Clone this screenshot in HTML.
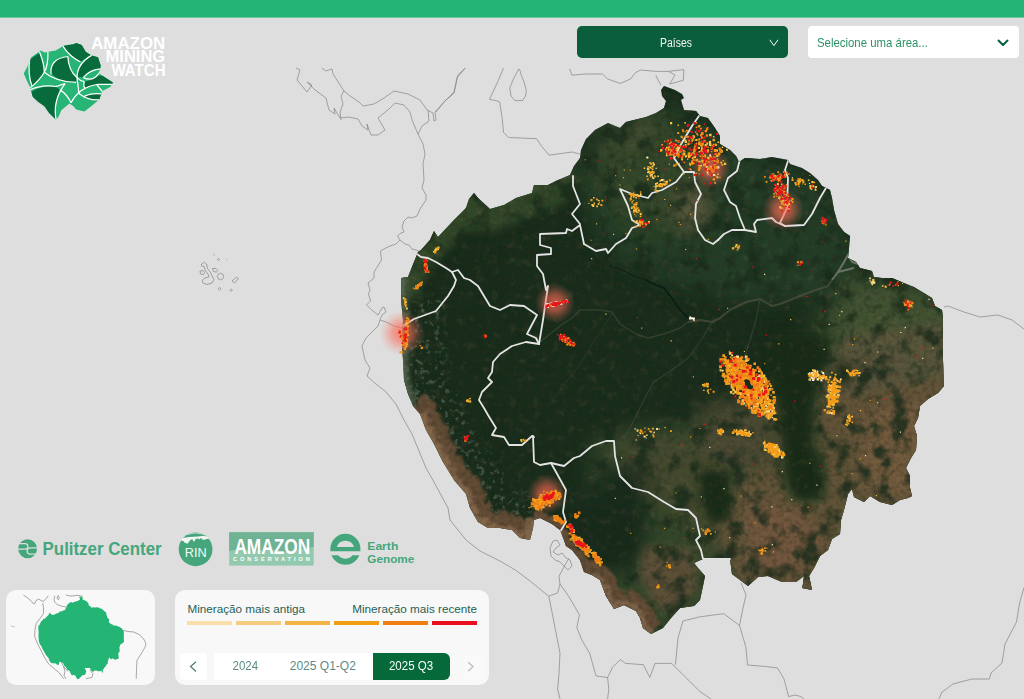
<!DOCTYPE html>
<html lang="pt"><head><meta charset="utf-8"><title>Amazon Mining Watch</title>
<style>
html,body{margin:0;padding:0;}
body{width:1024px;height:699px;overflow:hidden;background:#dedede;font-family:"Liberation Sans",sans-serif;position:relative;}
#topbar{position:absolute;left:0;top:0;width:1024px;height:17px;background:#24b574;border-bottom:1px solid #6ec59e;}
#map{position:absolute;left:0;top:0;width:1024px;height:699px;}
#dd1{position:absolute;left:577px;top:26px;width:211px;height:32px;border-radius:5px;background:#0b5e3c;color:#f4f4f0;font-size:12px;line-height:34px;}
#dd1 span{position:absolute;left:82.8px;top:0;display:inline-block;transform:scaleX(0.85);transform-origin:0 50%;font-size:12.3px;}
#dd1 svg{position:absolute;left:192px;top:13px;}
#dd2{position:absolute;left:808px;top:26px;width:211px;height:32px;border-radius:4px;background:#fff;color:#2c9263;font-size:12.2px;line-height:34px;}
#dd2 span{position:absolute;left:9px;top:0;white-space:nowrap;display:inline-block;transform:scaleX(0.935);transform-origin:0 50%;}
#dd2 svg{position:absolute;left:189px;top:13px;}
#mini{position:absolute;left:6px;top:590px;width:149px;height:95px;border-radius:10px;background:#f8f8f8;overflow:hidden;}
#legend{position:absolute;left:175px;top:590px;width:314px;height:95px;border-radius:10px;background:#f8f8f8;}
#legend .t{position:absolute;top:12.4px;font-size:11.7px;color:#265f55;white-space:nowrap;line-height:14px;}
#legend .bar{position:absolute;top:31.2px;height:3.7px;width:45.3px;}
#legend .btn{position:absolute;top:63px;height:27px;border-radius:4px;}
#legend .yr span{display:inline-block;transform:scaleX(0.96);}
#legend .yr{position:absolute;top:63px;height:27px;line-height:27.5px;font-size:12px;color:#5c8a86;text-align:center;white-space:nowrap;}
</style></head><body>
<svg id="map" width="1024" height="699" viewBox="0 0 1024 699">
<defs>
<path id="amz" d="M401,300 L401.5,278 L408,277 L410,272 L414,262 L418,252 L421,250 L430,240 L434,231 L438,237 L454,220 L466,208 L469,199 L474,193 L478,198 L490,209 L504,205 L516,198 L532,193 L534,185 L548,185 L556,181 L570,175 L574,166 L580,158 L581,150 L586,139 L595,130 L608,123 L620,128 L626,122 L646,117 L656,113 L664,108 L666,101 L662,96 L661,90 L664,86 L675,90 L682,94 L684,98 L681,100 L684,110 L696,111 L700,116 L708,118 L715,128 L720,136 L720,144 L730,150 L736,156 L739,162 L745,158 L760,159 L772,157 L788,160 L790,164 L802,168 L810,173 L818,180 L822,186 L826,188 L830,190 L832,198 L834,210 L838,224 L844,232 L850,236 L849,248 L848,258 L856,262 L860,268 L872,271 L874,277 L882,278 L892,278 L904,283 L914,287 L924,293 L932,298 L935,306 L942,310 L943,316 L943,360 L944,386 L938,393 L928,399 L920,406 L918,418 L914,426 L917,436 L916,450 L911,458 L906,468 L910,476 L910,488 L912,496 L908,498 L900,500 L892,505 L880,502 L870,496 L864,502 L854,497 L852,489 L848,494 L844,510 L841,520 L840,534 L832,539 L828,550 L820,556 L814,568 L809,576 L811,585 L812,590 L802,588 L803,584 L804,576 L796,582 L782,582 L768,576 L758,577 L748,586 L740,580 L732,574 L730,559 L703,559 L694,563 L698,568 L705,576 L703,586 L700,600 L694,606 L680,608 L671,618 L663,628 L651,634 L643,628 L640,618 L636,611 L624,605 L614,609 L606,596 L600,580 L592,575 L584,572 L580,560 L572,550 L566,546 L564,540 L560,530 L552,524 L540,518 L534,520 L533,528 L530,540 L520,538 L512,530 L500,528 L488,528 L478,522 L470,508 L466,494 L454,480 L443,462 L434,444 L426,430 L420,414 L413,406 L408,394 L404,380 L403,360 L402,346 L403,320Z"/>
<clipPath id="amzclip"><use href="#amz"/></clipPath>
<filter id="b2" x="-20%" y="-20%" width="140%" height="140%"><feGaussianBlur stdDeviation="2"/></filter>
<filter id="b3" x="-20%" y="-20%" width="140%" height="140%"><feGaussianBlur stdDeviation="3"/></filter>
<filter id="b6" x="-20%" y="-20%" width="140%" height="140%"><feGaussianBlur stdDeviation="5"/></filter>
<filter id="b10" x="-30%" y="-30%" width="160%" height="160%"><feGaussianBlur stdDeviation="10"/></filter>
<filter id="rough" x="-10%" y="-10%" width="120%" height="120%"><feTurbulence type="fractalNoise" baseFrequency="0.13" numOctaves="3" seed="3" result="t"/><feDisplacementMap in="SourceGraphic" in2="t" scale="12" xChannelSelector="R" yChannelSelector="G"/><feGaussianBlur stdDeviation="1.1"/></filter>
<filter id="nbrown" color-interpolation-filters="sRGB" x="0" y="0" width="100%" height="100%">
<feTurbulence type="fractalNoise" baseFrequency="0.22" numOctaves="3" seed="5"/>
<feColorMatrix type="matrix" values="0 0 0 0 0.22  0 0 0 0 0.17  0 0 0 0 0.11  3.2 0 0 0 -1.45"/>
</filter>
<filter id="ncloud" color-interpolation-filters="sRGB" x="0" y="0" width="100%" height="100%">
<feTurbulence type="fractalNoise" baseFrequency="0.2" numOctaves="3" seed="8"/>
<feColorMatrix type="matrix" values="0 0 0 0 0.62  0 0 0 0 0.70  0 0 0 0 0.66  5 0 0 0 -2.75"/>
</filter>
<mask id="cm" maskUnits="userSpaceOnUse" x="380" y="200" width="300" height="460"><path d="M402,300 L403,330 L404,380 L413,406 L420,414 L426,430 L434,444 L443,462 L454,480 L466,494 L470,508 L477,520 L486,529 L500,531 L512,533 L521,540 L530,541 L534,520" fill="none" stroke="#fff" stroke-width="84" stroke-linejoin="round" filter="url(#b6)"/></mask>
<filter id="ngreen" color-interpolation-filters="sRGB" x="0" y="0" width="100%" height="100%">
<feTurbulence type="fractalNoise" baseFrequency="0.055" numOctaves="4" seed="4"/>
<feColorMatrix type="matrix" values="0 0 0 0 0.088  0 0 0 0 0.17  0 0 0 0 0.104  4.0 0 0 0 -1.9"/>
</filter>
<filter id="nlight" color-interpolation-filters="sRGB" x="0" y="0" width="100%" height="100%">
<feTurbulence type="fractalNoise" baseFrequency="0.12" numOctaves="3" seed="21"/>
<feColorMatrix type="matrix" values="0 0 0 0 0.66  0 0 0 0 0.52  0 0 0 0 0.38  0 3.5 0 0 -1.95"/>
</filter>
<filter id="nsub" color-interpolation-filters="sRGB" x="0" y="0" width="100%" height="100%">
<feTurbulence type="fractalNoise" baseFrequency="0.03" numOctaves="3" seed="9"/>
<feColorMatrix type="matrix" values="0 0 0 0 0.17  0 0 0 0 0.28  0 0 0 0 0.16  0 0 2.5 0 -1.1"/>
</filter>
<radialGradient id="glow"><stop offset="0" stop-color="#ff624e" stop-opacity="0.78"/><stop offset="0.4" stop-color="#fb6a55" stop-opacity="0.56"/><stop offset="0.75" stop-color="#f67460" stop-opacity="0.2"/><stop offset="1" stop-color="#f08070" stop-opacity="0"/></radialGradient>
</defs>
<g fill="none" stroke="#8a8a8a" stroke-width="0.75" stroke-linejoin="round">
<path d="M296,68 L300,70 L297,80 L307,92 L312,85 L307,82 L315,90 L326,98 L329,110 L335,114 L334,108 L340,118 L349,117 L358,119 L362,126 L368,130 L367,124 L371,135 L378,135 L385,130 L378,118 L389,109 L395,103 L404,105 L410,112 L412,120 L418,134 L422,126 L429,121 L428,110"/>
<path d="M322,68 L326,71 L332,69 L333,74 L344,91 L350,96 L359,102 L363,106 L374,104 L384,98 L394,91 L408,94 L420,100 L427,110 L433,113 L434,121 L436,120 L435,112 L446,100 L454,92 L457,78 L465,68"/>
<path d="M344,91 L341,96 L343,104 L340,112 L341,120"/>
<path d="M418,134 L423,144 L425,154 L423,164 L424,180 L422,188 L426,195 L426,200 L420,209 L417,216 L412,218 L408,217 L404,221 L402,227 L404,232 L401,233 L397.5,236 L400,240 L396,244 L390,246 L384,249 L380.5,251 L381.5,260 L374,272 L374,278 L368,283 L370,290 L368.5,294 L370.5,301 L366.5,305 L373,311 L378,315 L382,308 L384,307 L386,312 L382,315 L380,320 L378,326 L366,338 L362,346 L365,360 L370,368 L367,376 L376,384 L386,392 L396,404 L404,420 L412,434 L426,468 L434,482 L448,508 L450,520 L466,540 L480,551 L500,561 L515.4,570 L530.7,581.5 L548.7,596.3 L550,602 L555,627.6 L560,653 L559,673.6 L557.6,689 L560,699"/>
<path d="M548.7,596.3 L557.6,593 L560,584 L559,576.3 L566.6,562 L569,558.4"/>
<path d="M400,240 L405,244 L409,245 L412,249 L418,250.5 L419,252"/>
<path d="M380,320 L386,322 L394,326 L402,328"/>
<path d="M560,584 L569,596.8 L579.4,614.8 L576.8,627.6 L582,640.4 L589.6,653 L596,676 L607.6,677.5 L608.8,689 L607.6,699"/>
<path d="M607.6,677.5 L612.7,667 L620.4,659.6 L625.5,663.4 L643.4,664.7 L649.8,677.5 L655,663.4 L671.6,663.4 L684.4,676 L700,691.6 L711,699"/>
<path d="M675.4,664.7 L678,637.8 L683,621 L700,616.8 L723.7,613.7 L739.5,625.4"/>
<path d="M741,582.7 L746,595 L743,608 L739.5,625.4 L746,647.6 L747.5,665 L766.5,666.6 L777.5,668 L784,679 L788.6,696.6 L795,695 L801,696.6 L804,699"/>
<path d="M944,307 L948,306 L964,312 L980,317 L998,315 L1012,320 L1024,329"/>
<path d="M1024,587.5 L1019.6,603 L1016.5,622 L1005,644 L1002,663 L991,673 L989.5,679 L972,679 L953,684 L942,692 L939,699"/>
<path d="M503.5,68 L498.4,80.3 L489.5,99.4 L495.9,100.6 L499.7,102 L502.2,118.4 L503.5,132.4 L508.6,137.5 L536.5,138.7 L541.6,146.3 L549.2,155.2 L572,152 L579.7,154"/>
<path d="M518.7,68.9 L513,80 L509.8,88 L511,96 L515,100.6 L522.5,100.6 L525.5,96 L526.3,90.5 L524,82 L521.3,75.2 L519.5,69"/>
<path d="M569.5,68.9 L572,75.2 L584.7,74 L602.5,74 L607.6,79 L620.3,83.4 L630.5,79 L635.5,72.7 L640.6,70 L655.8,71.4 L668.5,71.4 L683.8,69.6 L683.3,80.3 L669.8,84 L675,75 L668.5,71.4"/>
<path d="M655.8,75.2 L658,80 L661,85.4"/>
<path d="M465.4,68 L457.8,75 L456,84 L454,93 L450,97 L445,100.6 L440,107 L436,112"/>
<path d="M553,541 L557,540 L560,545 L556,548 L553,552 L558,555 L562,553 L566,558 L570,560 L572,566 L568,570 L564,566 L560,562 L555,560 L551,556 L550,548 L553,541"/>
<path d="M204.5,262.2 L206.5,264 L207.5,268.5 L211,273 L212,276 L214,279.5 L212,283 L207,284.5 L203,283 L202.2,280.5 L205,278 L209,277 L208,274 L205.5,271 L204,266.5 L201.5,266 L201.2,264.5 L204.5,262.2"/>
<path d="M200,271 L203,270.5 L204.5,272.5 L203.5,274.5 L200.5,274 L200,271"/>
<path d="M212.5,268.5 L216,268.5 L217.8,270.5 L216.5,272.2 L213.5,271.5 L212.5,268.5"/>
<path d="M217.3,276.5 L218.2,274.2 L220.5,273.3 L222.8,274.2 L223.7,276.5 L222.8,278.8 L220.5,279.7 L218.2,278.8 L217.3,276.5"/>
<path d="M232,281 L236.5,277.2 L238.5,278.5 L234.5,283 L232,281"/>
<path d="M217.3,259.5 L218.5,258.3 L219.7,259.5 L218.5,260.7 L217.3,259.5"/>
<path d="M218.1,288.8 L219.5,287.4 L220.9,288.8 L219.5,290.2 L218.1,288.8"/>
<path d="M230,290.2 L231.2,289 L232.4,290.2 L231.2,291.4 L230,290.2"/>
<path d="M226.4,259.2 L227.2,259.8"/>
<path d="M213.6,254.2 L214.4,255.4"/>
</g>
<use href="#amz" fill="#172c1b"/>
<g clip-path="url(#amzclip)">
 <!-- colour zones -->
 <g filter="url(#b10)">
  <path fill="#203d25" d="M575,170 L600,125 L660,100 L720,130 L760,155 L830,185 L860,260 L940,300 L900,330 L820,300 L740,300 L660,280 L600,250Z"/>
  <path fill="#33472b" d="M596,436 L660,424 L720,420 L770,392 L800,340 L836,292 L880,270 L950,296 L950,640 L600,640 L580,540Z"/>
  <path fill="#3f5233" d="M856,276 L950,300 L950,395 L900,400 L850,390 L832,340 L838,300Z"/>
  <path fill="#43492f" d="M612,440 L700,436 L744,470 L736,556 L706,556 L692,520 L652,500 L622,484Z"/>
  <path fill="#172c1b" d="M566,490 L640,492 L650,530 L640,570 L600,580 L580,560Z"/>
  <path fill="#4a4a30" d="M700,404 L800,398 L830,420 L800,470 L740,480 L700,450Z"/>
  <path fill="#33472b" d="M590,130 L660,112 L690,150 L700,230 L640,236 L596,190Z"/>
  <path fill="#172c1b" d="M596,470 L640,462 L650,500 L620,520 L600,510Z"/>
  <ellipse cx="692" cy="208" rx="16" ry="20" fill="#5c5c40"/>
  <ellipse cx="636" cy="134" rx="20" ry="9" fill="#4a5236"/>
 </g>
 <path d="M404,300 L402,278 L418,254 L434,234 L466,208 L490,212 L532,196 L556,184 L574,172" fill="none" stroke="#314a2b" stroke-width="40" filter="url(#b6)" opacity="0.95"/>
 <g filter="url(#b6)">
  <path fill="#56553a" d="M846,334 L950,322 L950,400 L832,402 L822,372Z"/>
  <path fill="#58523a" d="M822,360 L900,350 L900,470 L826,470 L818,410Z"/>
  <path fill="#615238" d="M832,398 L950,376 L950,505 L900,512 L850,502 L846,540 L818,595 L780,590 L745,592 L726,562 L716,520 L738,482 L772,462 L792,500 L826,502 L824,440 L816,410Z"/>
  <path fill="#6f5a3d" d="M866,410 L935,400 L925,490 L880,498 L860,480Z"/>
  <path fill="#70563c" d="M745,500 L800,510 L828,540 L800,578 L752,572Z"/>
  <path fill="#5b4f37" d="M644,548 L690,548 L698,590 L672,612 L652,604 L640,572Z"/>
 </g>
 <rect x="395" y="80" width="555" height="560" filter="url(#ngreen)" opacity="0.8"/>
 <g filter="url(#b6)">
  <path fill="#152c19" d="M772,332 L822,332 L828,358 L814,398 L810,440 L822,468 L822,498 L796,500 L785,470 L782,430 L776,390 L768,360Z"/>
  <path fill="#152a19" d="M700,470 L728,470 L732,520 L712,524 L700,500Z"/>
  <path fill="#152a19" d="M836,362 L852,364 L850,384 L836,384Z"/>
 </g>
 <g mask="url(#cm)"><rect x="380" y="200" width="300" height="460" filter="url(#ncloud)" opacity="0.32"/></g>
 <g filter="url(#rough)">
 <path d="M413,406 L420,414 L426,430 L434,444 L443,462 L454,480 L466,494 L470,508 L477,520 L486,529 L500,531 L512,533 L521,540 L530,541 L534,520" fill="none" stroke="#614b36" stroke-width="36" stroke-linejoin="round"/>
 <path d="M534,520 L540,518 L552,524 L560,530 L566,546 L572,550 L580,560 L584,572" fill="none" stroke="#614b36" stroke-width="14" stroke-linejoin="round"/>
 <path d="M584,572 L592,575 L600,580 L606,596 L614,609 L624,605 L636,611 L640,618 L643,628 L651,634" fill="none" stroke="#614b36" stroke-width="30" stroke-linejoin="round"/>
 <path d="M420,414 L426,430 L434,444 L443,462 L454,480 L466,494 L470,508 L477,520 L486,529 L500,531 L512,533 L521,540 L530,541 L534,520" fill="none" stroke="#80654a" stroke-width="13" stroke-linejoin="round"/>
 <path d="M592,575 L600,580 L606,596 L614,609 L624,605 L636,611 L640,618 L643,628 L651,634" fill="none" stroke="#7b6248" stroke-width="9" stroke-linejoin="round"/>
 </g>
 <path d="M404,255 L402,300 L403,330 L404,380 L413,406" fill="none" stroke="#5a6a55" stroke-width="8" filter="url(#b3)"/>
 <rect x="395" y="80" width="555" height="560" filter="url(#nlight)" opacity="0.13"/>
 <rect x="395" y="80" width="555" height="560" filter="url(#nbrown)" opacity="0.3"/>
 <!-- rivers -->
 <g fill="none" stroke="#46503c" stroke-width="1.4" opacity="0.55" stroke-linejoin="round">
  <path d="M540,342 L560,326 L572,318 L580,310 L600,310 L612,312 L620,324 L636,334 L648,338 L664,334 L680,328 L688,322 L700,320 L712,322 L720,318 L730,310 L746,302 L760,299"/>
  <path d="M688,322 L700,320 L712,322 L720,318 L730,310 L746,302 L760,299 L772,306 L780,304 L790,300 L810,292 L828,286 L832,280" stroke="#5e5848" stroke-width="2.2" opacity="1"/>
  <path d="M712,322 L700,342 L688,358 L672,370 L654,382 L648,392 L640,408 L634,420 L624,440" stroke-width="1.1"/>
  <path d="M612,314 L600,332 L590,348 L580,364 L568,380 L556,396" stroke-width="0.9" opacity="0.7"/>
  <path d="M760,299 L756,320 L750,340 L744,360" stroke-width="1.1"/>
 </g>
 <path d="M832,280 L838,272 L844,262 L848,255 L852,262 L858,264 M838,272 L846,270 L854,268" fill="none" stroke="#7d8078" stroke-width="2" opacity="0.8"/>
 <path d="M646,280 L656,285 L664,288 L672,298 L680,310 L688,318" fill="none" stroke="#0b1a10" stroke-width="1.8" opacity="0.85"/>
 <path d="M610,266 L622,270 L634,276 L646,280" fill="none" stroke="#0b1a10" stroke-width="1.1" opacity="0.7"/>
</g>
<g fill="none" stroke="#e4e4e4" stroke-width="1.8" stroke-linejoin="round" stroke-linecap="round" clip-path="url(#amzclip)">
<path d="M403,326 L414,319 L436,311 L448,296 L454,286 L456,280 L452,272 L446,268 L436,262 L428,258 L421,257 L417,254"/>
<path d="M452,272 L458,270 L464,278 L470,280 L478,286 L484,296 L490,306 L500,310 L510,305 L524,306 L537,315 L527,334 L536,338 L539,344"/>
<path d="M539,344 L543,320 L548,286 L546,290 L543,274 L537,266 L537,255 L551,254 L551,248 L540,245 L540,234 L566,233 L567,229 L572,231 L580,225 L584,244"/>
<path d="M573,176 L573,186 L580,204 L572,214 L580,224"/>
<path d="M584,244 L596,251 L606,249 L608,253 L616,244 L626,238 L632,228 L640,225 L632,220 L628,206 L620,189 L632,194 L648,198 L652,193 L662,190 L676,182 L684,172"/>
<path d="M699,116 L692,126 L686,136 L680,146 L674,158 L684,172"/>
<path d="M684,172 L694,172 L695,182 L701,194 L696,204 L695,218 L698,230 L705,240 L713,244 L718,240"/>
<path d="M740,159 L737,171 L728,178 L724,190 L730,202 L736,206 L740,218 L745,230"/>
<path d="M718,240 L724,234 L732,230 L745,230 L756,232 L754,224 L757,220 L772,218 L776,222 L785,226"/>
<path d="M788,161 L785,170 L788,178 L787,208 L780,223 L785,226"/>
<path d="M785,226 L804,225 L812,214 L820,198 L826,188"/>
<path d="M539,344 L526,342 L512,346 L500,354 L493,362 L492,372 L488,378 L492,382 L482,392 L479,400 L484,408 L488,415 L496,428 L492,435 L504,437 L509,445 L522,445 L532,436 L534,437"/>
<path d="M533,436 L534,462 L540,465 L551,463 L566,490 L563,512 L566,522 L560,532 L562,540"/>
<path d="M551,463 L564,466 L574,458 L580,456 L592,446 L606,441 L614,441 L615,456 L620,476 L632,488 L648,492 L664,502 L676,509 L688,510 L696,518 L700,536 L696,540 L701,550 L703,559 L730,559"/>
</g>
<circle cx="711" cy="168" r="20" fill="url(#glow)"/>
<circle cx="783" cy="210" r="21" fill="url(#glow)"/>
<circle cx="555" cy="303" r="20" fill="url(#glow)"/>
<circle cx="402" cy="333" r="23" fill="url(#glow)"/>
<circle cx="547" cy="494" r="20" fill="url(#glow)"/>
<g>
<path fill="#fde9a8" d="M706.0,165.7h1.7v1.7h-1.7zM717.1,166.3h2.3v2.3h-2.3zM706.8,171.9h1.7v1.7h-1.7zM712.6,166.9h1.9v1.9h-1.9zM712.8,173.9h2.1v2.1h-2.1zM705.7,167.8h2.1v2.1h-2.1zM709.3,154.3h1.7v1.7h-1.7zM703.4,163.3h2.2v2.2h-2.2zM710.0,174.6h1.7v1.7h-1.7zM649.8,175.5h1.1v1.1h-1.1zM647.0,171.8h1.3v1.3h-1.3zM650.7,171.6h1.3v1.3h-1.3zM652.4,177.2h1.9v1.9h-1.9zM646.3,156.4h2.1v2.1h-2.1zM649.4,162.3h1.5v1.5h-1.5zM650.6,174.2h1.1v1.1h-1.1zM651.9,176.2h1.2v1.2h-1.2zM647.3,168.6h2.0v2.0h-2.0zM651.4,174.0h1.4v1.4h-1.4zM655.6,167.8h1.1v1.1h-1.1zM649.3,172.3h2.0v2.0h-2.0zM651.4,175.6h1.0v1.0h-1.0zM657.1,185.5h1.2v1.2h-1.2zM659.6,182.9h1.2v1.2h-1.2zM666.1,180.7h1.6v1.6h-1.6zM655.2,188.6h1.2v1.2h-1.2zM665.4,181.2h1.7v1.7h-1.7zM660.7,183.5h1.8v1.8h-1.8zM661.0,185.3h1.5v1.5h-1.5zM661.0,179.1h2.0v2.0h-2.0zM665.7,181.3h1.3v1.3h-1.3zM658.5,184.1h1.7v1.7h-1.7zM791.8,177.3h1.3v1.3h-1.3zM797.7,180.6h2.1v2.1h-2.1zM799.7,180.0h1.3v1.3h-1.3zM756.2,381.7h1.8v1.8h-1.8zM754.3,395.6h2.5v2.5h-2.5zM740.9,386.1h1.7v1.7h-1.7zM748.3,402.4h2.8v2.8h-2.8zM743.7,371.2h1.7v1.7h-1.7zM733.9,378.4h2.9v2.9h-2.9zM743.1,402.5h1.9v1.9h-1.9zM762.9,388.4h2.9v2.9h-2.9zM736.2,361.5h2.9v2.9h-2.9zM741.5,372.3h1.9v1.9h-1.9zM753.1,405.5h2.6v2.6h-2.6zM754.5,390.7h2.4v2.4h-2.4zM755.9,402.8h2.8v2.8h-2.8zM739.4,374.3h1.6v1.6h-1.6zM730.6,370.6h3.0v3.0h-3.0zM740.1,366.3h2.4v2.4h-2.4zM736.0,355.4h3.0v3.0h-3.0zM765.0,394.2h2.3v2.3h-2.3zM732.9,379.2h1.9v1.9h-1.9zM760.4,386.5h2.8v2.8h-2.8zM738.5,374.5h1.8v1.8h-1.8zM743.6,367.7h1.7v1.7h-1.7zM751.7,410.4h3.1v3.1h-3.1zM731.7,359.2h2.1v2.1h-2.1zM721.8,369.8h1.8v1.8h-1.8zM772.4,391.0h1.8v1.8h-1.8zM765.2,396.1h3.2v3.2h-3.2zM740.9,374.6h1.7v1.7h-1.7zM765.0,404.7h2.1v2.1h-2.1zM736.1,389.0h1.9v1.9h-1.9zM738.4,385.8h3.1v3.1h-3.1zM768.8,388.0h2.1v2.1h-2.1zM752.3,396.1h2.5v2.5h-2.5zM727.2,368.2h1.9v1.9h-1.9zM758.1,379.8h2.0v2.0h-2.0zM739.3,377.0h2.9v2.9h-2.9zM737.9,392.1h2.4v2.4h-2.4zM746.3,390.4h2.9v2.9h-2.9zM749.9,401.9h1.9v1.9h-1.9zM756.1,404.6h2.5v2.5h-2.5zM743.1,389.5h3.1v3.1h-3.1zM731.6,366.2h2.3v2.3h-2.3zM735.5,376.2h1.7v1.7h-1.7zM757.5,374.4h2.5v2.5h-2.5zM741.8,370.1h2.0v2.0h-2.0zM751.6,375.0h2.3v2.3h-2.3zM749.8,400.4h1.8v1.8h-1.8zM748.3,375.8h2.7v2.7h-2.7zM755.0,406.7h2.5v2.5h-2.5zM731.2,354.5h1.8v1.8h-1.8zM761.1,383.6h2.1v2.1h-2.1zM767.3,414.9h2.8v2.8h-2.8zM740.8,378.9h2.8v2.8h-2.8zM764.5,401.5h2.4v2.4h-2.4zM758.1,369.5h2.8v2.8h-2.8zM755.9,408.8h2.8v2.8h-2.8zM762.2,380.0h2.9v2.9h-2.9zM766.7,398.2h2.1v2.1h-2.1zM740.9,380.4h1.7v1.7h-1.7zM756.8,380.1h2.5v2.5h-2.5zM747.5,388.9h2.0v2.0h-2.0zM724.2,358.6h2.1v2.1h-2.1zM753.1,407.1h2.1v2.1h-2.1zM752.6,394.5h2.4v2.4h-2.4zM755.0,404.0h3.0v3.0h-3.0zM755.4,386.6h2.4v2.4h-2.4zM737.4,380.5h2.6v2.6h-2.6zM758.5,388.6h2.3v2.3h-2.3zM764.0,411.2h2.4v2.4h-2.4zM768.8,405.9h2.7v2.7h-2.7zM770.1,405.5h2.3v2.3h-2.3zM769.9,407.3h1.7v1.7h-1.7zM771.6,416.7h1.6v1.6h-1.6zM768.3,405.6h2.6v2.6h-2.6zM768.2,407.7h2.7v2.7h-2.7zM769.8,413.6h1.5v1.5h-1.5zM764.5,407.9h2.1v2.1h-2.1zM770.5,413.1h2.0v2.0h-2.0zM768.0,410.4h2.0v2.0h-2.0zM765.6,408.0h2.3v2.3h-2.3zM766.8,414.4h2.5v2.5h-2.5zM768.1,403.4h1.5v1.5h-1.5zM770.1,412.7h2.3v2.3h-2.3zM771.8,409.8h2.4v2.4h-2.4zM767.6,413.8h1.7v1.7h-1.7zM766.7,409.8h1.7v1.7h-1.7zM765.7,407.9h2.1v2.1h-2.1zM764.2,411.0h1.8v1.8h-1.8zM767.9,408.2h1.5v1.5h-1.5zM766.5,407.7h2.0v2.0h-2.0zM770.9,407.7h1.7v1.7h-1.7zM771.4,410.6h2.7v2.7h-2.7zM765.5,410.0h2.4v2.4h-2.4zM761.6,406.5h2.8v2.8h-2.8zM770.8,411.7h2.2v2.2h-2.2zM764.3,398.3h1.5v1.5h-1.5zM743.9,432.4h2.1v2.1h-2.1zM742.2,431.4h1.8v1.8h-1.8zM731.9,431.9h1.8v1.8h-1.8zM738.2,432.2h2.0v2.0h-2.0zM749.6,433.2h2.0v2.0h-2.0zM746.1,431.9h2.0v2.0h-2.0zM741.0,430.3h1.9v1.9h-1.9zM741.6,431.6h2.0v2.0h-2.0zM739.7,429.6h1.6v1.6h-1.6zM741.2,431.0h2.0v2.0h-2.0zM747.6,432.0h2.1v2.1h-2.1zM741.8,431.6h2.0v2.0h-2.0zM743.1,432.5h1.7v1.7h-1.7zM742.4,432.8h2.1v2.1h-2.1zM772.8,446.3h2.4v2.4h-2.4zM775.8,451.9h1.5v1.5h-1.5zM767.5,445.5h2.2v2.2h-2.2zM772.9,451.9h1.8v1.8h-1.8zM768.1,448.7h2.5v2.5h-2.5zM766.7,444.0h1.7v1.7h-1.7zM769.1,447.3h1.5v1.5h-1.5zM775.2,448.4h2.3v2.3h-2.3zM777.8,450.4h2.7v2.7h-2.7zM774.0,449.1h1.4v1.4h-1.4zM769.1,447.6h1.6v1.6h-1.6zM776.6,452.6h2.7v2.7h-2.7zM772.7,447.4h2.6v2.6h-2.6zM773.1,450.7h1.9v1.9h-1.9zM771.0,445.3h1.6v1.6h-1.6zM774.2,446.0h1.8v1.8h-1.8zM769.1,446.1h2.4v2.4h-2.4zM774.0,452.0h2.5v2.5h-2.5zM777.8,451.5h2.6v2.6h-2.6zM768.3,448.5h1.8v1.8h-1.8zM765.0,445.4h1.8v1.8h-1.8zM769.0,444.6h2.3v2.3h-2.3zM773.2,449.4h2.1v2.1h-2.1zM777.6,449.2h2.3v2.3h-2.3zM774.5,452.5h2.3v2.3h-2.3zM777.7,451.6h1.9v1.9h-1.9zM781.0,456.1h2.5v2.5h-2.5zM776.3,451.8h1.9v1.9h-1.9zM834.1,395.9h1.8v1.8h-1.8zM833.2,384.9h2.3v2.3h-2.3zM828.3,390.9h1.7v1.7h-1.7zM832.6,384.2h2.1v2.1h-2.1zM836.6,390.0h2.6v2.6h-2.6zM827.2,394.2h2.1v2.1h-2.1zM829.0,385.0h2.3v2.3h-2.3zM828.9,411.8h1.9v1.9h-1.9zM830.9,412.0h2.2v2.2h-2.2zM833.8,384.7h1.6v1.6h-1.6zM829.2,394.9h2.5v2.5h-2.5zM831.3,391.0h1.8v1.8h-1.8zM832.8,404.2h1.5v1.5h-1.5zM831.9,394.5h2.3v2.3h-2.3zM833.5,388.9h2.0v2.0h-2.0zM833.8,381.8h1.4v1.4h-1.4zM836.7,380.0h1.7v1.7h-1.7zM830.8,395.5h2.2v2.2h-2.2zM839.9,378.6h1.8v1.8h-1.8zM827.6,388.6h1.6v1.6h-1.6zM833.2,393.0h2.3v2.3h-2.3zM834.2,389.5h1.4v1.4h-1.4zM830.5,401.5h2.1v2.1h-2.1zM832.2,395.1h2.1v2.1h-2.1zM831.9,399.5h2.5v2.5h-2.5zM833.5,395.5h1.6v1.6h-1.6zM826.5,405.4h2.2v2.2h-2.2zM816.5,370.4h1.8v1.8h-1.8zM816.1,374.4h2.2v2.2h-2.2zM820.5,376.8h2.3v2.3h-2.3zM821.0,375.7h1.9v1.9h-1.9zM812.0,372.5h2.6v2.6h-2.6zM815.0,373.6h1.5v1.5h-1.5zM815.3,374.9h2.1v2.1h-2.1zM817.1,378.4h1.7v1.7h-1.7zM808.8,378.5h2.3v2.3h-2.3zM821.4,376.2h2.2v2.2h-2.2zM811.4,373.1h2.3v2.3h-2.3zM810.8,372.2h1.8v1.8h-1.8zM816.6,378.0h2.4v2.4h-2.4zM820.4,377.8h1.7v1.7h-1.7zM810.5,375.4h2.0v2.0h-2.0zM812.3,374.8h2.0v2.0h-2.0zM822.3,377.4h1.7v1.7h-1.7zM821.9,376.3h2.5v2.5h-2.5zM871.6,281.1h2.0v2.0h-2.0zM869.3,277.6h1.6v1.6h-1.6zM869.6,280.3h1.1v1.1h-1.1zM871.3,281.5h1.9v1.9h-1.9zM873.1,281.5h2.2v2.2h-2.2zM871.6,283.8h1.4v1.4h-1.4zM870.8,281.6h2.1v2.1h-2.1zM872.0,281.1h2.2v2.2h-2.2zM689.5,316.3h1.5v1.5h-1.5zM692.7,318.3h2.0v2.0h-2.0zM693.4,317.9h1.2v1.2h-1.2zM693.4,320.0h1.2v1.2h-1.2zM656.1,427.9h2.1v2.1h-2.1zM645.8,437.5h1.0v1.0h-1.0zM639.7,432.7h1.6v1.6h-1.6zM643.6,435.6h2.0v2.0h-2.0zM634.5,428.2h1.3v1.3h-1.3zM636.7,429.6h1.5v1.5h-1.5zM653.4,431.8h1.4v1.4h-1.4zM781.7,471.1h1.2v1.2h-1.2zM791.2,499.1h1.2v1.2h-1.2zM709.2,446.8h1.2v1.2h-1.2zM828.6,323.7h1.2v1.2h-1.2zM922.1,357.7h1.2v1.2h-1.2zM816.3,484.5h1.2v1.2h-1.2zM723.3,488.1h1.2v1.2h-1.2zM771.2,506.3h1.2v1.2h-1.2zM928.4,298.8h1.2v1.2h-1.2zM877.1,351.4h1.2v1.2h-1.2zM864.9,455.1h1.2v1.2h-1.2zM900.2,331.9h1.2v1.2h-1.2zM841.3,311.0h1.2v1.2h-1.2zM764.0,273.8h1.2v1.2h-1.2zM899.8,431.6h1.2v1.2h-1.2zM770.4,394.6h1.2v1.2h-1.2zM771.7,544.1h1.2v1.2h-1.2zM621.0,457.2h1.2v1.2h-1.2zM864.4,362.1h1.2v1.2h-1.2zM904.7,327.1h1.2v1.2h-1.2zM703.3,389.8h1.2v1.2h-1.2zM635.6,439.4h1.2v1.2h-1.2zM823.5,348.7h1.2v1.2h-1.2z"/>
<path fill="#fff" d="M820.4,379.2h2.0v2.0h-2.0zM811.6,372.1h1.5v1.5h-1.5zM809.0,372.3h1.5v1.5h-1.5zM813.4,377.3h1.9v1.9h-1.9zM822.2,372.0h2.0v2.0h-2.0zM817.0,373.8h2.2v2.2h-2.2zM820.3,376.1h2.3v2.3h-2.3zM813.3,374.8h1.8v1.8h-1.8zM813.5,371.3h2.5v2.5h-2.5zM823.0,374.6h1.7v1.7h-1.7zM810.7,374.0h2.3v2.3h-2.3zM812.1,378.6h2.3v2.3h-2.3zM814.0,369.8h1.8v1.8h-1.8zM810.8,376.4h2.3v2.3h-2.3zM817.6,374.5h1.9v1.9h-1.9zM566.2,301.1h1.3v1.3h-1.3zM558.0,302.1h2.0v2.0h-2.0zM555.7,303.7h1.7v1.7h-1.7zM548.2,303.5h1.9v1.9h-1.9zM546.6,305.6h2.4v2.4h-2.4zM565.5,299.5h1.9v1.9h-1.9zM562.2,301.2h1.3v1.3h-1.3zM550.4,302.5h1.5v1.5h-1.5zM555.0,301.1h2.3v2.3h-2.3zM554.8,302.2h1.8v1.8h-1.8zM546.9,305.3h2.0v2.0h-2.0zM551.4,304.3h2.2v2.2h-2.2zM560.1,302.7h2.1v2.1h-2.1zM561.9,301.1h1.7v1.7h-1.7zM553.0,304.4h2.3v2.3h-2.3zM546.0,303.3h2.2v2.2h-2.2zM552.3,303.5h2.1v2.1h-2.1zM690.4,317.2h2.1v2.1h-2.1zM692.3,317.4h1.8v1.8h-1.8zM693.2,317.5h1.6v1.6h-1.6zM689.1,317.6h2.0v2.0h-2.0z"/>
<path fill="#fbc54a" d="M686.6,136.7h1.3v1.3h-1.3zM691.7,157.2h1.9v1.9h-1.9zM716.2,154.8h2.1v2.1h-2.1zM709.0,144.0h2.1v2.1h-2.1zM682.9,152.6h2.4v2.4h-2.4zM702.1,155.6h1.5v1.5h-1.5zM673.4,154.4h2.5v2.5h-2.5zM687.9,155.0h1.9v1.9h-1.9zM724.0,162.7h2.2v2.2h-2.2zM701.0,147.9h2.0v2.0h-2.0zM700.5,141.8h2.4v2.4h-2.4zM676.6,147.9h1.7v1.7h-1.7zM700.3,144.4h2.2v2.2h-2.2zM683.0,145.2h1.2v1.2h-1.2zM693.1,136.0h1.9v1.9h-1.9zM721.8,146.6h1.4v1.4h-1.4zM689.6,165.0h1.2v1.2h-1.2zM704.6,143.9h2.3v2.3h-2.3zM709.1,133.8h2.5v2.5h-2.5zM701.7,150.1h2.2v2.2h-2.2zM697.4,153.9h1.2v1.2h-1.2zM696.3,133.3h1.5v1.5h-1.5zM698.4,160.7h2.1v2.1h-2.1zM715.6,149.5h2.4v2.4h-2.4zM684.7,140.6h2.3v2.3h-2.3zM695.1,131.4h1.3v1.3h-1.3zM700.2,164.8h1.8v1.8h-1.8zM675.4,153.5h2.6v2.6h-2.6zM712.9,136.1h1.5v1.5h-1.5zM692.2,152.3h2.5v2.5h-2.5zM681.2,158.6h1.8v1.8h-1.8zM706.5,142.4h1.7v1.7h-1.7zM678.4,163.0h1.3v1.3h-1.3zM700.9,135.9h1.2v1.2h-1.2zM694.9,144.4h1.9v1.9h-1.9zM684.8,144.0h1.7v1.7h-1.7zM701.1,140.7h1.2v1.2h-1.2zM720.4,161.7h1.7v1.7h-1.7zM707.2,156.8h2.3v2.3h-2.3zM712.3,145.3h1.3v1.3h-1.3zM717.4,173.5h1.4v1.4h-1.4zM715.2,144.2h1.9v1.9h-1.9zM705.8,150.6h2.4v2.4h-2.4zM698.5,151.0h1.7v1.7h-1.7zM695.5,172.4h1.4v1.4h-1.4zM704.7,163.8h1.9v1.9h-1.9zM703.9,136.8h1.3v1.3h-1.3zM680.3,166.8h1.2v1.2h-1.2zM698.2,164.4h1.8v1.8h-1.8zM707.1,149.3h1.9v1.9h-1.9zM709.9,144.7h1.6v1.6h-1.6zM701.6,132.6h1.9v1.9h-1.9zM682.3,149.7h1.4v1.4h-1.4zM701.4,159.8h2.6v2.6h-2.6zM709.4,156.0h2.3v2.3h-2.3zM709.0,143.2h2.4v2.4h-2.4zM700.8,149.4h1.9v1.9h-1.9zM691.8,162.0h1.7v1.7h-1.7zM688.1,155.6h2.5v2.5h-2.5zM708.8,140.9h2.3v2.3h-2.3zM713.9,149.4h2.1v2.1h-2.1zM690.3,169.1h1.3v1.3h-1.3zM701.8,141.5h1.5v1.5h-1.5zM691.6,139.9h1.5v1.5h-1.5zM726,148.8h1.9v1.9h-1.9zM700.6,134.2h1.3v1.3h-1.3zM709.5,140.7h1.6v1.6h-1.6zM720.6,149.9h2.2v2.2h-2.2zM684.3,139.4h2.0v2.0h-2.0zM685.0,155.3h2.1v2.1h-2.1zM670,122h2.2v2.2h-2.2zM697.7,146.7h2.4v2.4h-2.4zM695.6,139.1h2.0v2.0h-2.0zM717.6,141.4h1.7v1.7h-1.7zM693.6,155.6h2.5v2.5h-2.5zM709.8,165.7h1.9v1.9h-1.9zM716.4,176.3h2.0v2.0h-2.0zM707.6,174.0h1.2v1.2h-1.2zM711.5,167.2h2.1v2.1h-2.1zM710.9,159.5h1.8v1.8h-1.8zM714.0,162.9h1.9v1.9h-1.9zM711.8,171.0h1.5v1.5h-1.5zM665.9,154.4h1.8v1.8h-1.8zM666.5,147.4h2.5v2.5h-2.5zM672.7,150.1h2.3v2.3h-2.3zM665.2,149.0h1.5v1.5h-1.5zM667.6,148.7h2.0v2.0h-2.0zM673.1,143.5h2.3v2.3h-2.3zM677.5,140.2h2.3v2.3h-2.3zM660.3,148.9h2.2v2.2h-2.2zM672.9,146.3h1.9v1.9h-1.9zM676.3,149.1h1.2v1.2h-1.2zM673.9,153.8h1.8v1.8h-1.8zM678.8,145.0h1.7v1.7h-1.7zM668.9,143.1h2.6v2.6h-2.6zM671.2,145.0h2.2v2.2h-2.2zM676.6,146.2h2.2v2.2h-2.2zM676.1,149.7h2.2v2.2h-2.2zM667.2,151.9h1.8v1.8h-1.8zM677.9,153.7h1.7v1.7h-1.7zM668.4,152.8h2.6v2.6h-2.6zM668.3,145.9h1.8v1.8h-1.8zM666.1,152.3h2.0v2.0h-2.0zM666.0,146.8h1.7v1.7h-1.7zM671.3,149.3h1.8v1.8h-1.8zM669.2,152.3h1.5v1.5h-1.5zM646.9,168.1h1.9v1.9h-1.9zM654.9,183.1h1.6v1.6h-1.6zM647.0,167.6h1.6v1.6h-1.6zM651.5,168.3h1.0v1.0h-1.0zM652.4,168.9h1.0v1.0h-1.0zM643.7,167.5h1.5v1.5h-1.5zM657.4,175.4h1.6v1.6h-1.6zM654.0,171.6h1.0v1.0h-1.0zM651.7,170.7h1.9v1.9h-1.9zM652.9,172.6h1.3v1.3h-1.3zM649.7,174.7h1.5v1.5h-1.5zM652.3,161.9h1.6v1.6h-1.6zM649.2,166.5h2.0v2.0h-2.0zM652.9,163.5h2.1v2.1h-2.1zM646.3,175.6h1.5v1.5h-1.5zM647.9,171.1h2.1v2.1h-2.1zM651.6,165.5h2.0v2.0h-2.0zM662.2,185.4h1.2v1.2h-1.2zM656.5,182.3h1.7v1.7h-1.7zM662.7,178.9h1.6v1.6h-1.6zM666.2,181.1h1.7v1.7h-1.7zM656.0,190.1h2.2v2.2h-2.2zM659.6,180.1h1.7v1.7h-1.7zM655.1,186.6h1.6v1.6h-1.6zM660.5,184.6h1.7v1.7h-1.7zM662.8,183.3h2.0v2.0h-2.0zM661.3,185.5h1.4v1.4h-1.4zM653.6,185.9h1.1v1.1h-1.1zM658.5,185.5h1.7v1.7h-1.7zM664.0,183.9h1.9v1.9h-1.9zM662.3,183.5h1.4v1.4h-1.4zM659.5,179.7h1.8v1.8h-1.8zM655.2,184.7h2.0v2.0h-2.0zM772.2,175.2h1.9v1.9h-1.9zM778.6,179.4h1.6v1.6h-1.6zM773.4,177.8h1.8v1.8h-1.8zM771.7,177.7h1.5v1.5h-1.5zM771.2,176.9h1.3v1.3h-1.3zM771.3,179.9h2.0v2.0h-2.0zM780.1,176.3h2.1v2.1h-2.1zM778.3,177.7h2.2v2.2h-2.2zM773.4,175.9h2.1v2.1h-2.1zM774.2,174.7h1.6v1.6h-1.6zM776.7,175.2h1.0v1.0h-1.0zM784.0,173.5h1.4v1.4h-1.4zM784.9,194.8h1.9v1.9h-1.9zM780.5,185.9h1.4v1.4h-1.4zM779.6,189.4h1.8v1.8h-1.8zM779.0,188.1h1.8v1.8h-1.8zM776.9,183.1h2.0v2.0h-2.0zM779.5,190.3h2.2v2.2h-2.2zM778.5,196.5h2.1v2.1h-2.1zM779.1,191.3h1.7v1.7h-1.7zM786.2,183.9h1.6v1.6h-1.6zM780.6,192.5h1.2v1.2h-1.2zM780.8,188.5h1.4v1.4h-1.4zM780.8,183.6h1.7v1.7h-1.7zM775.8,193.2h1.2v1.2h-1.2zM775.1,184.7h1.2v1.2h-1.2zM784.7,199.2h1.9v1.9h-1.9zM781.4,207.4h1.3v1.3h-1.3zM785.3,198.8h1.8v1.8h-1.8zM788.1,203.0h2.1v2.1h-2.1zM787.9,207.5h2.2v2.2h-2.2zM787.3,202.4h2.0v2.0h-2.0zM784.9,203.6h1.2v1.2h-1.2zM786.8,205.1h1.9v1.9h-1.9zM789.5,203.3h1.1v1.1h-1.1zM778,197.8h1.1v1.1h-1.1zM783.9,204.7h1.4v1.4h-1.4zM782.1,199.6h1.8v1.8h-1.8zM783.7,200.8h1.7v1.7h-1.7zM785.1,202.1h1.8v1.8h-1.8zM790.6,200.1h1.1v1.1h-1.1zM781.4,201.9h1.2v1.2h-1.2zM784.6,203.5h1.2v1.2h-1.2zM779.2,206.3h2.1v2.1h-2.1zM786.6,201.3h1.0v1.0h-1.0zM807.9,179.4h1.6v1.6h-1.6zM802.6,181.7h1.6v1.6h-1.6zM794.5,182.0h1.8v1.8h-1.8zM799.6,177.9h1.2v1.2h-1.2zM799.4,180.7h1.5v1.5h-1.5zM809.4,185.0h2.2v2.2h-2.2zM808.8,182.8h1.3v1.3h-1.3zM811.3,181h2.0v2.0h-2.0zM814.6,188.9h1.9v1.9h-1.9zM814.6,187.1h1.4v1.4h-1.4zM809.5,187.2h1.5v1.5h-1.5zM815.0,186.0h2.0v2.0h-2.0zM810.8,188.4h1.5v1.5h-1.5zM810.3,187.7h1.7v1.7h-1.7zM812.3,185.2h2.0v2.0h-2.0zM631.6,202.4h1.1v1.1h-1.1zM637.6,209.3h2.1v2.1h-2.1zM633.0,209.7h2.1v2.1h-2.1zM634.9,203.5h1.4v1.4h-1.4zM633.1,205.6h1.8v1.8h-1.8zM633.4,206.4h1.8v1.8h-1.8zM634.7,209.8h2.0v2.0h-2.0zM631.7,206.4h1.1v1.1h-1.1zM635.8,211.0h1.5v1.5h-1.5zM634.5,208.7h1.2v1.2h-1.2zM633.7,205.4h1.1v1.1h-1.1zM629.8,197.5h1.7v1.7h-1.7zM639.7,212.9h2.0v2.0h-2.0zM630.9,207.2h1.8v1.8h-1.8zM635.5,203.6h1.8v1.8h-1.8zM634.5,204.4h1.2v1.2h-1.2zM634.9,209.7h1.7v1.7h-1.7zM630.3,198.5h1.4v1.4h-1.4zM633.9,207.0h1.5v1.5h-1.5zM636.7,212.1h1.1v1.1h-1.1zM635.7,208.3h1.4v1.4h-1.4zM648,221.9h1.6v1.6h-1.6zM638.5,221.8h1.2v1.2h-1.2zM641.6,223.5h1.6v1.6h-1.6zM639.9,220.9h1.9v1.9h-1.9zM634.0,221.0h1.7v1.7h-1.7zM641.0,222.1h1.7v1.7h-1.7zM638.8,221.2h1.7v1.7h-1.7zM645.2,223.3h1.9v1.9h-1.9zM642.1,222.8h1.2v1.2h-1.2zM641.6,223.2h1.0v1.0h-1.0zM635.9,220.1h2.0v2.0h-2.0zM648,222.3h1.5v1.5h-1.5zM648,221.1h1.9v1.9h-1.9zM639.3,220.4h1.2v1.2h-1.2zM591.4,204.0h1.9v1.9h-1.9zM596.2,205.6h1.7v1.7h-1.7zM592.3,205.0h2.0v2.0h-2.0zM597.3,199.5h1.1v1.1h-1.1zM593.0,197.0h1.5v1.5h-1.5zM598.2,199.9h1.5v1.5h-1.5zM593.6,202.6h1.3v1.3h-1.3zM593.6,203.9h1.0v1.0h-1.0zM597.8,203.1h1.8v1.8h-1.8zM635.2,196.8h1.7v1.7h-1.7zM636.2,194.0h2.1v2.1h-2.1zM639.8,193.8h1.9v1.9h-1.9zM638.0,195.7h1.3v1.3h-1.3zM638.5,194.9h1.5v1.5h-1.5zM630.6,195.5h1.8v1.8h-1.8zM640.1,193.1h1.1v1.1h-1.1zM633.2,191.8h1.0v1.0h-1.0zM633.6,194.0h2.1v2.1h-2.1zM636.2,194.0h1.7v1.7h-1.7zM745.1,359.3h2.7v2.7h-2.7zM735.4,368.0h1.9v1.9h-1.9zM759.7,387.0h1.7v1.7h-1.7zM731.9,359.2h2.1v2.1h-2.1zM755.8,379.8h3.1v3.1h-3.1zM749.5,394.6h1.7v1.7h-1.7zM754.0,386.6h2.7v2.7h-2.7zM727.3,375.3h1.7v1.7h-1.7zM736.4,365.6h2.4v2.4h-2.4zM739.8,392.3h2.9v2.9h-2.9zM742.8,360.5h2.5v2.5h-2.5zM739.1,380.9h2.2v2.2h-2.2zM741.4,399.3h2.9v2.9h-2.9zM739.5,387.0h1.9v1.9h-1.9zM754.9,379.9h3.0v3.0h-3.0zM757.1,379.7h3.2v3.2h-3.2zM762.2,388.0h2.0v2.0h-2.0zM760.0,397.8h2.8v2.8h-2.8zM733.4,381.2h3.1v3.1h-3.1zM751.7,395.2h2.1v2.1h-2.1zM726.4,364.8h2.0v2.0h-2.0zM762.1,374.6h3.2v3.2h-3.2zM731.8,379.0h2.2v2.2h-2.2zM766.4,408.1h2.0v2.0h-2.0zM759.3,381.4h1.8v1.8h-1.8zM741.2,362.6h1.9v1.9h-1.9zM750.1,393.2h2.2v2.2h-2.2zM750.4,407.0h2.0v2.0h-2.0zM744.8,355.6h2.8v2.8h-2.8zM751.9,397.7h2.2v2.2h-2.2zM738.7,396.2h2.5v2.5h-2.5zM739.5,371.7h1.9v1.9h-1.9zM752.0,381.8h2.9v2.9h-2.9zM746.5,375.7h2.9v2.9h-2.9zM732.4,377.2h1.7v1.7h-1.7zM728.1,382.6h2.0v2.0h-2.0zM753.3,387.6h1.6v1.6h-1.6zM756.0,374.1h2.4v2.4h-2.4zM753.4,386.3h2.4v2.4h-2.4zM740.3,379.0h2.6v2.6h-2.6zM755.3,391.7h2.8v2.8h-2.8zM748.0,394.9h2.4v2.4h-2.4zM730.7,385.6h3.0v3.0h-3.0zM753.6,390.2h3.0v3.0h-3.0zM735.4,371.3h2.7v2.7h-2.7zM730.7,373.0h2.1v2.1h-2.1zM755.2,379.5h2.3v2.3h-2.3zM750.0,398.7h2.6v2.6h-2.6zM746.4,358.3h2.7v2.7h-2.7zM742.1,367.7h2.0v2.0h-2.0zM734.2,390.6h3.0v3.0h-3.0zM764.0,401.8h2.1v2.1h-2.1zM758.0,393.3h2.6v2.6h-2.6zM760.6,373.7h2.0v2.0h-2.0zM763.3,390.5h2.3v2.3h-2.3zM745.4,392.1h2.4v2.4h-2.4zM732.6,356.7h3.0v3.0h-3.0zM764.1,393.7h2.3v2.3h-2.3zM728.7,364.8h3.2v3.2h-3.2zM747.0,395.8h2.6v2.6h-2.6zM738.7,372.4h2.2v2.2h-2.2zM767.0,389.5h2.2v2.2h-2.2zM754.3,389.8h2.2v2.2h-2.2zM760.0,380.8h2.7v2.7h-2.7zM754.4,381.3h2.2v2.2h-2.2zM749.4,391.7h1.9v1.9h-1.9zM764.9,392.4h2.1v2.1h-2.1zM742.6,392.1h2.4v2.4h-2.4zM747.1,401.9h2.5v2.5h-2.5zM736.3,381.1h1.8v1.8h-1.8zM749.3,400.9h3.1v3.1h-3.1zM742.8,373.3h2.8v2.8h-2.8zM745.1,387.8h2.1v2.1h-2.1zM728.9,352.1h2.7v2.7h-2.7zM752.4,379.1h1.8v1.8h-1.8zM729.9,391.1h2.4v2.4h-2.4zM734.6,377.2h1.8v1.8h-1.8zM754.5,409.3h1.8v1.8h-1.8zM743.1,386.5h2.1v2.1h-2.1zM730.4,371.6h2.1v2.1h-2.1zM746.8,373.2h1.8v1.8h-1.8zM751.0,393.8h1.8v1.8h-1.8zM738.6,369.7h1.9v1.9h-1.9zM725.3,365.1h2.0v2.0h-2.0zM749.1,374.8h1.7v1.7h-1.7zM732.6,373.0h2.6v2.6h-2.6zM741.4,375.4h1.9v1.9h-1.9zM754.7,393.8h2.1v2.1h-2.1zM764.2,377.4h2.5v2.5h-2.5zM732.2,372.7h3.1v3.1h-3.1zM746.2,397.3h2.4v2.4h-2.4zM734.9,385.1h2.0v2.0h-2.0zM732.2,388.6h2.6v2.6h-2.6zM758.7,386.3h3.2v3.2h-3.2zM745.6,401.3h1.9v1.9h-1.9zM719.6,369.3h2.1v2.1h-2.1zM749.8,379.6h2.0v2.0h-2.0zM764.7,386.7h2.8v2.8h-2.8zM734.1,365.4h1.6v1.6h-1.6zM739.1,377.9h2.4v2.4h-2.4zM739.6,387.0h1.8v1.8h-1.8zM747.3,390.8h3.0v3.0h-3.0zM740.4,372.2h2.8v2.8h-2.8zM749.8,393.4h1.6v1.6h-1.6zM754.9,392.9h1.7v1.7h-1.7zM760.8,400.2h1.8v1.8h-1.8zM748.6,396.4h1.6v1.6h-1.6zM740.7,381.5h2.7v2.7h-2.7zM753.2,406.6h1.7v1.7h-1.7zM730.6,381.0h2.9v2.9h-2.9zM747.7,395.8h2.6v2.6h-2.6zM755.9,404.3h2.7v2.7h-2.7zM735.7,377.9h2.9v2.9h-2.9zM755.2,394.6h2.7v2.7h-2.7zM752.9,393.1h3.1v3.1h-3.1zM741.3,374.5h2.5v2.5h-2.5zM734.0,372.0h1.6v1.6h-1.6zM751.2,382.1h3.1v3.1h-3.1zM752.1,371.1h2.8v2.8h-2.8zM721.5,363.4h2.7v2.7h-2.7zM744.4,375.5h2.6v2.6h-2.6zM753.5,382.7h2.5v2.5h-2.5zM765.0,387.1h2.8v2.8h-2.8zM740.2,381.8h1.8v1.8h-1.8zM725.0,379.3h3.1v3.1h-3.1zM739.9,373.3h1.6v1.6h-1.6zM749.5,395.5h2.9v2.9h-2.9zM766.7,412.6h2.9v2.9h-2.9zM749.3,372.6h3.1v3.1h-3.1zM759.2,383.8h2.7v2.7h-2.7zM751.1,380.5h2.7v2.7h-2.7zM742.0,372.0h1.9v1.9h-1.9zM738.0,365.2h2.2v2.2h-2.2zM738.0,359.5h2.6v2.6h-2.6zM759.0,397.2h1.6v1.6h-1.6zM727.8,369.2h2.3v2.3h-2.3zM759.2,376.7h3.1v3.1h-3.1zM739.7,387.0h2.8v2.8h-2.8zM759.6,380.9h2.4v2.4h-2.4zM753.6,385.7h1.9v1.9h-1.9zM734.9,380.0h3.1v3.1h-3.1zM743.9,396.4h2.6v2.6h-2.6zM743.2,384.2h1.8v1.8h-1.8zM746.5,394.0h2.9v2.9h-2.9zM742.6,374.1h1.7v1.7h-1.7zM740.5,377.1h1.9v1.9h-1.9zM741.9,389.8h2.5v2.5h-2.5zM751.0,401.3h1.9v1.9h-1.9zM740.5,366.4h3.0v3.0h-3.0zM732.5,362.8h1.8v1.8h-1.8zM753.7,378.2h1.7v1.7h-1.7zM732.4,392.7h1.8v1.8h-1.8zM772.4,407.0h2.6v2.6h-2.6zM746.7,395.4h1.8v1.8h-1.8zM748.9,395.2h2.0v2.0h-2.0zM752.6,378.4h1.8v1.8h-1.8zM730.5,383.6h1.8v1.8h-1.8zM759.3,389.6h2.7v2.7h-2.7zM736.8,378.8h3.0v3.0h-3.0zM771.5,404.3h2.4v2.4h-2.4zM767.4,417.2h2.4v2.4h-2.4zM772.2,412.1h2.3v2.3h-2.3zM768.4,415.6h2.6v2.6h-2.6zM767.7,401.9h2.0v2.0h-2.0zM763.8,401.1h2.1v2.1h-2.1zM768.4,408.3h1.9v1.9h-1.9zM766.8,414.7h2.7v2.7h-2.7zM768.8,406.7h1.9v1.9h-1.9zM767.7,413.9h2.7v2.7h-2.7zM764.9,408.0h2.2v2.2h-2.2zM771.2,404.4h2.5v2.5h-2.5zM762.2,407.1h1.5v1.5h-1.5zM768.1,412.8h2.6v2.6h-2.6zM768.6,407.7h2.6v2.6h-2.6zM766.8,405.9h1.7v1.7h-1.7zM766.5,407.1h2.0v2.0h-2.0zM766.8,406.1h2.2v2.2h-2.2zM773.2,411.9h2.3v2.3h-2.3zM768.0,406.1h2.3v2.3h-2.3zM768.3,402.8h2.7v2.7h-2.7zM770.2,413.4h2.5v2.5h-2.5zM769.5,408.7h1.7v1.7h-1.7zM767.8,414.3h2.2v2.2h-2.2zM773.4,417.9h2.7v2.7h-2.7zM744,363.1h2.8v2.8h-2.8zM729.0,361.2h2.5v2.5h-2.5zM733.0,365.3h2.1v2.1h-2.1zM738.4,361.2h1.5v1.5h-1.5zM728,364.2h2.1v2.1h-2.1zM729.4,362.5h2.4v2.4h-2.4zM742.8,362.6h2.4v2.4h-2.4zM733.3,358.7h1.5v1.5h-1.5zM734.7,360.5h2.2v2.2h-2.2zM741.5,364.1h1.6v1.6h-1.6zM739.5,364.3h2.8v2.8h-2.8zM732.1,363.5h1.6v1.6h-1.6zM736.2,433.3h2.2v2.2h-2.2zM743.6,432.2h2.5v2.5h-2.5zM740.2,433.2h1.5v1.5h-1.5zM737.7,431.0h1.6v1.6h-1.6zM740.7,431.4h1.8v1.8h-1.8zM735.8,429.3h1.6v1.6h-1.6zM744.7,431.9h1.8v1.8h-1.8zM746.7,432.5h2.1v2.1h-2.1zM741.1,433.4h2.6v2.6h-2.6zM735.2,430.7h1.7v1.7h-1.7zM748.6,435.1h1.8v1.8h-1.8zM748.3,430.7h1.6v1.6h-1.6zM744.7,433.8h2.0v2.0h-2.0zM736.1,432.3h2.3v2.3h-2.3zM740.9,431.6h2.4v2.4h-2.4zM744.3,432.2h1.4v1.4h-1.4zM741.2,430.2h1.8v1.8h-1.8zM741.8,432.8h2.3v2.3h-2.3zM748.0,433.2h1.5v1.5h-1.5zM732.8,431.8h1.7v1.7h-1.7zM742.1,432.4h1.5v1.5h-1.5zM744.1,429.3h2.0v2.0h-2.0zM745.2,432.3h2.0v2.0h-2.0zM774.7,445.7h2.7v2.7h-2.7zM775.6,450.1h1.8v1.8h-1.8zM774.7,451.3h1.7v1.7h-1.7zM772.4,450.0h2.0v2.0h-2.0zM773.8,450.5h2.3v2.3h-2.3zM782.3,451.5h1.7v1.7h-1.7zM776.0,451.1h1.4v1.4h-1.4zM778.4,453.3h2.2v2.2h-2.2zM772.7,453.4h2.8v2.8h-2.8zM772.9,451.9h1.9v1.9h-1.9zM775.0,444.1h2.7v2.7h-2.7zM777.8,449.3h1.5v1.5h-1.5zM762.9,442.1h2.5v2.5h-2.5zM767.6,445.0h2.2v2.2h-2.2zM771.2,445.0h1.8v1.8h-1.8zM770.5,449.8h1.9v1.9h-1.9zM778.3,448.2h1.5v1.5h-1.5zM768.9,447.5h2.7v2.7h-2.7zM775.8,449.2h1.4v1.4h-1.4zM765.6,449.6h1.5v1.5h-1.5zM776.0,451.6h2.7v2.7h-2.7zM772.9,449.4h2.0v2.0h-2.0zM776.7,447.7h1.5v1.5h-1.5zM767.1,446.9h1.7v1.7h-1.7zM770.9,451.1h1.4v1.4h-1.4zM763.8,448.4h2.4v2.4h-2.4zM773.5,448.7h2.3v2.3h-2.3zM775.9,454.8h2.8v2.8h-2.8zM764.0,445.8h1.7v1.7h-1.7zM778.6,452.4h2.1v2.1h-2.1zM764.2,445.1h2.6v2.6h-2.6zM771.5,453.8h1.5v1.5h-1.5zM718.2,432.1h2.1v2.1h-2.1zM721.5,430.7h2.2v2.2h-2.2zM718.6,430.4h2.3v2.3h-2.3zM721.8,430.1h2.3v2.3h-2.3zM719.5,428.8h2.1v2.1h-2.1zM720.2,429.1h1.7v1.7h-1.7zM831.7,388.8h2.2v2.2h-2.2zM832.4,407.2h1.6v1.6h-1.6zM831.5,393.7h1.5v1.5h-1.5zM828.6,384.0h1.5v1.5h-1.5zM828.6,405.9h1.4v1.4h-1.4zM835.4,399.9h2.6v2.6h-2.6zM825.8,395.3h2.5v2.5h-2.5zM830.6,384.4h2.2v2.2h-2.2zM830.4,391.9h1.9v1.9h-1.9zM834.5,388.6h2.0v2.0h-2.0zM832.2,384.3h1.6v1.6h-1.6zM830.9,385.8h2.8v2.8h-2.8zM826.5,411.4h2.3v2.3h-2.3zM830.2,400.2h2.4v2.4h-2.4zM832.0,389.1h2.1v2.1h-2.1zM828.9,388.7h2.6v2.6h-2.6zM833.5,389.9h1.9v1.9h-1.9zM828.7,385.5h2.6v2.6h-2.6zM830.3,385.7h1.7v1.7h-1.7zM830.3,386.9h2.5v2.5h-2.5zM830.2,386.0h2.5v2.5h-2.5zM829.7,392.1h2.8v2.8h-2.8zM833.6,389.3h1.5v1.5h-1.5zM832.9,379.2h1.7v1.7h-1.7zM834.7,373.7h1.8v1.8h-1.8zM837.0,393.7h2.7v2.7h-2.7zM831.9,395.7h2.4v2.4h-2.4zM834.5,390.3h2.7v2.7h-2.7zM835.9,385.3h2.7v2.7h-2.7zM832.8,387.8h2.2v2.2h-2.2zM834.8,391.6h2.1v2.1h-2.1zM831.8,404.2h1.9v1.9h-1.9zM832.0,402.6h2.8v2.8h-2.8zM832.7,389.7h2.3v2.3h-2.3zM829.6,406.4h1.6v1.6h-1.6zM828.4,396.9h1.6v1.6h-1.6zM818.2,376.6h2.2v2.2h-2.2zM829.3,376.3h1.9v1.9h-1.9zM814.8,374.3h2.5v2.5h-2.5zM814.3,373.2h2.6v2.6h-2.6zM813.5,373.8h2.2v2.2h-2.2zM815.3,376.0h1.8v1.8h-1.8zM812.0,369.2h2.1v2.1h-2.1zM816.5,373.6h2.0v2.0h-2.0zM824.8,377.4h2.3v2.3h-2.3zM818.4,377.8h1.4v1.4h-1.4zM813.9,369.7h1.5v1.5h-1.5zM809.4,373.4h1.9v1.9h-1.9zM825.1,375.9h2.0v2.0h-2.0zM816.0,372.1h2.3v2.3h-2.3zM807.8,373.1h2.1v2.1h-2.1zM821.5,377.4h1.8v1.8h-1.8zM856.9,370.1h1.5v1.5h-1.5zM858.5,375h1.4v1.4h-1.4zM852.8,370.9h1.4v1.4h-1.4zM853.0,374.4h1.8v1.8h-1.8zM853.2,373.1h1.7v1.7h-1.7zM856.9,372.1h2.1v2.1h-2.1zM849.8,372.9h1.8v1.8h-1.8zM852.1,370.9h1.9v1.9h-1.9zM850.6,372.3h2.3v2.3h-2.3zM846.0,369.4h2.3v2.3h-2.3zM847.5,370.9h1.5v1.5h-1.5zM858.7,372.1h1.9v1.9h-1.9zM848.5,417.2h2.1v2.1h-2.1zM845.0,423.7h1.3v1.3h-1.3zM847.6,417.2h1.2v1.2h-1.2zM849.1,419.2h1.8v1.8h-1.8zM847.1,415.8h2.1v2.1h-2.1zM851.2,415.8h1.8v1.8h-1.8zM848.5,418.1h2.2v2.2h-2.2zM846.8,420.3h1.4v1.4h-1.4zM848.8,420.4h1.5v1.5h-1.5zM846.4,424.3h1.4v1.4h-1.4zM846.1,421.9h1.3v1.3h-1.3zM705.9,382.8h2.0v2.0h-2.0zM702.0,383.9h1.9v1.9h-1.9zM706.2,383.0h2.3v2.3h-2.3zM706.6,385.5h2.1v2.1h-2.1zM548.8,495.5h2.7v2.7h-2.7zM548.4,499.9h2.7v2.7h-2.7zM550.1,501.3h2.0v2.0h-2.0zM554.8,493.0h1.4v1.4h-1.4zM548.4,495.8h2.7v2.7h-2.7zM538.4,497.7h1.6v1.6h-1.6zM554.3,492.6h1.9v1.9h-1.9zM548.0,501.3h1.7v1.7h-1.7zM533.7,499.9h1.7v1.7h-1.7zM548.9,499.1h1.9v1.9h-1.9zM536.0,498.9h2.1v2.1h-2.1zM538.5,500.5h1.4v1.4h-1.4zM538.8,502.2h2.0v2.0h-2.0zM548.7,498.0h1.8v1.8h-1.8zM548.3,497.4h1.9v1.9h-1.9zM544.2,499.5h2.7v2.7h-2.7zM544.6,500.7h2.7v2.7h-2.7zM542.0,505.8h2.5v2.5h-2.5zM544.5,497.7h2.1v2.1h-2.1zM548.5,496.6h2.6v2.6h-2.6zM554.9,498.4h1.9v1.9h-1.9zM537.6,502.0h2.4v2.4h-2.4zM552.5,496.4h1.6v1.6h-1.6zM546.3,497.7h1.6v1.6h-1.6zM548.2,493.3h2.2v2.2h-2.2zM553.9,496.7h2.0v2.0h-2.0zM534.7,500.5h2.1v2.1h-2.1zM531.1,502.6h2.1v2.1h-2.1zM540.7,498.9h1.7v1.7h-1.7zM554.4,495.8h2.1v2.1h-2.1zM534.2,499.9h1.7v1.7h-1.7zM538.7,500.3h2.3v2.3h-2.3zM540.7,499.5h2.0v2.0h-2.0zM541.8,499.7h1.6v1.6h-1.6zM534.5,500.7h2.0v2.0h-2.0zM539.8,500.1h2.8v2.8h-2.8zM538.9,496.7h2.4v2.4h-2.4zM549.5,498.0h2.3v2.3h-2.3zM551.4,498.9h1.8v1.8h-1.8zM588.8,550.8h2.0v2.0h-2.0zM573.7,541.1h2.2v2.2h-2.2zM578.0,544.5h2.1v2.1h-2.1zM585.0,547.1h2.2v2.2h-2.2zM578.1,536.8h2.5v2.5h-2.5zM583.2,547.6h2.5v2.5h-2.5zM576.8,537.9h1.4v1.4h-1.4zM585.7,549.9h1.7v1.7h-1.7zM572.3,539.5h1.7v1.7h-1.7zM584.1,544.7h2.3v2.3h-2.3zM587.9,555.7h1.6v1.6h-1.6zM581.8,545.2h2.6v2.6h-2.6zM579.7,541.6h1.6v1.6h-1.6zM583.5,546.0h1.6v1.6h-1.6zM582.6,547.3h1.5v1.5h-1.5zM586.9,551.7h1.6v1.6h-1.6zM573.8,538.8h1.5v1.5h-1.5zM575.4,538.8h2.3v2.3h-2.3zM575.1,538.9h2.5v2.5h-2.5zM584.1,549.5h2.0v2.0h-2.0zM577.4,543.1h2.5v2.5h-2.5zM576.8,542.4h1.7v1.7h-1.7zM572.7,530.9h2.2v2.2h-2.2zM580.1,539.4h2.5v2.5h-2.5zM405.3,337.4h1.9v1.9h-1.9zM404.9,334.3h1.5v1.5h-1.5zM406.0,326.2h2.1v2.1h-2.1zM405.5,332.2h1.7v1.7h-1.7zM405.7,333.4h1.3v1.3h-1.3zM406.7,325.6h1.7v1.7h-1.7zM405.5,345.2h1.8v1.8h-1.8zM404.2,340.3h1.8v1.8h-1.8zM404.4,338.9h1.5v1.5h-1.5zM404.3,343.6h1.4v1.4h-1.4zM405.7,322.6h1.9v1.9h-1.9zM405.0,346.9h1.4v1.4h-1.4zM405.4,322.3h1.5v1.5h-1.5zM406.9,333.9h2.2v2.2h-2.2zM405.6,343.2h2.1v2.1h-2.1zM406.4,332.6h1.6v1.6h-1.6zM404.3,348.4h1.7v1.7h-1.7zM406.8,321.2h2.1v2.1h-2.1zM405.3,332.0h1.6v1.6h-1.6zM406.0,330.2h1.3v1.3h-1.3zM404.4,340.6h1.7v1.7h-1.7zM434.1,251.1h1.8v1.8h-1.8zM435.5,247.4h1.8v1.8h-1.8zM434.1,251.0h1.9v1.9h-1.9zM435.1,248.3h1.7v1.7h-1.7zM433.0,250.9h1.5v1.5h-1.5zM434.1,249.7h1.9v1.9h-1.9zM434.6,249.0h2.0v2.0h-2.0zM437.3,248.1h1.8v1.8h-1.8zM437.5,246.6h2.0v2.0h-2.0zM437.5,247.9h1.3v1.3h-1.3zM405.1,305.9h1.2v1.2h-1.2zM405.9,307.6h2.0v2.0h-2.0zM405.3,301.2h1.6v1.6h-1.6zM404.3,301.6h1.8v1.8h-1.8zM402.8,297.3h1.9v1.9h-1.9zM405.5,301.7h1.3v1.3h-1.3zM405.1,298.6h1.1v1.1h-1.1zM469.1,400.4h2.1v2.1h-2.1zM469.6,398h1.3v1.3h-1.3zM466.5,400.1h2.0v2.0h-2.0zM466.1,399.6h2.1v2.1h-2.1zM910.3,304.6h1.9v1.9h-1.9zM906.3,301.2h1.3v1.3h-1.3zM910.3,301.5h2.2v2.2h-2.2zM905.2,303.7h2.4v2.4h-2.4zM909.2,301.8h2.1v2.1h-2.1zM908.8,303.4h1.5v1.5h-1.5zM882,285.3h1.5v1.5h-1.5zM897.4,281.4h1.2v1.2h-1.2zM895.3,284.3h1.2v1.2h-1.2zM902,283.0h1.0v1.0h-1.0zM884.8,285.8h1.9v1.9h-1.9zM872.2,279.1h2.2v2.2h-2.2zM871.9,282.6h1.7v1.7h-1.7zM870.8,281.8h1.4v1.4h-1.4zM735.6,244.0h2.0v2.0h-2.0zM734.7,245.7h1.9v1.9h-1.9zM738.1,247.6h1.2v1.2h-1.2zM732.3,247.3h2.0v2.0h-2.0zM737.1,246.6h1.7v1.7h-1.7zM708.1,392.8h1.2v1.2h-1.2zM706.7,390.5h1.3v1.3h-1.3zM707.8,389.2h1.4v1.4h-1.4zM664.5,427.1h1.2v1.2h-1.2zM652.2,427.8h1.6v1.6h-1.6zM646.0,434.4h1.7v1.7h-1.7zM644.3,427.6h1.2v1.2h-1.2zM636.6,429.8h1.9v1.9h-1.9zM652.4,434.3h1.4v1.4h-1.4zM520.9,440.8h1.5v1.5h-1.5zM520.7,440.5h1.2v1.2h-1.2zM520.3,439.1h2.0v2.0h-2.0zM743.8,350.9h1.2v1.2h-1.2zM670.6,340.2h1.2v1.2h-1.2zM753.3,387.0h1.2v1.2h-1.2zM637.5,434.9h1.2v1.2h-1.2zM836.5,435.0h1.2v1.2h-1.2zM835.2,293.0h1.2v1.2h-1.2zM859.8,410.1h1.2v1.2h-1.2zM700.7,496.3h1.2v1.2h-1.2zM729.0,537.0h1.2v1.2h-1.2zM877.1,402.0h1.2v1.2h-1.2zM740.5,495.4h1.2v1.2h-1.2zM778.2,343.3h1.2v1.2h-1.2zM714.7,531.4h1.2v1.2h-1.2zM614.7,497.8h1.2v1.2h-1.2zM605.3,313.6h1.2v1.2h-1.2zM790.1,319.0h1.2v1.2h-1.2zM659.6,546.4h1.2v1.2h-1.2zM875.7,495.1h1.2v1.2h-1.2zM932.3,347.6h1.2v1.2h-1.2zM613.1,233.8h1.1v1.1h-1.1zM588.4,203.0h1.1v1.1h-1.1zM668.7,163.7h1.1v1.1h-1.1zM591.1,258.1h1.1v1.1h-1.1zM685.1,249.0h1.1v1.1h-1.1zM664.2,198.9h1.1v1.1h-1.1zM670.1,204.8h1.1v1.1h-1.1zM619.4,184.4h1.1v1.1h-1.1zM596.1,223.3h1.1v1.1h-1.1zM615.1,175.2h1.1v1.1h-1.1zM633.2,196.7h1.1v1.1h-1.1zM683.7,173.5h1.1v1.1h-1.1zM623.7,169.5h1.1v1.1h-1.1z"/>
<path fill="#f59b16" d="M694.8,154.0h2.1v2.1h-2.1zM711.1,150.9h1.3v1.3h-1.3zM706.5,150.5h2.0v2.0h-2.0zM687.0,158.6h1.3v1.3h-1.3zM694.2,145.1h1.9v1.9h-1.9zM698.3,141.3h1.9v1.9h-1.9zM703.1,150.2h1.6v1.6h-1.6zM695.3,159.3h2.1v2.1h-2.1zM675.5,163.6h1.9v1.9h-1.9zM692.9,137.6h1.5v1.5h-1.5zM701.9,141.5h1.6v1.6h-1.6zM687.4,153.5h2.0v2.0h-2.0zM692.5,134.9h2.1v2.1h-2.1zM702.3,149.7h1.5v1.5h-1.5zM711.2,158.1h1.3v1.3h-1.3zM670,141.5h2.1v2.1h-2.1zM714.4,143.6h1.9v1.9h-1.9zM712.7,143.7h1.4v1.4h-1.4zM698.5,138.2h2.1v2.1h-2.1zM694.7,139.4h1.7v1.7h-1.7zM702.5,161.0h2.2v2.2h-2.2zM703.0,163.7h2.5v2.5h-2.5zM679.8,150.2h2.3v2.3h-2.3zM673.2,164.5h2.2v2.2h-2.2zM691.6,138.9h2.0v2.0h-2.0zM720.4,150.8h2.2v2.2h-2.2zM685.9,129.7h1.9v1.9h-1.9zM700.9,132.2h2.3v2.3h-2.3zM704.7,159.7h2.2v2.2h-2.2zM691.0,160.6h2.0v2.0h-2.0zM701.2,145.3h1.5v1.5h-1.5zM700.1,134.2h2.0v2.0h-2.0zM702.2,152.5h1.8v1.8h-1.8zM697.9,142.8h2.4v2.4h-2.4zM703.8,147.0h1.6v1.6h-1.6zM705.9,142.3h1.2v1.2h-1.2zM699.7,143.4h2.4v2.4h-2.4zM684.3,122h1.7v1.7h-1.7zM688.4,154.1h1.3v1.3h-1.3zM682.3,137.5h1.3v1.3h-1.3zM699.6,155.3h1.7v1.7h-1.7zM683.3,150.2h1.5v1.5h-1.5zM717.5,159.7h1.4v1.4h-1.4zM689.6,154.1h2.1v2.1h-2.1zM695.7,126.7h1.4v1.4h-1.4zM701.2,149.7h2.1v2.1h-2.1zM688.1,157.0h1.3v1.3h-1.3zM684.6,135.4h1.9v1.9h-1.9zM693.4,149.2h2.5v2.5h-2.5zM722.5,159.9h1.6v1.6h-1.6zM684.6,136.7h1.3v1.3h-1.3zM689.0,162.8h2.2v2.2h-2.2zM702.4,148.3h1.6v1.6h-1.6zM701.4,143.0h2.5v2.5h-2.5zM698.9,125.1h1.6v1.6h-1.6zM717.5,153.8h1.8v1.8h-1.8zM691.6,140.4h1.3v1.3h-1.3zM692.9,162.2h1.8v1.8h-1.8zM683.7,154.5h1.5v1.5h-1.5zM688.1,152.2h2.3v2.3h-2.3zM707.4,146.5h1.4v1.4h-1.4zM716.8,158.3h1.2v1.2h-1.2zM691.2,153.4h2.0v2.0h-2.0zM677.3,132.1h1.9v1.9h-1.9zM714.8,150.3h1.8v1.8h-1.8zM711.6,146.8h1.4v1.4h-1.4zM695.8,158.7h2.5v2.5h-2.5zM719.1,148.5h2.5v2.5h-2.5zM700.7,142.3h1.9v1.9h-1.9zM704.7,129.9h2.4v2.4h-2.4zM698.2,139.2h1.3v1.3h-1.3zM697.7,125.3h2.1v2.1h-2.1zM694.6,143.6h1.8v1.8h-1.8zM701.1,146.3h1.6v1.6h-1.6zM680.6,135.8h2.1v2.1h-2.1zM717.9,152.5h2.5v2.5h-2.5zM703.4,150.1h1.8v1.8h-1.8zM689.3,153.1h1.6v1.6h-1.6zM687.4,142.8h2.3v2.3h-2.3zM712.9,156.7h1.7v1.7h-1.7zM704.3,155.6h1.9v1.9h-1.9zM691.2,162.7h2.1v2.1h-2.1zM712.5,138.8h2.4v2.4h-2.4zM704.8,145.4h1.7v1.7h-1.7zM698.4,166.8h2.5v2.5h-2.5zM690.6,137.3h1.8v1.8h-1.8zM699.9,127.7h1.8v1.8h-1.8zM693.0,150.2h1.8v1.8h-1.8zM685.3,131.2h1.2v1.2h-1.2zM715.8,165.9h1.6v1.6h-1.6zM711.5,145.3h1.9v1.9h-1.9zM695.5,152.2h1.5v1.5h-1.5zM688.0,139.7h1.9v1.9h-1.9zM704.1,154.2h2.1v2.1h-2.1zM685.3,145.4h1.6v1.6h-1.6zM703.0,163.7h1.9v1.9h-1.9zM698.3,173.3h1.3v1.3h-1.3zM690.3,152.8h1.3v1.3h-1.3zM713.9,149.1h2.5v2.5h-2.5zM714.1,156.3h1.4v1.4h-1.4zM677.5,124.4h1.5v1.5h-1.5zM682.7,150.5h1.2v1.2h-1.2zM701.1,136.7h2.0v2.0h-2.0zM699.8,150.2h1.3v1.3h-1.3zM708.3,170.9h1.2v1.2h-1.2zM715.0,174.9h1.3v1.3h-1.3zM714.2,182h1.8v1.8h-1.8zM712.9,170.7h1.3v1.3h-1.3zM721.3,163.7h2.1v2.1h-2.1zM713.5,160.1h1.5v1.5h-1.5zM707.6,167.7h1.8v1.8h-1.8zM706.3,167.0h2.2v2.2h-2.2zM712.7,178.2h2.4v2.4h-2.4zM713.6,166.3h1.4v1.4h-1.4zM698,169.2h1.9v1.9h-1.9zM716.9,161.5h1.7v1.7h-1.7zM714.1,168.7h2.1v2.1h-2.1zM675.4,147.8h1.9v1.9h-1.9zM674.6,150.8h1.7v1.7h-1.7zM667.1,147.3h2.0v2.0h-2.0zM677.6,155.4h2.1v2.1h-2.1zM672.3,150.2h1.9v1.9h-1.9zM665.3,148.1h2.4v2.4h-2.4zM682.1,155.8h1.3v1.3h-1.3zM674.7,143.9h2.3v2.3h-2.3zM676.9,152.8h2.2v2.2h-2.2zM674.7,149.5h1.3v1.3h-1.3zM661.2,143.9h1.8v1.8h-1.8zM672.7,150.3h1.2v1.2h-1.2zM680.0,148.4h2.6v2.6h-2.6zM660,150.3h1.6v1.6h-1.6zM671.6,150.4h2.5v2.5h-2.5zM667.2,139.8h1.7v1.7h-1.7zM669.8,148.4h2.3v2.3h-2.3zM652.2,171.7h2.0v2.0h-2.0zM646.9,178.4h1.9v1.9h-1.9zM650.0,162.7h2.1v2.1h-2.1zM651.5,168.2h1.7v1.7h-1.7zM649.0,171.6h2.2v2.2h-2.2zM647.4,165.9h1.7v1.7h-1.7zM652.3,172.9h1.1v1.1h-1.1zM653.9,175.2h1.8v1.8h-1.8zM654.7,175.9h1.5v1.5h-1.5zM650.2,173.0h1.0v1.0h-1.0zM661.6,183.5h1.7v1.7h-1.7zM663.5,180.7h1.4v1.4h-1.4zM660.3,185.1h2.0v2.0h-2.0zM665.5,183.1h2.0v2.0h-2.0zM659.9,185.0h1.9v1.9h-1.9zM668.9,179.4h1.9v1.9h-1.9zM659.5,183.7h1.1v1.1h-1.1zM654.3,189.2h1.6v1.6h-1.6zM661.2,183.2h1.4v1.4h-1.4zM664.8,182.1h2.1v2.1h-2.1zM661.0,185.6h1.8v1.8h-1.8zM659.2,184.5h1.2v1.2h-1.2zM657.4,184.4h1.6v1.6h-1.6zM660.3,184.4h1.1v1.1h-1.1zM773.4,179.7h1.2v1.2h-1.2zM773.8,176.5h1.5v1.5h-1.5zM778.6,174.5h1.7v1.7h-1.7zM777.6,178.3h2.1v2.1h-2.1zM783.7,174.9h1.6v1.6h-1.6zM777.3,171.2h1.7v1.7h-1.7zM772.5,176.0h1.2v1.2h-1.2zM765.6,181h1.8v1.8h-1.8zM775.7,175.7h1.0v1.0h-1.0zM780.7,174.9h1.1v1.1h-1.1zM769.6,175.7h1.0v1.0h-1.0zM778.5,177.3h1.3v1.3h-1.3zM775.7,177.0h2.1v2.1h-2.1zM772.6,178.0h1.5v1.5h-1.5zM777.0,178.2h1.9v1.9h-1.9zM769.0,177.2h1.3v1.3h-1.3zM779.9,178.5h1.2v1.2h-1.2zM778.8,176.7h1.5v1.5h-1.5zM780.4,175.7h1.7v1.7h-1.7zM770.4,179.9h1.4v1.4h-1.4zM784.6,191.3h1.2v1.2h-1.2zM779.1,198.7h1.4v1.4h-1.4zM773.5,193.2h1.2v1.2h-1.2zM783.8,187.0h1.7v1.7h-1.7zM783.7,194.9h1.8v1.8h-1.8zM776.7,188.3h1.8v1.8h-1.8zM786.4,192.6h1.4v1.4h-1.4zM780.7,195.2h1.0v1.0h-1.0zM778.2,188.5h1.9v1.9h-1.9zM777.6,180h1.7v1.7h-1.7zM782.2,198.6h1.7v1.7h-1.7zM782.9,186.9h2.0v2.0h-2.0zM781.3,189.4h1.6v1.6h-1.6zM777.2,190.6h1.2v1.2h-1.2zM781.9,196.5h1.4v1.4h-1.4zM773.1,192.9h1.6v1.6h-1.6zM774.9,190.4h1.0v1.0h-1.0zM773.3,195.7h1.7v1.7h-1.7zM783.0,190.6h2.2v2.2h-2.2zM774.7,187.3h1.2v1.2h-1.2zM787.7,195.8h1.3v1.3h-1.3zM791.2,198.0h2.2v2.2h-2.2zM783.0,204.0h1.9v1.9h-1.9zM791.4,201.0h1.9v1.9h-1.9zM780.2,200.3h1.8v1.8h-1.8zM785.3,199.6h1.5v1.5h-1.5zM788.3,200.2h1.6v1.6h-1.6zM785.6,201.5h1.4v1.4h-1.4zM781.1,202.4h2.0v2.0h-2.0zM784.3,195.4h1.2v1.2h-1.2zM787.1,203.7h1.9v1.9h-1.9zM789.0,206.1h1.5v1.5h-1.5zM782.9,202.8h2.1v2.1h-2.1zM797.6,178.2h2.2v2.2h-2.2zM802.3,179.6h1.4v1.4h-1.4zM797.5,182.7h2.1v2.1h-2.1zM797.4,183.4h2.1v2.1h-2.1zM795.0,183.6h2.0v2.0h-2.0zM802.2,180.2h2.2v2.2h-2.2zM802.2,180.9h1.8v1.8h-1.8zM809.3,174.9h1.0v1.0h-1.0zM801.9,183.6h1.0v1.0h-1.0zM796.7,179.9h1.5v1.5h-1.5zM799.8,179.2h2.1v2.1h-2.1zM801.6,179.1h1.6v1.6h-1.6zM804.4,183.5h1.6v1.6h-1.6zM791.5,179.0h2.1v2.1h-2.1zM798.2,181.5h2.2v2.2h-2.2zM798.6,186h1.2v1.2h-1.2zM795.2,181.9h1.4v1.4h-1.4zM813.3,181.5h1.8v1.8h-1.8zM812.9,181.6h1.4v1.4h-1.4zM823.3,223.1h1.3v1.3h-1.3zM823.5,220.0h1.9v1.9h-1.9zM822.4,221.9h2.0v2.0h-2.0zM821.7,222.5h1.6v1.6h-1.6zM822.4,220.3h1.5v1.5h-1.5zM823.0,218.7h1.8v1.8h-1.8zM821.0,220.2h1.7v1.7h-1.7zM822.6,219.7h1.2v1.2h-1.2zM823.9,219.1h1.3v1.3h-1.3zM825.4,224.1h1.3v1.3h-1.3zM822.7,218.2h1.5v1.5h-1.5zM633.7,210.9h1.6v1.6h-1.6zM633.7,208.0h1.9v1.9h-1.9zM629.7,199.3h1.5v1.5h-1.5zM633.2,203.4h1.3v1.3h-1.3zM633.5,205.7h1.6v1.6h-1.6zM633.8,203.4h1.5v1.5h-1.5zM634.1,203.7h1.4v1.4h-1.4zM637.1,211.4h1.6v1.6h-1.6zM635.7,201.9h1.9v1.9h-1.9zM634.0,213.7h1.2v1.2h-1.2zM635.7,206.3h1.5v1.5h-1.5zM632.8,211.6h1.2v1.2h-1.2zM636.8,207.2h1.8v1.8h-1.8zM639.8,215.6h1.7v1.7h-1.7zM632.7,199.8h1.2v1.2h-1.2zM631.4,206.3h1.2v1.2h-1.2zM631.5,200.9h1.5v1.5h-1.5zM635.3,215.4h1.2v1.2h-1.2zM639.3,211.2h1.1v1.1h-1.1zM639.3,222.0h1.9v1.9h-1.9zM640.8,221.8h1.7v1.7h-1.7zM635.2,225.6h1.8v1.8h-1.8zM642.9,220.5h1.2v1.2h-1.2zM638.2,221.8h1.6v1.6h-1.6zM639.0,221.8h1.3v1.3h-1.3zM639.0,224.2h2.2v2.2h-2.2zM639.3,219.8h1.3v1.3h-1.3zM635.0,220.8h1.3v1.3h-1.3zM638.8,221.4h1.7v1.7h-1.7zM640.7,219.9h2.0v2.0h-2.0zM642.9,222.7h1.1v1.1h-1.1zM645.2,223.5h1.7v1.7h-1.7zM639.1,221.1h1.4v1.4h-1.4zM644.3,222.5h1.4v1.4h-1.4zM601.4,199.7h1.9v1.9h-1.9zM596.0,198.4h1.8v1.8h-1.8zM600.3,204.0h2.0v2.0h-2.0zM590.4,199.1h2.1v2.1h-2.1zM599.1,202.1h1.0v1.0h-1.0zM630.3,194.9h1.3v1.3h-1.3zM633.6,193.6h2.0v2.0h-2.0zM631.5,194.8h1.2v1.2h-1.2zM632.9,195.1h2.1v2.1h-2.1zM639.9,191.2h1.5v1.5h-1.5zM629.2,193.2h1.9v1.9h-1.9zM628.5,194.1h1.0v1.0h-1.0zM630.3,193.5h1.9v1.9h-1.9zM636.9,195.4h1.7v1.7h-1.7zM632.1,193.3h1.9v1.9h-1.9zM725.3,380.0h2.4v2.4h-2.4zM734.0,383.0h2.7v2.7h-2.7zM755.4,380.2h2.7v2.7h-2.7zM744.4,391.8h2.3v2.3h-2.3zM738.8,370.3h2.6v2.6h-2.6zM754.2,403.6h2.9v2.9h-2.9zM755.0,389.5h1.9v1.9h-1.9zM731.2,373.0h2.1v2.1h-2.1zM741.9,371.6h2.3v2.3h-2.3zM741.4,370.6h3.0v3.0h-3.0zM741.0,385.3h2.0v2.0h-2.0zM730.5,376.5h3.0v3.0h-3.0zM730.3,367.9h2.9v2.9h-2.9zM769.0,388.6h2.5v2.5h-2.5zM743.9,387.9h2.9v2.9h-2.9zM727.1,369.3h3.0v3.0h-3.0zM772.8,410.3h2.6v2.6h-2.6zM762.8,377.8h2.8v2.8h-2.8zM768.5,399.2h2.8v2.8h-2.8zM757.0,395.2h1.7v1.7h-1.7zM758.3,381.5h2.9v2.9h-2.9zM744.0,389.9h1.6v1.6h-1.6zM754.5,393.0h2.2v2.2h-2.2zM746.1,400.4h3.0v3.0h-3.0zM752.2,373.5h3.0v3.0h-3.0zM751.2,400.0h2.2v2.2h-2.2zM764.9,379.4h2.6v2.6h-2.6zM734.2,369.7h3.1v3.1h-3.1zM736.2,362.5h2.3v2.3h-2.3zM750.6,380.7h3.2v3.2h-3.2zM739.6,370.1h2.2v2.2h-2.2zM759.0,383.4h1.8v1.8h-1.8zM745.3,376.8h2.4v2.4h-2.4zM751.4,394.3h3.0v3.0h-3.0zM748.6,401.0h3.2v3.2h-3.2zM764.5,396.6h1.9v1.9h-1.9zM772.6,401.2h2.7v2.7h-2.7zM747.4,376.6h3.1v3.1h-3.1zM740.4,385.5h2.3v2.3h-2.3zM734.9,373.5h1.7v1.7h-1.7zM763.1,396.2h2.8v2.8h-2.8zM746.2,373.8h2.8v2.8h-2.8zM751.7,373.8h1.8v1.8h-1.8zM752.5,379.0h2.0v2.0h-2.0zM754.4,398.5h1.7v1.7h-1.7zM748.8,374.5h2.8v2.8h-2.8zM757.3,389.5h2.2v2.2h-2.2zM724.0,376.7h1.6v1.6h-1.6zM747.4,401.5h2.5v2.5h-2.5zM746.1,389.2h1.8v1.8h-1.8zM727.8,372.7h2.5v2.5h-2.5zM753.6,396.1h2.0v2.0h-2.0zM759.4,393.5h2.5v2.5h-2.5zM746.4,400.9h3.0v3.0h-3.0zM737.8,385.2h2.8v2.8h-2.8zM751.2,395.3h2.9v2.9h-2.9zM766.2,395.6h2.7v2.7h-2.7zM740.1,371.7h2.4v2.4h-2.4zM759.6,370.3h2.2v2.2h-2.2zM726.4,362.7h2.3v2.3h-2.3zM757.3,385.6h2.1v2.1h-2.1zM760.4,394.6h2.7v2.7h-2.7zM744.7,373.0h2.9v2.9h-2.9zM753.1,392.6h2.3v2.3h-2.3zM734.3,356.3h2.0v2.0h-2.0zM734.6,358.4h1.8v1.8h-1.8zM740.7,370.5h2.3v2.3h-2.3zM753.2,390.8h2.1v2.1h-2.1zM754.4,381.7h2.5v2.5h-2.5zM759.1,409.0h1.9v1.9h-1.9zM764.4,393.8h1.9v1.9h-1.9zM745.4,369.2h3.1v3.1h-3.1zM728.4,362.6h2.7v2.7h-2.7zM737.8,367.3h1.8v1.8h-1.8zM751.3,380.9h2.0v2.0h-2.0zM726.9,381.8h2.7v2.7h-2.7zM772.3,391.3h2.5v2.5h-2.5zM753.9,392.1h2.7v2.7h-2.7zM746.4,390.2h3.0v3.0h-3.0zM752.1,390.5h3.1v3.1h-3.1zM750.5,389.5h1.9v1.9h-1.9zM726.0,371.4h2.0v2.0h-2.0zM751.6,382.7h2.5v2.5h-2.5zM757.9,381.5h2.3v2.3h-2.3zM748.3,391.9h2.5v2.5h-2.5zM730.5,370.2h2.8v2.8h-2.8zM743.9,391.1h2.7v2.7h-2.7zM740.9,374.4h3.1v3.1h-3.1zM729.9,356.5h1.8v1.8h-1.8zM745.3,376.2h2.3v2.3h-2.3zM741.4,378.2h2.2v2.2h-2.2zM754.4,369.1h1.7v1.7h-1.7zM755.6,378.6h2.1v2.1h-2.1zM761.7,391.6h2.5v2.5h-2.5zM743.1,370.7h2.3v2.3h-2.3zM755.2,410.2h2.1v2.1h-2.1zM759.0,401.4h2.9v2.9h-2.9zM749.6,366.8h1.7v1.7h-1.7zM763.7,389.9h1.6v1.6h-1.6zM758.6,393.9h3.0v3.0h-3.0zM759.9,374.5h2.5v2.5h-2.5zM763.0,384.3h1.7v1.7h-1.7zM753.4,370.0h1.7v1.7h-1.7zM733.1,368.2h2.8v2.8h-2.8zM752.3,376.0h1.7v1.7h-1.7zM754.2,382.2h1.7v1.7h-1.7zM755.0,399.9h1.6v1.6h-1.6zM743.3,391.7h2.2v2.2h-2.2zM725.9,365.5h2.3v2.3h-2.3zM755.8,409.7h2.6v2.6h-2.6zM744.1,391.2h2.1v2.1h-2.1zM727.4,359.2h1.6v1.6h-1.6zM742.5,368.5h2.9v2.9h-2.9zM766.7,389.6h2.7v2.7h-2.7zM742.6,374.3h2.6v2.6h-2.6zM728.8,368.9h2.0v2.0h-2.0zM742.9,387.9h2.6v2.6h-2.6zM727.8,378.0h2.8v2.8h-2.8zM740.2,371.7h2.9v2.9h-2.9zM761.2,395.7h1.7v1.7h-1.7zM725.5,368.3h3.2v3.2h-3.2zM731.7,382.7h2.3v2.3h-2.3zM744.7,392.0h2.4v2.4h-2.4zM738.7,374.1h2.5v2.5h-2.5zM728.4,378.8h2.9v2.9h-2.9zM723.0,358.3h2.5v2.5h-2.5zM765.1,400.1h1.9v1.9h-1.9zM753.0,382.6h2.5v2.5h-2.5zM741.9,384.2h3.0v3.0h-3.0zM740.2,356.6h2.3v2.3h-2.3zM760.6,411.4h2.6v2.6h-2.6zM739.1,385.8h2.9v2.9h-2.9zM759.9,394.2h1.7v1.7h-1.7zM761.5,411.2h1.8v1.8h-1.8zM741.9,391.8h1.8v1.8h-1.8zM763.6,398.1h3.1v3.1h-3.1zM751.9,381.1h2.9v2.9h-2.9zM760.8,371.7h2.2v2.2h-2.2zM742.8,360.9h1.9v1.9h-1.9zM751.3,391.0h1.6v1.6h-1.6zM733.8,371.9h2.0v2.0h-2.0zM734.6,365.3h2.7v2.7h-2.7zM765.2,382.0h2.4v2.4h-2.4zM758.6,386.4h2.7v2.7h-2.7zM743.7,370.3h2.2v2.2h-2.2zM755.0,392.9h2.7v2.7h-2.7zM737.5,371.6h3.1v3.1h-3.1zM751.2,381.6h2.0v2.0h-2.0zM742.1,367.1h3.0v3.0h-3.0zM754.1,399.8h2.2v2.2h-2.2zM728.4,360.0h1.9v1.9h-1.9zM759.1,398.3h2.5v2.5h-2.5zM722.6,374.7h3.0v3.0h-3.0zM741.8,377.2h3.0v3.0h-3.0zM740.9,394.6h3.0v3.0h-3.0zM752.1,376.2h3.1v3.1h-3.1zM765.5,401.1h2.8v2.8h-2.8zM756.3,385.3h1.9v1.9h-1.9zM725.2,359.3h2.0v2.0h-2.0zM732.1,366.0h1.9v1.9h-1.9zM748.9,372.7h3.1v3.1h-3.1zM745.5,389.9h2.1v2.1h-2.1zM752.3,371.0h2.3v2.3h-2.3zM741.3,372.4h2.4v2.4h-2.4zM749.2,365.1h1.6v1.6h-1.6zM740.9,373.3h2.5v2.5h-2.5zM756.6,389.4h1.9v1.9h-1.9zM748.1,371.6h3.2v3.2h-3.2zM761.1,412.3h3.2v3.2h-3.2zM735.7,367.1h3.0v3.0h-3.0zM763.3,403.0h2.6v2.6h-2.6zM742.9,385.8h1.9v1.9h-1.9zM725.8,361.5h2.8v2.8h-2.8zM737.2,375.4h2.8v2.8h-2.8zM740.8,366.8h2.4v2.4h-2.4zM755.8,393.4h1.7v1.7h-1.7zM744.6,390.7h2.8v2.8h-2.8zM742.1,381.8h2.8v2.8h-2.8zM753.3,388.2h2.4v2.4h-2.4zM739.9,365.0h3.2v3.2h-3.2zM766.8,384.9h2.1v2.1h-2.1zM741.5,381.8h2.8v2.8h-2.8zM755.0,393.4h2.2v2.2h-2.2zM737.6,380.9h2.7v2.7h-2.7zM756.8,399.1h3.0v3.0h-3.0zM727.6,366.3h1.6v1.6h-1.6zM761.2,407.6h2.9v2.9h-2.9zM754.7,382.6h2.0v2.0h-2.0zM727.9,377.0h2.2v2.2h-2.2zM747.0,396.3h1.9v1.9h-1.9zM756.2,407.5h3.0v3.0h-3.0zM749.7,396.3h2.5v2.5h-2.5zM741.9,361.8h1.8v1.8h-1.8zM735.6,363.5h2.1v2.1h-2.1zM759.9,384.2h2.8v2.8h-2.8zM725.7,374.7h2.8v2.8h-2.8zM754.6,382.8h2.1v2.1h-2.1zM754.9,369.6h1.9v1.9h-1.9zM736.7,378.3h2.4v2.4h-2.4zM741.4,384.1h1.8v1.8h-1.8zM751.0,374.8h1.7v1.7h-1.7zM733.7,371.4h2.6v2.6h-2.6zM758.9,397.0h1.9v1.9h-1.9zM750.0,379.6h2.1v2.1h-2.1zM749.1,367.3h1.9v1.9h-1.9zM738.4,362.8h2.0v2.0h-2.0zM740.6,402.2h3.1v3.1h-3.1zM725.5,360.0h3.0v3.0h-3.0zM755.4,396.7h2.6v2.6h-2.6zM747.2,369.3h2.6v2.6h-2.6zM767.6,406.1h2.8v2.8h-2.8zM725.1,382.4h2.7v2.7h-2.7zM750.0,403.5h1.8v1.8h-1.8zM734.1,377.8h1.9v1.9h-1.9zM747.3,369.7h2.2v2.2h-2.2zM748.4,369.5h2.4v2.4h-2.4zM741.8,373.7h1.7v1.7h-1.7zM751.3,377.1h3.0v3.0h-3.0zM761.2,404.1h2.0v2.0h-2.0zM764.9,386.3h2.5v2.5h-2.5zM757.0,404.7h1.8v1.8h-1.8zM752.0,368.6h2.1v2.1h-2.1zM723.5,362.5h2.0v2.0h-2.0zM764.6,383.5h2.0v2.0h-2.0zM766.2,400.8h2.4v2.4h-2.4zM736.3,391.9h2.2v2.2h-2.2zM747.7,404.6h2.3v2.3h-2.3zM732.2,367.1h2.9v2.9h-2.9zM746.5,373.3h2.5v2.5h-2.5zM768.6,382.9h2.1v2.1h-2.1zM735.5,361.9h2.6v2.6h-2.6zM749.0,377.1h2.7v2.7h-2.7zM765.8,387.1h2.3v2.3h-2.3zM737.1,399.2h2.2v2.2h-2.2zM755.1,407.1h2.9v2.9h-2.9zM741.5,376.6h3.2v3.2h-3.2zM719.4,358.2h2.6v2.6h-2.6zM743.5,364.2h3.1v3.1h-3.1zM745.9,370.3h2.4v2.4h-2.4zM754.1,391.1h2.1v2.1h-2.1zM744.1,385.4h2.0v2.0h-2.0zM754.8,376.9h2.4v2.4h-2.4zM771.9,399.7h1.9v1.9h-1.9zM738.1,365.7h2.5v2.5h-2.5zM761.2,392.0h1.6v1.6h-1.6zM769.8,385.0h2.3v2.3h-2.3zM758.1,399.4h2.1v2.1h-2.1zM754.6,396.0h2.9v2.9h-2.9zM763.3,407.5h2.2v2.2h-2.2zM741.7,362.3h2.8v2.8h-2.8zM732.9,375.4h2.0v2.0h-2.0zM757.0,399.9h3.0v3.0h-3.0zM747.9,398.6h2.3v2.3h-2.3zM761.4,393.1h2.8v2.8h-2.8zM753.4,388.0h2.1v2.1h-2.1zM757.3,383.3h2.9v2.9h-2.9zM753.1,391.6h2.0v2.0h-2.0zM761.0,383.9h2.6v2.6h-2.6zM750.8,408.4h2.3v2.3h-2.3zM751.3,398.5h2.5v2.5h-2.5zM758.1,410.6h2.4v2.4h-2.4zM757.1,392.0h2.9v2.9h-2.9zM745.5,399.9h2.1v2.1h-2.1zM733.6,374.4h2.2v2.2h-2.2zM750.9,389.4h2.7v2.7h-2.7zM736.3,371.3h2.2v2.2h-2.2zM765.2,388.3h1.9v1.9h-1.9zM763.4,392.7h2.4v2.4h-2.4zM757.3,394.0h1.7v1.7h-1.7zM753.3,399.7h1.9v1.9h-1.9zM753.8,386.8h3.0v3.0h-3.0zM735.3,371.1h1.9v1.9h-1.9zM741.0,380.2h2.1v2.1h-2.1zM741.6,382.5h2.6v2.6h-2.6zM736.4,391.7h3.0v3.0h-3.0zM744.3,389.2h2.7v2.7h-2.7zM723.7,361.9h2.6v2.6h-2.6zM760.4,395.8h3.0v3.0h-3.0zM763.6,410.2h2.3v2.3h-2.3zM762.9,386.8h2.5v2.5h-2.5zM765.0,400.8h2.3v2.3h-2.3zM733.0,365.2h1.8v1.8h-1.8zM765.3,414.9h2.7v2.7h-2.7zM733.0,378.3h1.8v1.8h-1.8zM719.1,365.3h2.9v2.9h-2.9zM754.4,395.9h2.7v2.7h-2.7zM723.9,380.5h1.7v1.7h-1.7zM761.2,405.2h2.9v2.9h-2.9zM767.9,406.6h2.6v2.6h-2.6zM769.5,404.6h3.1v3.1h-3.1zM719.5,359.1h3.1v3.1h-3.1zM737.1,387.2h3.1v3.1h-3.1zM772.7,396.1h2.3v2.3h-2.3zM724.3,356.2h1.8v1.8h-1.8zM754.8,383.2h1.6v1.6h-1.6zM723.3,361.2h2.6v2.6h-2.6zM751.3,410.3h3.0v3.0h-3.0zM755.7,387.2h2.1v2.1h-2.1zM760.2,382.8h2.3v2.3h-2.3zM721.5,374.8h1.9v1.9h-1.9zM722.1,372.8h3.0v3.0h-3.0zM739.0,384.2h2.8v2.8h-2.8zM732.4,383.6h1.7v1.7h-1.7zM730.1,367.3h3.0v3.0h-3.0zM735.3,368.6h2.0v2.0h-2.0zM729.5,378.1h2.5v2.5h-2.5zM762.2,395.1h3.1v3.1h-3.1zM746.2,391.9h2.4v2.4h-2.4zM773.6,396.2h2.3v2.3h-2.3zM734.1,369.4h1.9v1.9h-1.9zM747.0,366.9h2.6v2.6h-2.6zM758.1,401.2h2.4v2.4h-2.4zM758.0,408.1h1.9v1.9h-1.9zM756.5,394.0h2.3v2.3h-2.3zM737.1,383.4h2.0v2.0h-2.0zM746.1,376.7h2.1v2.1h-2.1zM761.8,379.1h2.1v2.1h-2.1zM759.7,413.8h2.5v2.5h-2.5zM734.7,367.5h2.6v2.6h-2.6zM753.0,380.5h2.4v2.4h-2.4zM749.4,374.6h2.7v2.7h-2.7zM744.7,368.1h2.8v2.8h-2.8zM736.1,385.6h1.9v1.9h-1.9zM727.0,376.6h2.5v2.5h-2.5zM735.9,386.0h3.1v3.1h-3.1zM744.9,387.4h2.2v2.2h-2.2zM736.1,369.1h2.4v2.4h-2.4zM757.0,390.1h2.0v2.0h-2.0zM742.5,388.2h2.0v2.0h-2.0zM732.4,378.1h2.7v2.7h-2.7zM743.5,399.8h1.7v1.7h-1.7zM732.7,378.4h2.4v2.4h-2.4zM765.3,400.5h2.4v2.4h-2.4zM759.1,400.6h2.4v2.4h-2.4zM754.1,411.2h2.8v2.8h-2.8zM744.7,376.1h3.1v3.1h-3.1zM749.0,371.8h2.8v2.8h-2.8zM754.6,384.4h1.9v1.9h-1.9zM766.1,390.4h2.3v2.3h-2.3zM752.3,388.2h2.7v2.7h-2.7zM761.4,394.2h2.6v2.6h-2.6zM757.6,391.2h1.7v1.7h-1.7zM738.3,374.3h3.0v3.0h-3.0zM726.5,365.7h2.4v2.4h-2.4zM731.8,363.8h3.0v3.0h-3.0zM739.7,378.2h2.8v2.8h-2.8zM748.6,398.9h2.9v2.9h-2.9zM734.0,365.1h3.2v3.2h-3.2zM747.9,389.0h2.0v2.0h-2.0zM722.3,354.3h2.7v2.7h-2.7zM753.5,379.0h2.8v2.8h-2.8zM753.2,389.9h1.9v1.9h-1.9zM757.9,379.7h2.5v2.5h-2.5zM733.0,374.8h2.2v2.2h-2.2zM729.5,366.8h2.2v2.2h-2.2zM766.4,391.9h3.1v3.1h-3.1zM747.4,369.2h3.0v3.0h-3.0zM753.8,403.1h2.3v2.3h-2.3zM758.6,393.9h2.6v2.6h-2.6zM741.6,374.2h3.2v3.2h-3.2zM737.1,389.8h2.0v2.0h-2.0zM731.6,385.2h1.9v1.9h-1.9zM754.1,391.0h2.2v2.2h-2.2zM731.7,359.9h2.2v2.2h-2.2zM738.3,381.6h2.1v2.1h-2.1zM761.3,380.0h2.7v2.7h-2.7zM753.4,362.4h2.6v2.6h-2.6zM758.7,379.8h2.7v2.7h-2.7zM739.6,385.0h1.7v1.7h-1.7zM740.1,373.6h3.0v3.0h-3.0zM762.0,392.0h1.7v1.7h-1.7zM756.2,396.2h1.8v1.8h-1.8zM751.8,381.7h2.1v2.1h-2.1zM740.5,374.3h3.0v3.0h-3.0zM763.7,390.4h2.6v2.6h-2.6zM767.7,380.6h2.1v2.1h-2.1zM775.0,412.4h1.5v1.5h-1.5zM760.1,403.9h2.5v2.5h-2.5zM762.7,406.3h2.7v2.7h-2.7zM764.9,402.1h2.2v2.2h-2.2zM767.3,407.7h2.1v2.1h-2.1zM767.1,408.8h2.0v2.0h-2.0zM767.2,395.8h1.7v1.7h-1.7zM768.2,412.8h1.8v1.8h-1.8zM768.8,415.1h2.1v2.1h-2.1zM768.1,399.5h2.1v2.1h-2.1zM768.6,415.8h2.5v2.5h-2.5zM775.1,418.2h2.2v2.2h-2.2zM763.6,413.5h1.8v1.8h-1.8zM761.4,407.3h1.8v1.8h-1.8zM768.4,404.8h2.5v2.5h-2.5zM768.0,409.0h1.8v1.8h-1.8zM772.8,410.1h1.9v1.9h-1.9zM762.1,406.1h1.7v1.7h-1.7zM768.5,398.8h1.6v1.6h-1.6zM770.8,402.9h2.1v2.1h-2.1zM768.9,416.8h1.7v1.7h-1.7zM765.0,408.9h2.2v2.2h-2.2zM770.3,412.2h2.8v2.8h-2.8zM760.9,400.9h2.3v2.3h-2.3zM766.6,412.8h2.1v2.1h-2.1zM771.4,407.9h2.3v2.3h-2.3zM766.4,403.3h1.9v1.9h-1.9zM769.4,415.0h2.5v2.5h-2.5zM735.9,359.5h2.6v2.6h-2.6zM741.1,359.8h2.4v2.4h-2.4zM733.1,362.4h2.6v2.6h-2.6zM744,365.1h2.7v2.7h-2.7zM738.3,357.6h2.5v2.5h-2.5zM738.1,359.1h1.7v1.7h-1.7zM737.5,361.7h2.5v2.5h-2.5zM741.8,368h1.9v1.9h-1.9zM737.0,364.2h1.4v1.4h-1.4zM735.7,361.4h1.5v1.5h-1.5zM739.4,359.1h2.7v2.7h-2.7zM731.6,358.0h1.6v1.6h-1.6zM738.8,362.1h1.9v1.9h-1.9zM737.9,363.6h1.9v1.9h-1.9zM733.6,362.5h2.5v2.5h-2.5zM739.1,364.2h2.2v2.2h-2.2zM738.3,362.1h2.2v2.2h-2.2zM732.5,359.3h1.9v1.9h-1.9zM735.6,363.8h2.0v2.0h-2.0zM734.8,360.3h1.9v1.9h-1.9zM736.0,360.1h2.1v2.1h-2.1zM742.6,433.0h1.9v1.9h-1.9zM745.7,429.7h1.5v1.5h-1.5zM742.4,431.1h2.1v2.1h-2.1zM741.4,433.0h2.6v2.6h-2.6zM743.2,431.2h2.2v2.2h-2.2zM746.9,433.1h2.0v2.0h-2.0zM731.9,431.6h2.0v2.0h-2.0zM739.5,432.5h2.3v2.3h-2.3zM738.5,430.0h2.4v2.4h-2.4zM733.5,429.3h1.8v1.8h-1.8zM739.9,430.8h2.5v2.5h-2.5zM743.3,433.8h1.7v1.7h-1.7zM746.8,432.3h2.4v2.4h-2.4zM732.7,430.9h2.0v2.0h-2.0zM736.0,430.8h2.4v2.4h-2.4zM752.2,431.9h1.5v1.5h-1.5zM745.2,433.8h2.6v2.6h-2.6zM743.7,433.3h1.8v1.8h-1.8zM742.8,431.3h1.7v1.7h-1.7zM737.0,431.0h2.3v2.3h-2.3zM745.2,433.2h1.5v1.5h-1.5zM740.7,431.6h1.8v1.8h-1.8zM747.3,434.6h2.3v2.3h-2.3zM768.4,444.7h2.7v2.7h-2.7zM774.5,449.8h2.6v2.6h-2.6zM774.0,448.7h1.6v1.6h-1.6zM771.1,449.8h1.6v1.6h-1.6zM767.7,443.0h1.4v1.4h-1.4zM768.3,448.0h2.4v2.4h-2.4zM770.5,446.3h1.7v1.7h-1.7zM777.3,450.5h1.4v1.4h-1.4zM776.4,451.8h2.6v2.6h-2.6zM774.0,449.8h2.7v2.7h-2.7zM767.8,451.2h2.0v2.0h-2.0zM773.9,448.4h2.2v2.2h-2.2zM780.4,450.6h1.7v1.7h-1.7zM777.3,450.5h1.5v1.5h-1.5zM776.4,446.0h2.4v2.4h-2.4zM768.0,445.3h2.3v2.3h-2.3zM768.3,446.0h2.0v2.0h-2.0zM774.8,450.8h2.8v2.8h-2.8zM781.8,454.9h2.0v2.0h-2.0zM769.3,445.9h2.4v2.4h-2.4zM771.1,446.1h2.6v2.6h-2.6zM769.7,446.9h1.6v1.6h-1.6zM767.5,449.7h2.6v2.6h-2.6zM764.0,440.8h1.5v1.5h-1.5zM773.9,450.0h1.5v1.5h-1.5zM781.9,452.6h2.8v2.8h-2.8zM770.2,445.6h1.5v1.5h-1.5zM776.0,452.2h2.7v2.7h-2.7zM772.6,444.8h1.7v1.7h-1.7zM767.6,446.7h2.3v2.3h-2.3zM772.7,448.5h2.2v2.2h-2.2zM776.6,452.6h2.4v2.4h-2.4zM776.2,454.9h1.9v1.9h-1.9zM779.3,451.7h2.2v2.2h-2.2zM773.5,448.3h2.1v2.1h-2.1zM764.6,443.8h2.2v2.2h-2.2zM768.2,447.5h2.6v2.6h-2.6zM769.8,444.3h2.0v2.0h-2.0zM769.8,443.0h2.8v2.8h-2.8zM774.9,452.0h2.4v2.4h-2.4zM766.7,446.2h1.8v1.8h-1.8zM771.9,443.4h2.7v2.7h-2.7zM772.1,447.3h2.3v2.3h-2.3zM773.6,455.0h2.7v2.7h-2.7zM768.2,446.4h2.1v2.1h-2.1zM772.4,449.9h2.3v2.3h-2.3zM770.4,452.1h2.5v2.5h-2.5zM764.9,444.0h2.4v2.4h-2.4zM774.0,444.0h2.1v2.1h-2.1zM775.8,448.6h1.9v1.9h-1.9zM780.4,454.6h1.5v1.5h-1.5zM782.7,453.6h2.6v2.6h-2.6zM772.8,448.0h1.6v1.6h-1.6zM771.0,448.7h2.6v2.6h-2.6zM771.8,451.7h2.2v2.2h-2.2zM774.2,450.1h2.7v2.7h-2.7zM766.7,445.8h1.5v1.5h-1.5zM770.3,447.4h2.2v2.2h-2.2zM768.2,442.4h2.7v2.7h-2.7zM770.6,447.2h1.9v1.9h-1.9zM719.7,432.9h2.4v2.4h-2.4zM721.4,429.5h1.8v1.8h-1.8zM720.3,430.0h1.9v1.9h-1.9zM719.1,429.9h1.4v1.4h-1.4zM720.1,429.7h1.8v1.8h-1.8zM718.1,429.6h1.8v1.8h-1.8zM720.4,428.6h2.0v2.0h-2.0zM718.4,429.7h1.5v1.5h-1.5zM717.0,429.6h2.1v2.1h-2.1zM718.7,431.2h1.6v1.6h-1.6zM720.7,429.3h1.7v1.7h-1.7zM721.2,429.8h1.5v1.5h-1.5zM717.5,432.4h1.5v1.5h-1.5zM721.4,430.3h1.9v1.9h-1.9zM831.8,386.9h2.8v2.8h-2.8zM833.2,388.4h2.3v2.3h-2.3zM827.5,385.4h1.7v1.7h-1.7zM830.8,393.8h2.4v2.4h-2.4zM833.8,381.4h2.7v2.7h-2.7zM831.4,395.5h2.4v2.4h-2.4zM833.4,377.8h2.3v2.3h-2.3zM833.1,387.7h1.5v1.5h-1.5zM832.6,405.0h1.4v1.4h-1.4zM831.5,399.6h2.1v2.1h-2.1zM827.8,403.7h2.1v2.1h-2.1zM832.4,409.9h2.7v2.7h-2.7zM832.2,399.0h1.7v1.7h-1.7zM828.1,379.0h1.8v1.8h-1.8zM828.5,385.9h2.8v2.8h-2.8zM830.1,403.8h1.8v1.8h-1.8zM832.4,400.7h2.3v2.3h-2.3zM832.8,384.9h2.2v2.2h-2.2zM831.3,396.3h2.0v2.0h-2.0zM835.6,399.9h1.7v1.7h-1.7zM832.2,382.0h2.2v2.2h-2.2zM830.8,392.6h1.8v1.8h-1.8zM836.2,395.9h2.5v2.5h-2.5zM830.9,371.7h1.9v1.9h-1.9zM832.1,392.6h1.8v1.8h-1.8zM835.2,400.2h2.2v2.2h-2.2zM834.1,378.0h2.6v2.6h-2.6zM832.2,389.4h1.5v1.5h-1.5zM834.2,383.1h1.6v1.6h-1.6zM830.8,402.1h1.4v1.4h-1.4zM833.7,401.3h1.8v1.8h-1.8zM827.8,403.9h2.6v2.6h-2.6zM838.0,389.5h2.5v2.5h-2.5zM832.6,412.3h2.4v2.4h-2.4zM827.4,381.3h1.9v1.9h-1.9zM828.2,410.5h2.3v2.3h-2.3zM834.3,392.0h1.5v1.5h-1.5zM833.6,389.9h2.4v2.4h-2.4zM833.3,398.1h2.1v2.1h-2.1zM834.1,390.5h2.7v2.7h-2.7zM831.9,386.2h2.1v2.1h-2.1zM823.6,409.0h2.3v2.3h-2.3zM836.2,399.7h2.5v2.5h-2.5zM830.0,402.5h1.7v1.7h-1.7zM827.8,399.9h2.5v2.5h-2.5zM831.4,402.4h2.2v2.2h-2.2zM828.5,394.2h2.4v2.4h-2.4zM827.6,389.8h2.4v2.4h-2.4zM833.2,382.8h1.8v1.8h-1.8zM827.7,401.6h2.7v2.7h-2.7zM833.3,384.7h2.6v2.6h-2.6zM838.4,380.4h2.5v2.5h-2.5zM830.4,396.6h2.1v2.1h-2.1zM832.1,384.6h1.4v1.4h-1.4zM830.7,401.1h1.4v1.4h-1.4zM830.6,380.8h2.3v2.3h-2.3zM833.1,385.7h2.5v2.5h-2.5zM832.0,398.1h1.5v1.5h-1.5zM830.8,409.1h1.5v1.5h-1.5zM827.6,411.6h1.6v1.6h-1.6zM834.3,398.9h1.8v1.8h-1.8zM828.0,387.0h1.9v1.9h-1.9zM834.9,395.1h1.6v1.6h-1.6zM827.7,401.1h2.5v2.5h-2.5zM832.5,386.8h2.2v2.2h-2.2zM829.3,395.9h2.0v2.0h-2.0zM831.0,402.6h1.5v1.5h-1.5zM834.0,376.5h1.9v1.9h-1.9zM836.6,385.6h2.1v2.1h-2.1zM834.2,385.9h1.6v1.6h-1.6zM833.2,387.5h2.2v2.2h-2.2zM833.3,390.1h2.5v2.5h-2.5zM827.6,398.0h2.6v2.6h-2.6zM832.6,398.7h2.8v2.8h-2.8zM835.1,389.7h2.3v2.3h-2.3zM832.6,393.6h1.6v1.6h-1.6zM833.0,397.2h2.1v2.1h-2.1zM835.0,395.5h2.4v2.4h-2.4zM831.4,389.7h2.2v2.2h-2.2zM834.1,395.4h2.6v2.6h-2.6zM835.6,378.8h1.9v1.9h-1.9zM831.2,398.5h2.2v2.2h-2.2zM827.1,410.8h1.6v1.6h-1.6zM833.3,397.1h2.7v2.7h-2.7zM835.2,388.9h2.6v2.6h-2.6zM838.9,385.7h2.3v2.3h-2.3zM831.7,392.0h2.7v2.7h-2.7zM812.6,371.6h2.1v2.1h-2.1zM808.4,378.4h1.8v1.8h-1.8zM814.0,375.0h1.8v1.8h-1.8zM813.5,378.3h1.5v1.5h-1.5zM818.7,374.4h2.0v2.0h-2.0zM820.0,377.6h1.9v1.9h-1.9zM822.5,375.5h2.0v2.0h-2.0zM823.7,376.8h1.6v1.6h-1.6zM808.5,375.1h2.2v2.2h-2.2zM820.8,370.8h1.8v1.8h-1.8zM818.8,376.5h1.7v1.7h-1.7zM809.2,376.2h1.4v1.4h-1.4zM821.9,375.1h1.7v1.7h-1.7zM814.9,372.2h2.0v2.0h-2.0zM811.6,375.9h1.6v1.6h-1.6zM825.1,377.7h2.5v2.5h-2.5zM822.7,375.0h2.4v2.4h-2.4zM810.6,373.9h2.0v2.0h-2.0zM816.0,374.8h1.5v1.5h-1.5zM820.8,375.4h1.7v1.7h-1.7zM811.0,375.3h1.6v1.6h-1.6zM851.8,370.9h1.5v1.5h-1.5zM856.4,372.0h1.8v1.8h-1.8zM853.6,374.0h2.0v2.0h-2.0zM850.1,374.0h2.4v2.4h-2.4zM852.3,372.6h1.7v1.7h-1.7zM852.2,369.9h2.2v2.2h-2.2zM852.5,372.3h1.9v1.9h-1.9zM855.0,372.1h2.2v2.2h-2.2zM850.6,372.0h2.2v2.2h-2.2zM852.1,371.2h1.8v1.8h-1.8zM848.4,372.2h2.1v2.1h-2.1zM849.2,374.0h1.8v1.8h-1.8zM857.0,372.0h2.1v2.1h-2.1zM851.6,371.1h1.9v1.9h-1.9zM853.3,369.6h1.8v1.8h-1.8zM852.1,372.4h2.0v2.0h-2.0zM850.5,373.9h1.8v1.8h-1.8zM855.2,369.5h1.8v1.8h-1.8zM845.8,423.7h2.0v2.0h-2.0zM848.6,415.5h1.8v1.8h-1.8zM848.9,419.3h2.0v2.0h-2.0zM848.7,414.1h1.3v1.3h-1.3zM847.7,414.8h2.2v2.2h-2.2zM847.4,422.5h1.9v1.9h-1.9zM851.4,421.4h1.8v1.8h-1.8zM846.1,419.4h1.8v1.8h-1.8zM847.4,420.4h1.3v1.3h-1.3zM703.5,385.1h1.7v1.7h-1.7zM703.7,383.3h1.8v1.8h-1.8zM706.5,382.9h2.3v2.3h-2.3zM703.2,385.2h1.8v1.8h-1.8zM704.1,384.6h2.0v2.0h-2.0zM705.2,385.0h1.6v1.6h-1.6zM538.8,496.4h2.7v2.7h-2.7zM540.9,500.2h2.0v2.0h-2.0zM534.6,504.1h2.6v2.6h-2.6zM544.0,497.4h2.3v2.3h-2.3zM550.8,490.8h1.8v1.8h-1.8zM539.6,493.7h2.7v2.7h-2.7zM544.2,499.4h2.2v2.2h-2.2zM540.0,505.1h2.1v2.1h-2.1zM557.6,497.4h2.7v2.7h-2.7zM553.0,496.4h2.5v2.5h-2.5zM548.1,497.6h1.6v1.6h-1.6zM547.3,499.5h1.4v1.4h-1.4zM552.8,495.3h2.8v2.8h-2.8zM539.2,499.0h2.7v2.7h-2.7zM545.9,497.0h1.9v1.9h-1.9zM533.3,503.7h1.5v1.5h-1.5zM535.1,505.1h2.7v2.7h-2.7zM534.8,504.5h2.7v2.7h-2.7zM550.6,493.8h2.3v2.3h-2.3zM536.5,499.6h1.8v1.8h-1.8zM535.6,504.7h1.5v1.5h-1.5zM545.0,504.0h2.0v2.0h-2.0zM544.4,501.7h2.7v2.7h-2.7zM536.9,501.2h2.7v2.7h-2.7zM553.6,492.9h2.7v2.7h-2.7zM553.4,490.9h1.5v1.5h-1.5zM533.3,504.3h2.8v2.8h-2.8zM544.8,495.0h2.4v2.4h-2.4zM548.2,501.2h2.8v2.8h-2.8zM546.7,493.4h2.4v2.4h-2.4zM541.8,501.2h2.3v2.3h-2.3zM550.9,493.4h1.9v1.9h-1.9zM541.2,496.6h2.8v2.8h-2.8zM548.4,493.0h2.0v2.0h-2.0zM539.6,505.9h2.5v2.5h-2.5zM550.7,490.5h2.2v2.2h-2.2zM546.0,494.5h1.9v1.9h-1.9zM540.8,501.3h2.7v2.7h-2.7zM535.6,505.1h2.8v2.8h-2.8zM540.9,499.2h2.7v2.7h-2.7zM550.6,495.7h2.2v2.2h-2.2zM536.8,501.7h2.4v2.4h-2.4zM535.6,499.2h2.3v2.3h-2.3zM539.9,496.4h2.0v2.0h-2.0zM537.3,501.4h1.6v1.6h-1.6zM547.6,494.1h1.5v1.5h-1.5zM555.2,490.2h1.9v1.9h-1.9zM544.2,500.3h2.6v2.6h-2.6zM557.9,492.8h2.8v2.8h-2.8zM538.5,503.9h2.6v2.6h-2.6zM546.3,491.8h1.9v1.9h-1.9zM539.3,499.3h1.7v1.7h-1.7zM543.7,497.8h1.8v1.8h-1.8zM536.3,501.2h2.3v2.3h-2.3zM540.7,507.4h1.5v1.5h-1.5zM545.7,499.1h2.4v2.4h-2.4zM539.0,500.2h2.4v2.4h-2.4zM548.7,504.5h2.3v2.3h-2.3zM540.7,503.4h2.2v2.2h-2.2zM535.2,505.7h2.7v2.7h-2.7zM540.3,499.9h2.4v2.4h-2.4zM539.9,500.0h2.4v2.4h-2.4zM551.6,499.4h2.1v2.1h-2.1zM553.4,494.3h2.0v2.0h-2.0zM554.6,491.1h2.8v2.8h-2.8zM538.1,499.4h1.5v1.5h-1.5zM535.4,501.3h1.9v1.9h-1.9zM549.9,495.8h2.6v2.6h-2.6zM528.5,506.9h1.4v1.4h-1.4zM537.4,499.9h1.5v1.5h-1.5zM554.0,491.2h1.5v1.5h-1.5zM537.9,506.1h2.4v2.4h-2.4zM532.4,500.2h1.6v1.6h-1.6zM548.5,498.9h2.1v2.1h-2.1zM539.4,504.2h1.6v1.6h-1.6zM549.8,491.8h1.8v1.8h-1.8zM536.8,501.8h1.9v1.9h-1.9zM552.5,491.5h2.1v2.1h-2.1zM542.8,502.4h2.3v2.3h-2.3zM546.4,501.1h2.0v2.0h-2.0zM541.7,503.2h2.1v2.1h-2.1zM544.3,498.9h2.1v2.1h-2.1zM543.1,490.8h1.5v1.5h-1.5zM551.0,499.6h2.5v2.5h-2.5zM544.8,496.3h1.9v1.9h-1.9zM546.2,492.1h1.5v1.5h-1.5zM551.2,497.0h2.5v2.5h-2.5zM547.5,496.0h2.0v2.0h-2.0zM538.2,498.5h1.4v1.4h-1.4zM536.8,508.0h2.5v2.5h-2.5zM543.9,497.3h2.7v2.7h-2.7zM550.2,498.2h2.5v2.5h-2.5zM535.1,499.7h2.7v2.7h-2.7zM549.9,493.9h1.8v1.8h-1.8zM544.2,494.5h2.4v2.4h-2.4zM556.6,493.9h1.6v1.6h-1.6zM539.6,495.9h1.8v1.8h-1.8zM555.9,495.5h2.6v2.6h-2.6zM543.7,499.2h1.9v1.9h-1.9zM540.1,498.0h1.8v1.8h-1.8zM554.9,491.2h2.0v2.0h-2.0zM552.0,496.8h2.2v2.2h-2.2zM540.1,498.9h2.0v2.0h-2.0zM534.7,502.2h1.9v1.9h-1.9zM546.0,494.1h2.6v2.6h-2.6zM544.1,496.2h2.3v2.3h-2.3zM551.2,499.6h2.6v2.6h-2.6zM539.7,502.9h2.3v2.3h-2.3zM534.7,507.4h2.4v2.4h-2.4zM549.7,501.0h2.3v2.3h-2.3zM542.3,502.1h2.1v2.1h-2.1zM544.5,501.6h2.0v2.0h-2.0zM542.4,497.5h2.1v2.1h-2.1zM539.1,503.9h2.5v2.5h-2.5zM554.6,489.4h1.7v1.7h-1.7zM535.3,504.2h2.1v2.1h-2.1zM550.4,499.8h2.0v2.0h-2.0zM544.9,499.1h2.6v2.6h-2.6zM537.8,499.3h1.6v1.6h-1.6zM541.7,505.5h2.1v2.1h-2.1zM538.5,501.7h2.6v2.6h-2.6zM549.5,497.3h2.3v2.3h-2.3zM544.5,497.9h2.7v2.7h-2.7zM531.1,503.1h1.7v1.7h-1.7zM551.6,496.1h2.1v2.1h-2.1zM545.7,502.0h1.8v1.8h-1.8zM552.1,494.8h2.2v2.2h-2.2zM555.8,493.2h2.4v2.4h-2.4zM547.2,498.4h2.0v2.0h-2.0zM543.8,496.3h1.8v1.8h-1.8zM548.6,494.5h2.0v2.0h-2.0zM547.9,497.4h1.4v1.4h-1.4zM543.3,499.8h2.1v2.1h-2.1zM551.8,501.0h2.2v2.2h-2.2zM532.0,498.2h2.6v2.6h-2.6zM539.0,497.8h1.9v1.9h-1.9zM547.2,495.5h2.7v2.7h-2.7zM547.2,499.4h2.7v2.7h-2.7zM535.1,502.1h1.9v1.9h-1.9zM554.7,495.5h2.0v2.0h-2.0zM541.9,500.3h2.7v2.7h-2.7zM552.7,491.3h2.1v2.1h-2.1zM544.0,500.1h1.8v1.8h-1.8zM541.5,499.5h2.7v2.7h-2.7zM546.5,497.9h1.6v1.6h-1.6zM557.2,492.9h2.7v2.7h-2.7zM544.4,496.2h2.5v2.5h-2.5zM541.6,501.9h1.8v1.8h-1.8zM549.8,497.2h2.7v2.7h-2.7zM547.2,494.5h2.6v2.6h-2.6zM541.4,499.0h1.6v1.6h-1.6zM557.1,493.3h2.2v2.2h-2.2zM532.4,502.5h2.6v2.6h-2.6zM544.6,499.2h2.7v2.7h-2.7zM534.6,502.4h1.8v1.8h-1.8zM544.2,499.8h1.7v1.7h-1.7zM538.9,503.9h1.5v1.5h-1.5zM537.1,501.3h1.4v1.4h-1.4zM544.7,498.2h2.3v2.3h-2.3zM536.6,509.0h1.5v1.5h-1.5zM539.0,504.5h1.7v1.7h-1.7zM542.6,501.5h1.4v1.4h-1.4zM548.7,498.4h1.7v1.7h-1.7zM551.2,492.8h1.5v1.5h-1.5zM541.9,497.1h1.7v1.7h-1.7zM541.1,499.7h2.3v2.3h-2.3zM545.6,499.5h2.0v2.0h-2.0zM541.2,505.6h2.2v2.2h-2.2zM533.9,499.3h1.7v1.7h-1.7zM535.6,504.0h2.1v2.1h-2.1zM544.3,500.6h2.4v2.4h-2.4zM534.1,498.9h1.9v1.9h-1.9zM560.7,520.6h2.3v2.3h-2.3zM558.9,518.3h2.5v2.5h-2.5zM564.0,519.6h2.0v2.0h-2.0zM558.4,518.7h2.4v2.4h-2.4zM555.6,515.1h2.4v2.4h-2.4zM558.7,520.4h2.0v2.0h-2.0zM555.4,520.0h2.0v2.0h-2.0zM555.1,517.1h2.5v2.5h-2.5zM554.2,514.9h1.7v1.7h-1.7zM560.5,523.0h1.6v1.6h-1.6zM557.1,517.2h2.9v2.9h-2.9zM554.1,518.2h2.7v2.7h-2.7zM559.3,519.4h2.8v2.8h-2.8zM558.1,518.1h2.3v2.3h-2.3zM553.5,518.2h2.9v2.9h-2.9zM555.1,518.0h2.2v2.2h-2.2zM558.8,519.6h2.2v2.2h-2.2zM552.9,515.2h2.1v2.1h-2.1zM556.1,516.1h2.6v2.6h-2.6zM556.9,518.0h2.7v2.7h-2.7zM562.2,521.2h2.5v2.5h-2.5zM558.8,517.6h2.4v2.4h-2.4zM553.9,516.9h2.4v2.4h-2.4zM558.8,520.1h2.6v2.6h-2.6zM557.9,519.2h2.1v2.1h-2.1zM570.0,530.3h2.4v2.4h-2.4zM566.1,525.0h3.0v3.0h-3.0zM570.3,527.4h2.7v2.7h-2.7zM568.3,525.2h2.3v2.3h-2.3zM569.8,526.2h2.5v2.5h-2.5zM569.7,528.7h2.1v2.1h-2.1zM568.1,524.1h3.0v3.0h-3.0zM568.8,524.7h2.5v2.5h-2.5zM570.7,528.1h1.7v1.7h-1.7zM575.9,539.5h1.8v1.8h-1.8zM578.1,541.5h1.5v1.5h-1.5zM580.4,541.6h2.1v2.1h-2.1zM585.7,544.6h2.3v2.3h-2.3zM572.4,534.8h2.0v2.0h-2.0zM573.5,537.5h1.4v1.4h-1.4zM579.3,542.7h2.3v2.3h-2.3zM572.9,535.4h1.8v1.8h-1.8zM573.6,538.3h2.3v2.3h-2.3zM580.3,541.3h2.3v2.3h-2.3zM580.7,539.6h2.4v2.4h-2.4zM576.3,536.4h1.9v1.9h-1.9zM577.7,543.2h2.5v2.5h-2.5zM583.4,546.3h1.8v1.8h-1.8zM584.5,547.0h1.7v1.7h-1.7zM571.3,536.9h2.4v2.4h-2.4zM577.1,544.6h2.3v2.3h-2.3zM572.0,536.5h2.3v2.3h-2.3zM586.2,547.1h2.2v2.2h-2.2zM577.4,544.6h1.4v1.4h-1.4zM579.1,542.0h1.5v1.5h-1.5zM576.7,539.6h2.1v2.1h-2.1zM581.1,546.3h2.3v2.3h-2.3zM576.0,542.4h1.4v1.4h-1.4zM575.8,536.7h2.2v2.2h-2.2zM581.5,548.2h2.5v2.5h-2.5zM574.4,535.6h2.3v2.3h-2.3zM588.0,546.0h1.6v1.6h-1.6zM581.1,546.0h1.5v1.5h-1.5zM575.1,538.0h1.9v1.9h-1.9zM583.3,545.5h2.5v2.5h-2.5zM578.5,542.0h2.2v2.2h-2.2zM580.2,544.9h1.7v1.7h-1.7zM584.7,552.5h2.4v2.4h-2.4zM588.1,550.4h1.7v1.7h-1.7zM579.9,546.1h1.8v1.8h-1.8zM573.1,536.3h2.3v2.3h-2.3zM581.5,546.6h1.6v1.6h-1.6zM579.7,545.8h2.0v2.0h-2.0zM580.9,542.2h1.8v1.8h-1.8zM579.1,546.0h2.4v2.4h-2.4zM585.6,550.8h1.6v1.6h-1.6zM582.5,547.4h2.3v2.3h-2.3zM576.5,544.6h1.9v1.9h-1.9zM576.0,540.0h1.5v1.5h-1.5zM569.6,538.3h2.3v2.3h-2.3zM580.6,545.4h1.7v1.7h-1.7zM577.0,539.4h2.4v2.4h-2.4zM575.6,540.5h1.8v1.8h-1.8zM571.7,534.5h1.6v1.6h-1.6zM586.6,553.3h1.6v1.6h-1.6zM575.1,540.8h2.1v2.1h-2.1zM589.7,549.0h2.1v2.1h-2.1zM580.9,543.6h2.0v2.0h-2.0zM576.8,537.0h1.9v1.9h-1.9zM579.1,541.2h2.4v2.4h-2.4zM583.3,547.1h2.0v2.0h-2.0zM576.7,540.4h2.4v2.4h-2.4zM568.6,532.4h2.0v2.0h-2.0zM573.0,535.2h2.5v2.5h-2.5zM585.7,546.4h2.6v2.6h-2.6zM584.2,549.9h2.6v2.6h-2.6zM575.0,544.5h1.6v1.6h-1.6zM580.0,543.5h2.1v2.1h-2.1zM573.4,540.5h1.7v1.7h-1.7zM573.0,535.0h1.9v1.9h-1.9zM585.8,551.9h2.3v2.3h-2.3zM587.3,546.4h2.6v2.6h-2.6zM587.1,550.8h2.0v2.0h-2.0zM573.2,539.4h2.3v2.3h-2.3zM587.1,551.9h1.6v1.6h-1.6zM575.4,538.8h1.9v1.9h-1.9zM574.9,540.8h1.6v1.6h-1.6zM575.4,540.7h1.7v1.7h-1.7zM578.6,543.1h1.8v1.8h-1.8zM583.2,548.6h1.5v1.5h-1.5zM577.1,541.9h1.6v1.6h-1.6zM580.8,540.4h1.7v1.7h-1.7zM577.1,540.5h2.5v2.5h-2.5zM576.2,540.8h2.6v2.6h-2.6zM578.5,540.2h1.7v1.7h-1.7zM586.1,553.6h2.1v2.1h-2.1zM571.8,535.7h2.1v2.1h-2.1zM574.2,540.4h1.8v1.8h-1.8zM586.5,549.2h1.7v1.7h-1.7zM582.0,546.3h1.6v1.6h-1.6zM578.1,541.2h1.8v1.8h-1.8zM584.4,545.5h1.5v1.5h-1.5zM587.2,548.1h2.1v2.1h-2.1zM578.7,544.1h2.3v2.3h-2.3zM585.5,548.0h2.2v2.2h-2.2zM586.2,551.0h1.8v1.8h-1.8zM580.4,538.2h2.3v2.3h-2.3zM576.1,537.4h1.8v1.8h-1.8zM575.3,538.0h2.4v2.4h-2.4zM580.5,546.5h2.4v2.4h-2.4zM583.2,546.0h1.5v1.5h-1.5zM585.4,548.9h2.2v2.2h-2.2zM596.5,559.4h1.7v1.7h-1.7zM592.5,554.2h1.9v1.9h-1.9zM598.1,556.5h2.0v2.0h-2.0zM593.9,554.5h2.5v2.5h-2.5zM592.8,551.5h1.6v1.6h-1.6zM596.7,555.9h2.2v2.2h-2.2zM590.9,552.0h2.0v2.0h-2.0zM592.3,554.0h2.7v2.7h-2.7zM594.0,551.9h2.7v2.7h-2.7zM594.2,554.8h2.1v2.1h-2.1zM592.7,556.0h1.9v1.9h-1.9zM595.7,560.8h2.8v2.8h-2.8zM598.2,561.6h2.7v2.7h-2.7zM596.8,557.8h2.0v2.0h-2.0zM592.7,551.8h2.8v2.8h-2.8zM592.2,553.6h2.9v2.9h-2.9zM594.7,554.3h2.4v2.4h-2.4zM597.5,559.5h3.0v3.0h-3.0zM594.6,557.5h2.3v2.3h-2.3zM600.6,561.2h2.3v2.3h-2.3zM595.8,556.2h1.8v1.8h-1.8zM594.6,559.2h2.2v2.2h-2.2zM596.3,559.8h2.7v2.7h-2.7zM599.2,564.1h2.1v2.1h-2.1zM596.1,559.4h2.4v2.4h-2.4zM593.5,553.4h1.8v1.8h-1.8zM576.8,514.7h2.3v2.3h-2.3zM574.9,515.6h2.8v2.8h-2.8zM575.4,515.8h2.3v2.3h-2.3zM576.4,515.2h2.0v2.0h-2.0zM574.2,515.3h2.8v2.8h-2.8zM575.3,515.5h1.7v1.7h-1.7zM404.1,339.2h1.5v1.5h-1.5zM406.2,339.0h1.3v1.3h-1.3zM404.8,343.9h1.6v1.6h-1.6zM406.6,339.3h1.7v1.7h-1.7zM407.1,317.5h1.6v1.6h-1.6zM404.9,345.9h1.7v1.7h-1.7zM406.6,324.8h2.1v2.1h-2.1zM404.4,337.0h1.3v1.3h-1.3zM403.7,344.8h1.6v1.6h-1.6zM404.0,346.6h1.3v1.3h-1.3zM405.6,330.1h1.8v1.8h-1.8zM405.7,333.0h2.2v2.2h-2.2zM405.5,325.3h1.2v1.2h-1.2zM406.1,326.1h1.7v1.7h-1.7zM405.6,325.8h1.3v1.3h-1.3zM406.4,326.2h1.4v1.4h-1.4zM402.3,338.0h1.9v1.9h-1.9zM408.0,319.1h1.5v1.5h-1.5zM406.5,339.9h1.8v1.8h-1.8zM404.6,342.4h1.8v1.8h-1.8zM405.5,332.2h1.9v1.9h-1.9zM405.0,330.2h1.8v1.8h-1.8zM405.8,338.9h1.5v1.5h-1.5zM406.8,329.8h1.8v1.8h-1.8zM406.7,319.9h1.5v1.5h-1.5zM404.6,338.6h1.2v1.2h-1.2zM404.9,348.2h1.2v1.2h-1.2zM404.1,345.4h1.4v1.4h-1.4zM403.4,346.9h1.7v1.7h-1.7zM405.6,341.4h2.1v2.1h-2.1zM406.6,319.8h2.1v2.1h-2.1zM405.9,332.1h1.2v1.2h-1.2zM403.8,344.3h2.1v2.1h-2.1zM404.4,339.5h1.7v1.7h-1.7zM406.4,317.0h1.8v1.8h-1.8zM405.7,331.4h1.7v1.7h-1.7zM406.7,333.8h1.9v1.9h-1.9zM407.0,320.7h1.7v1.7h-1.7zM404.4,339.4h2.0v2.0h-2.0zM407.2,319.9h2.0v2.0h-2.0zM405.0,341.8h2.2v2.2h-2.2zM402.1,343.6h1.6v1.6h-1.6zM399.1,330.1h1.8v1.8h-1.8zM400.8,334.4h1.3v1.3h-1.3zM400.4,336.8h1.8v1.8h-1.8zM399.7,332.3h1.2v1.2h-1.2zM403.1,346.0h1.8v1.8h-1.8zM403.0,343.4h1.6v1.6h-1.6zM401.0,337.5h1.2v1.2h-1.2zM400.4,332.1h1.6v1.6h-1.6zM402.7,345.4h1.5v1.5h-1.5zM400.7,338.9h1.6v1.6h-1.6zM400.7,335.6h1.9v1.9h-1.9zM400.0,333.7h1.3v1.3h-1.3zM399.8,351.3h1.3v1.3h-1.3zM399.4,351.6h1.6v1.6h-1.6zM399.3,351.4h1.9v1.9h-1.9zM400.9,350.9h1.9v1.9h-1.9zM399.8,351.2h1.8v1.8h-1.8zM400.5,351.3h1.9v1.9h-1.9zM423.6,260.3h1.4v1.4h-1.4zM425.8,259.8h1.7v1.7h-1.7zM423.8,265.3h1.4v1.4h-1.4zM425.0,270.7h2.1v2.1h-2.1zM425.1,265.4h1.4v1.4h-1.4zM424.2,263.4h2.2v2.2h-2.2zM425.3,268.4h2.3v2.3h-2.3zM426.2,268.9h1.6v1.6h-1.6zM424.8,268.9h2.0v2.0h-2.0zM424.2,269.5h1.5v1.5h-1.5zM424.2,263.1h1.6v1.6h-1.6zM425.8,264.7h1.9v1.9h-1.9zM424.3,258.8h2.3v2.3h-2.3zM423.9,269.3h1.5v1.5h-1.5zM425.1,268.7h1.7v1.7h-1.7zM418.5,284.3h2.1v2.1h-2.1zM421.2,281.4h1.7v1.7h-1.7zM417.0,285.5h1.7v1.7h-1.7zM416.8,286.3h2.1v2.1h-2.1zM418.5,284.4h1.9v1.9h-1.9zM418.5,283.5h1.3v1.3h-1.3zM419.7,282.6h1.9v1.9h-1.9zM415.5,287.3h1.8v1.8h-1.8zM417.1,283.9h1.9v1.9h-1.9zM420.7,283.2h1.7v1.7h-1.7zM416.3,287.7h1.8v1.8h-1.8zM418.9,283.4h1.7v1.7h-1.7zM417.7,284.3h1.6v1.6h-1.6zM417.1,285.6h1.4v1.4h-1.4zM418.5,284.5h1.3v1.3h-1.3zM415.2,285.3h1.7v1.7h-1.7zM437.6,247.4h1.2v1.2h-1.2zM435.8,249.7h1.5v1.5h-1.5zM434.3,251.1h1.9v1.9h-1.9zM434.2,251.6h1.9v1.9h-1.9zM436.5,248.6h1.8v1.8h-1.8zM437.8,247.5h1.3v1.3h-1.3zM404.5,299.8h1.4v1.4h-1.4zM404.4,304.3h1.2v1.2h-1.2zM405.2,299.4h1.3v1.3h-1.3zM404.1,298.4h1.8v1.8h-1.8zM404.1,300.0h1.8v1.8h-1.8zM405.2,304.3h1.6v1.6h-1.6zM404.1,303.1h1.9v1.9h-1.9zM419.7,345.1h1.0v1.0h-1.0zM420.8,346.8h2.1v2.1h-2.1zM421.7,346.8h1.4v1.4h-1.4zM465.5,437.9h1.7v1.7h-1.7zM464.5,436.9h1.5v1.5h-1.5zM465.5,437.2h2.0v2.0h-2.0zM465.6,437.3h1.6v1.6h-1.6zM464.4,439.8h2.1v2.1h-2.1zM464.9,437.7h1.5v1.5h-1.5zM464.9,440h1.6v1.6h-1.6zM467.4,400.5h1.7v1.7h-1.7zM467.6,399.2h1.8v1.8h-1.8zM468.9,398.0h1.1v1.1h-1.1zM467.7,400.9h1.5v1.5h-1.5zM567.5,337.2h2.0v2.0h-2.0zM563.8,338.2h1.7v1.7h-1.7zM569.4,343.5h1.8v1.8h-1.8zM560.8,338.1h1.5v1.5h-1.5zM572.0,343.8h1.9v1.9h-1.9zM567.4,341.7h2.2v2.2h-2.2zM564.4,341.5h1.5v1.5h-1.5zM562.8,338.0h1.4v1.4h-1.4zM559.4,335.5h1.3v1.3h-1.3zM562.7,335.5h2.0v2.0h-2.0zM564.1,337.7h1.4v1.4h-1.4zM571.6,344.5h1.7v1.7h-1.7zM574.1,343.5h1.3v1.3h-1.3zM564.8,338.2h2.3v2.3h-2.3zM566.2,343.4h2.2v2.2h-2.2zM564.8,339.7h1.5v1.5h-1.5zM561.0,338.4h2.1v2.1h-2.1zM559.0,336.3h2.4v2.4h-2.4zM565.4,337.6h2.1v2.1h-2.1zM906.5,302.5h1.8v1.8h-1.8zM907.2,300.3h2.1v2.1h-2.1zM908.1,306.1h1.4v1.4h-1.4zM903.8,303.3h2.1v2.1h-2.1zM904.4,302.8h1.4v1.4h-1.4zM906.4,301.0h1.8v1.8h-1.8zM909.2,305.5h1.8v1.8h-1.8zM908.0,304.3h2.0v2.0h-2.0zM889.0,283.8h1.4v1.4h-1.4zM897.7,285.0h1.3v1.3h-1.3zM888.7,284.3h1.3v1.3h-1.3zM800.0,261.4h1.8v1.8h-1.8zM801.6,262.0h1.6v1.6h-1.6zM801.0,260.7h1.4v1.4h-1.4zM797.3,264.8h1.1v1.1h-1.1zM798.1,260.9h1.0v1.0h-1.0zM796.9,261.2h2.0v2.0h-2.0zM736.7,248.8h1.6v1.6h-1.6zM732.2,246.9h1.4v1.4h-1.4zM738.4,247.3h1.3v1.3h-1.3zM731.8,248.4h1.2v1.2h-1.2zM738.2,245.2h1.9v1.9h-1.9zM712.6,390.7h2.0v2.0h-2.0zM710.0,388.8h1.3v1.3h-1.3zM707.6,389.1h1.1v1.1h-1.1zM707.2,390.2h1.3v1.3h-1.3zM707.5,391.5h1.4v1.4h-1.4zM649.2,430.4h1.7v1.7h-1.7zM642.0,432.6h1.6v1.6h-1.6zM658.8,428.4h1.2v1.2h-1.2zM639.7,429.3h1.8v1.8h-1.8zM647.8,427.9h1.8v1.8h-1.8zM670,430.2h1.9v1.9h-1.9zM652.7,435.6h1.8v1.8h-1.8zM639.1,431.8h1.2v1.2h-1.2zM650.2,430.7h2.0v2.0h-2.0zM644.4,431.3h1.1v1.1h-1.1zM640.3,430.2h2.2v2.2h-2.2zM709.4,530.2h1.3v1.3h-1.3zM708.2,530.6h1.6v1.6h-1.6zM705.5,530.3h2.0v2.0h-2.0zM706.6,528.4h2.2v2.2h-2.2zM702.4,529.6h1.7v1.7h-1.7zM704.4,531.6h1.8v1.8h-1.8zM707.2,528.2h1.1v1.1h-1.1zM700.9,528.3h1.3v1.3h-1.3zM710.0,533.0h1.7v1.7h-1.7zM704.7,532.7h2.2v2.2h-2.2zM704.9,529.6h1.0v1.0h-1.0zM766.2,547.6h1.2v1.2h-1.2zM761.5,550.5h2.0v2.0h-2.0zM761.5,548.3h1.5v1.5h-1.5zM764.1,547.3h1.7v1.7h-1.7zM761.4,549.5h1.3v1.3h-1.3zM760.2,553.0h1.6v1.6h-1.6zM761.7,553.5h1.5v1.5h-1.5zM760.7,552.0h1.8v1.8h-1.8zM759.3,550.0h1.5v1.5h-1.5zM758.2,549.6h1.2v1.2h-1.2zM762.7,549.1h1.3v1.3h-1.3zM759.8,550.0h1.4v1.4h-1.4zM760.6,549.1h1.8v1.8h-1.8zM764.4,550.0h1.8v1.8h-1.8zM657.2,585.9h1.6v1.6h-1.6zM657.4,586.1h2.1v2.1h-2.1zM657.8,584.7h1.6v1.6h-1.6zM656.1,586.4h1.0v1.0h-1.0zM656.8,585.4h1.7v1.7h-1.7zM656.4,586.9h1.6v1.6h-1.6zM657.7,584.1h1.0v1.0h-1.0zM657.4,586.0h2.1v2.1h-2.1zM666.5,561.8h1.3v1.3h-1.3zM668.6,567h1.2v1.2h-1.2zM668.4,564.4h2.2v2.2h-2.2zM666,565.2h1.3v1.3h-1.3zM668.3,566.0h2.1v2.1h-2.1zM668.9,566.3h2.1v2.1h-2.1zM667.9,564.1h1.4v1.4h-1.4zM668.4,565.8h1.2v1.2h-1.2zM524.4,439.5h1.9v1.9h-1.9zM523.6,439.9h2.1v2.1h-2.1zM522.5,438.7h1.7v1.7h-1.7zM465.1,438.8h1.1v1.1h-1.1zM464.1,436.2h1.4v1.4h-1.4zM851.3,473.1h1.2v1.2h-1.2zM839.0,314.8h1.2v1.2h-1.2zM773.0,551.2h1.2v1.2h-1.2zM764.2,363.0h1.2v1.2h-1.2zM635.9,248.4h1.2v1.2h-1.2zM852.1,344.0h1.2v1.2h-1.2zM692.8,376.2h1.2v1.2h-1.2zM692.6,527.7h1.2v1.2h-1.2zM699.4,427.9h1.2v1.2h-1.2zM755.3,388.4h1.2v1.2h-1.2zM754.3,522.2h1.2v1.2h-1.2zM853.8,338.2h1.2v1.2h-1.2zM690.1,436.6h1.2v1.2h-1.2zM740.9,356.3h1.2v1.2h-1.2zM630.2,532.8h1.2v1.2h-1.2zM809.2,462.7h1.2v1.2h-1.2zM675.6,492.4h1.2v1.2h-1.2zM727.0,307.8h1.2v1.2h-1.2zM807.5,506.6h1.2v1.2h-1.2zM641.1,327.5h1.2v1.2h-1.2zM869.7,399.7h1.2v1.2h-1.2zM845.3,240.6h1.2v1.2h-1.2zM859.6,458.2h1.2v1.2h-1.2zM663.9,527.7h1.2v1.2h-1.2zM688.7,177.0h1.1v1.1h-1.1zM656.1,219.0h1.1v1.1h-1.1zM676.0,188.4h1.1v1.1h-1.1zM678.6,221.8h1.1v1.1h-1.1zM715.4,169.9h1.1v1.1h-1.1zM630.0,169.7h1.1v1.1h-1.1zM707.7,238.8h1.1v1.1h-1.1zM622.8,177.1h1.1v1.1h-1.1zM638.3,197.4h1.1v1.1h-1.1zM584.7,159.2h1.1v1.1h-1.1zM625.3,233.0h1.1v1.1h-1.1zM690.0,213.8h1.1v1.1h-1.1zM713.9,170.1h1.1v1.1h-1.1zM590.6,239.7h1.1v1.1h-1.1zM679.8,223.9h1.1v1.1h-1.1zM650.0,176.4h1.1v1.1h-1.1z"/>
<path fill="#ee7d1a" d="M700.4,143.3h2.0v2.0h-2.0zM693.8,146.7h2.0v2.0h-2.0zM680.3,141.5h1.3v1.3h-1.3zM670.1,153.7h1.7v1.7h-1.7zM718.1,155.2h1.4v1.4h-1.4zM678.8,150.4h1.9v1.9h-1.9zM686.6,135.8h2.3v2.3h-2.3zM706.0,127.7h2.2v2.2h-2.2zM701.2,142.9h1.7v1.7h-1.7zM670,143.5h1.8v1.8h-1.8zM681.7,153.6h1.9v1.9h-1.9zM714.3,167.0h2.6v2.6h-2.6zM693.4,147.7h2.6v2.6h-2.6zM706.9,143.9h1.4v1.4h-1.4zM701.3,157.7h1.6v1.6h-1.6zM705.7,134.3h2.4v2.4h-2.4zM706.9,126.9h1.5v1.5h-1.5zM684.2,150.9h1.4v1.4h-1.4zM710.5,147.6h2.5v2.5h-2.5zM703.2,139.7h2.5v2.5h-2.5zM695.6,122h1.6v1.6h-1.6zM708.5,157.8h2.1v2.1h-2.1zM696.0,142.6h1.3v1.3h-1.3zM681.9,128.9h1.9v1.9h-1.9zM697.0,134.2h1.5v1.5h-1.5zM689.2,168.1h1.5v1.5h-1.5zM704.7,145.9h1.8v1.8h-1.8zM701.1,153.5h1.8v1.8h-1.8zM683.6,161.7h1.5v1.5h-1.5zM701.6,155.9h1.6v1.6h-1.6zM692.2,158.4h2.6v2.6h-2.6zM714.2,152.9h2.4v2.4h-2.4zM711.4,157.7h2.1v2.1h-2.1zM719.4,150.3h2.3v2.3h-2.3zM709.3,156.6h2.3v2.3h-2.3zM682.2,130.2h2.1v2.1h-2.1zM718.4,147.5h2.3v2.3h-2.3zM711.2,170.2h2.4v2.4h-2.4zM716.6,160.7h2.1v2.1h-2.1zM709.0,166.9h1.7v1.7h-1.7zM706.5,163.7h1.7v1.7h-1.7zM719.2,176.8h1.5v1.5h-1.5zM709.2,168.2h2.2v2.2h-2.2zM707.8,161.0h2.0v2.0h-2.0zM714.9,160.4h2.0v2.0h-2.0zM706.2,170.0h2.0v2.0h-2.0zM713.8,164.5h1.2v1.2h-1.2zM677.0,154.0h2.5v2.5h-2.5zM678.6,145.1h2.1v2.1h-2.1zM671.6,150.9h2.2v2.2h-2.2zM672.5,149.5h1.6v1.6h-1.6zM670.2,149.9h2.5v2.5h-2.5zM678.6,151.3h1.7v1.7h-1.7zM666.5,151.1h1.8v1.8h-1.8zM674.9,139.4h2.1v2.1h-2.1zM672.6,149.0h1.2v1.2h-1.2zM664.1,140.7h1.3v1.3h-1.3zM671.8,147.4h1.2v1.2h-1.2zM670.6,153.5h2.1v2.1h-2.1zM671.3,150.2h2.4v2.4h-2.4zM680.9,156.8h2.3v2.3h-2.3zM672.8,153.3h2.5v2.5h-2.5zM770.0,177.0h2.1v2.1h-2.1zM780.0,173.4h1.7v1.7h-1.7zM774.2,177.3h1.7v1.7h-1.7zM772.1,174.7h1.8v1.8h-1.8zM784.1,175.8h2.1v2.1h-2.1zM778.8,173.5h1.9v1.9h-1.9zM764,176.1h1.7v1.7h-1.7zM774.6,178.2h1.7v1.7h-1.7zM775.6,175.8h1.9v1.9h-1.9zM784.2,174.1h1.6v1.6h-1.6zM769.5,175.7h1.8v1.8h-1.8zM774.5,176.1h1.8v1.8h-1.8zM786.2,172.0h1.6v1.6h-1.6zM783.0,171h2.1v2.1h-2.1zM779.1,178.4h2.0v2.0h-2.0zM772.4,173.0h1.7v1.7h-1.7zM771.4,177.6h1.4v1.4h-1.4zM778.7,177.8h1.9v1.9h-1.9zM771.1,173.8h1.4v1.4h-1.4zM788,173.2h1.7v1.7h-1.7zM776.1,187.7h1.3v1.3h-1.3zM777.1,189.9h1.9v1.9h-1.9zM776.7,196.0h1.1v1.1h-1.1zM774.2,188.0h2.1v2.1h-2.1zM784.0,189.9h1.3v1.3h-1.3zM773.6,189.6h1.2v1.2h-1.2zM774.6,192.0h1.3v1.3h-1.3zM783.9,193.6h2.2v2.2h-2.2zM783.6,194.3h1.4v1.4h-1.4zM779.7,194.3h1.0v1.0h-1.0zM781.7,192.0h1.6v1.6h-1.6zM785.1,185.1h2.2v2.2h-2.2zM777.3,185.6h1.1v1.1h-1.1zM775.7,194.3h1.5v1.5h-1.5zM776.3,189.3h1.6v1.6h-1.6zM774.7,191.5h1.8v1.8h-1.8zM779.6,187.7h1.6v1.6h-1.6zM777.7,182.6h1.1v1.1h-1.1zM779.8,188.0h1.4v1.4h-1.4zM784.5,187.7h1.1v1.1h-1.1zM777.0,193.4h1.4v1.4h-1.4zM775.6,195.5h1.0v1.0h-1.0zM782.8,185.2h2.0v2.0h-2.0zM783.5,192.8h1.8v1.8h-1.8zM778.4,195.2h1.3v1.3h-1.3zM748.6,372.5h2.1v2.1h-2.1zM741.4,385.7h3.1v3.1h-3.1zM749.3,378.1h2.8v2.8h-2.8zM749.1,395.6h1.7v1.7h-1.7zM741.8,392.2h2.8v2.8h-2.8zM755.2,400.7h1.8v1.8h-1.8zM749.6,372.1h1.6v1.6h-1.6zM731.0,380.9h3.0v3.0h-3.0zM757.7,413.9h3.1v3.1h-3.1zM729.9,366.4h2.6v2.6h-2.6zM757.3,377.2h2.8v2.8h-2.8zM739.2,378.8h1.9v1.9h-1.9zM725.8,363.9h1.8v1.8h-1.8zM757.6,399.5h1.8v1.8h-1.8zM737.3,364.8h2.2v2.2h-2.2zM739.5,374.5h2.0v2.0h-2.0zM752.2,393.1h2.0v2.0h-2.0zM745.2,386.7h2.0v2.0h-2.0zM748.0,406.4h2.6v2.6h-2.6zM746.4,395.6h1.7v1.7h-1.7zM735.8,371.4h3.2v3.2h-3.2zM726.6,373.6h2.2v2.2h-2.2zM741.6,362.0h2.4v2.4h-2.4zM764.3,398.3h2.2v2.2h-2.2zM746.4,375.2h1.7v1.7h-1.7zM764.6,382.6h2.9v2.9h-2.9zM740.9,356.3h2.4v2.4h-2.4zM739.6,372.7h2.7v2.7h-2.7zM756.5,366.2h2.7v2.7h-2.7zM742.6,390.0h2.4v2.4h-2.4zM750.1,379.3h1.9v1.9h-1.9zM740.7,379.8h2.0v2.0h-2.0zM765.2,390.2h2.1v2.1h-2.1zM737.1,400.1h3.2v3.2h-3.2zM747.4,401.0h1.7v1.7h-1.7zM742.5,395.8h2.8v2.8h-2.8zM753.6,369.1h2.0v2.0h-2.0zM759.8,396.3h2.2v2.2h-2.2zM731.7,378.0h3.1v3.1h-3.1zM760.9,381.1h2.6v2.6h-2.6zM732.1,359.8h1.7v1.7h-1.7zM728.7,350.7h1.6v1.6h-1.6zM735.2,357.9h2.3v2.3h-2.3zM725.0,356.2h1.7v1.7h-1.7zM721.3,358.0h2.2v2.2h-2.2zM759.1,378.0h2.5v2.5h-2.5zM749.9,364.7h2.0v2.0h-2.0zM732.3,363.8h2.5v2.5h-2.5zM759.6,390.7h2.8v2.8h-2.8zM739.5,394.9h2.9v2.9h-2.9zM740.4,374.0h2.7v2.7h-2.7zM738.5,388.2h2.0v2.0h-2.0zM753.1,387.6h2.4v2.4h-2.4zM755.9,383.1h3.1v3.1h-3.1zM742.0,383.7h2.6v2.6h-2.6zM758.1,368.3h2.7v2.7h-2.7zM773.0,398.9h3.0v3.0h-3.0zM724.0,378.5h3.0v3.0h-3.0zM755.6,383.2h2.8v2.8h-2.8zM749.4,389.6h2.2v2.2h-2.2zM757.7,387.9h2.5v2.5h-2.5zM734.4,357.0h2.2v2.2h-2.2zM730.5,374.2h2.2v2.2h-2.2zM752.9,399.3h2.9v2.9h-2.9zM729.8,374.4h1.9v1.9h-1.9zM761.3,379.8h2.9v2.9h-2.9zM741.9,385.8h1.6v1.6h-1.6zM743.2,388.9h3.0v3.0h-3.0zM760.3,385.6h1.9v1.9h-1.9zM742.9,363.0h2.9v2.9h-2.9zM751.1,399.2h2.4v2.4h-2.4zM756.9,389.1h2.5v2.5h-2.5zM750.0,380.2h3.1v3.1h-3.1zM737.4,358.5h2.0v2.0h-2.0zM734.4,385.4h1.6v1.6h-1.6zM736.3,389.5h1.9v1.9h-1.9zM744.2,398.6h2.4v2.4h-2.4zM769.0,405.6h3.2v3.2h-3.2zM771.3,388.1h2.0v2.0h-2.0zM743.4,364.3h3.0v3.0h-3.0zM742.5,371.7h2.1v2.1h-2.1zM742.2,383.1h2.1v2.1h-2.1zM760.6,392.4h1.8v1.8h-1.8zM747.4,358.0h2.3v2.3h-2.3zM732.6,370.8h1.9v1.9h-1.9zM747.1,364.2h2.3v2.3h-2.3zM753.4,407.3h2.8v2.8h-2.8zM764.7,398.3h2.5v2.5h-2.5zM735.5,380.9h3.2v3.2h-3.2zM742.9,383.4h1.9v1.9h-1.9zM739.9,380.1h2.1v2.1h-2.1zM755.6,373.6h2.0v2.0h-2.0zM743.9,370.3h1.6v1.6h-1.6zM736.7,381.1h1.9v1.9h-1.9zM735.4,367.3h1.7v1.7h-1.7zM749.4,375.8h2.5v2.5h-2.5zM747.2,374.2h2.4v2.4h-2.4zM732.8,384.5h2.9v2.9h-2.9zM747.4,366.9h1.8v1.8h-1.8zM750.3,397.8h1.7v1.7h-1.7zM749.3,403.3h2.3v2.3h-2.3zM746.4,366.0h2.4v2.4h-2.4zM743.3,374.8h2.3v2.3h-2.3zM735.3,372.8h1.8v1.8h-1.8zM755.9,385.1h2.0v2.0h-2.0zM752.2,402.6h3.2v3.2h-3.2zM737.7,375.7h2.8v2.8h-2.8zM745.6,396.6h2.9v2.9h-2.9zM745.1,404.5h2.1v2.1h-2.1zM753.0,383.9h3.1v3.1h-3.1zM767.6,407.0h2.0v2.0h-2.0zM749.7,390.3h2.1v2.1h-2.1zM753.1,398.1h2.5v2.5h-2.5zM731.5,376.1h1.8v1.8h-1.8zM739.4,370.0h1.9v1.9h-1.9zM751.4,382.7h2.1v2.1h-2.1zM750.3,392.5h3.1v3.1h-3.1zM739.9,381.0h2.9v2.9h-2.9zM742.8,361.3h2.7v2.7h-2.7zM734.2,361.2h2.6v2.6h-2.6zM733.9,360.3h1.8v1.8h-1.8zM735.6,364.7h2.6v2.6h-2.6zM738.3,363.6h1.4v1.4h-1.4zM730.7,364.4h2.5v2.5h-2.5zM738.2,364.9h2.3v2.3h-2.3zM734.1,364.4h2.4v2.4h-2.4zM735.6,358.5h2.0v2.0h-2.0zM734.8,362.8h1.5v1.5h-1.5zM736.8,362.6h2.4v2.4h-2.4zM738.3,358.7h1.7v1.7h-1.7zM733.7,363.0h1.9v1.9h-1.9zM736.5,363.9h1.8v1.8h-1.8zM733.6,358.9h2.5v2.5h-2.5zM735.9,362.1h2.8v2.8h-2.8zM737.2,362.9h1.7v1.7h-1.7zM739.1,365.2h1.6v1.6h-1.6zM548.6,498.9h1.8v1.8h-1.8zM551.9,498.2h2.2v2.2h-2.2zM548.6,493.0h2.4v2.4h-2.4zM554.5,495.5h2.1v2.1h-2.1zM559.9,493.5h1.6v1.6h-1.6zM537.5,500.0h1.5v1.5h-1.5zM559.0,495.3h2.7v2.7h-2.7zM549.6,500.1h1.5v1.5h-1.5zM553.3,496.2h2.1v2.1h-2.1zM540.4,504.4h2.7v2.7h-2.7zM552.7,497.0h1.9v1.9h-1.9zM547.5,495.1h1.7v1.7h-1.7zM545.8,503.2h2.4v2.4h-2.4zM551.2,501.0h1.8v1.8h-1.8zM540.7,509.1h1.6v1.6h-1.6zM545.3,501.3h2.4v2.4h-2.4zM536.5,502.6h2.2v2.2h-2.2zM536.1,500.3h1.5v1.5h-1.5zM551.6,495.0h2.1v2.1h-2.1zM550.3,497.5h1.6v1.6h-1.6zM554.4,495.5h1.8v1.8h-1.8zM551.5,497.7h2.7v2.7h-2.7zM533.9,502.2h2.2v2.2h-2.2zM530.4,505.4h2.2v2.2h-2.2zM552.2,495.1h2.7v2.7h-2.7zM533.3,503.2h1.8v1.8h-1.8zM547.7,497.4h2.0v2.0h-2.0zM547.2,496.8h2.6v2.6h-2.6zM545.3,502.1h1.7v1.7h-1.7zM542.7,501.7h1.6v1.6h-1.6zM557.7,491.8h2.7v2.7h-2.7zM550.0,500.5h1.6v1.6h-1.6zM555.0,498.6h1.8v1.8h-1.8zM547.6,496.0h2.6v2.6h-2.6zM552.1,501.3h2.0v2.0h-2.0zM537.4,506.3h2.3v2.3h-2.3zM542.7,493.4h1.9v1.9h-1.9zM544.7,502.5h1.9v1.9h-1.9zM547.4,498.5h1.8v1.8h-1.8zM554.8,496.6h2.5v2.5h-2.5zM549.3,498.4h2.3v2.3h-2.3zM554.2,497.8h1.8v1.8h-1.8zM540.8,503.1h1.9v1.9h-1.9zM530.8,502.3h2.1v2.1h-2.1zM551.3,492.7h2.5v2.5h-2.5zM554.2,495.0h2.0v2.0h-2.0zM541.7,498.7h2.1v2.1h-2.1zM538.5,505.7h2.6v2.6h-2.6zM546.3,497.0h1.5v1.5h-1.5zM551.6,494.5h1.9v1.9h-1.9zM540.0,495.8h2.6v2.6h-2.6zM551.4,494.0h2.0v2.0h-2.0zM550.2,495.1h2.3v2.3h-2.3zM553.5,492.8h2.6v2.6h-2.6zM551.1,494.0h2.2v2.2h-2.2zM545.6,496.6h2.0v2.0h-2.0zM545.2,493.9h2.4v2.4h-2.4zM545.2,495.4h2.7v2.7h-2.7zM543.0,497.5h2.2v2.2h-2.2zM549.7,494.7h2.0v2.0h-2.0zM545.0,494.3h2.5v2.5h-2.5zM545.4,498.2h2.4v2.4h-2.4zM545.5,496.9h2.4v2.4h-2.4zM543.1,495.9h2.5v2.5h-2.5zM546.1,496.1h1.9v1.9h-1.9zM542.3,496.8h1.8v1.8h-1.8zM545.8,494.7h2.3v2.3h-2.3zM558.2,518.0h1.6v1.6h-1.6zM556.5,515.0h2.0v2.0h-2.0zM560.1,519.7h2.8v2.8h-2.8zM560.1,520.6h2.2v2.2h-2.2zM560.5,519.9h2.1v2.1h-2.1zM553.5,516.4h1.7v1.7h-1.7zM557.2,518.3h2.4v2.4h-2.4zM554.8,517.2h2.8v2.8h-2.8zM556.7,518.2h2.8v2.8h-2.8zM557.0,519.3h1.6v1.6h-1.6zM556.9,518.2h1.8v1.8h-1.8zM557.7,519.0h2.2v2.2h-2.2zM561.5,520.7h2.8v2.8h-2.8zM558.2,519.3h2.9v2.9h-2.9zM558.4,518.1h1.8v1.8h-1.8zM570.2,529.0h2.6v2.6h-2.6zM572.1,529.1h2.9v2.9h-2.9zM567.4,525.7h2.0v2.0h-2.0zM568.9,527.5h1.8v1.8h-1.8zM569.7,527.1h2.1v2.1h-2.1zM568.8,523.5h2.5v2.5h-2.5zM570.7,533.6h1.8v1.8h-1.8zM574.2,536.1h2.4v2.4h-2.4zM586.7,550.6h2.1v2.1h-2.1zM573.6,537.1h1.9v1.9h-1.9zM587.2,554.6h2.3v2.3h-2.3zM579.7,540.9h2.4v2.4h-2.4zM581.8,543.5h1.7v1.7h-1.7zM578.5,543.7h2.6v2.6h-2.6zM585.7,548.3h2.0v2.0h-2.0zM582.7,545.7h1.8v1.8h-1.8zM577.6,542.6h2.5v2.5h-2.5zM583.3,548.0h2.0v2.0h-2.0zM575.2,540.9h2.1v2.1h-2.1zM587.7,549.8h1.5v1.5h-1.5zM581.2,541.8h2.5v2.5h-2.5zM574.0,537.6h1.9v1.9h-1.9zM583.7,550.6h2.2v2.2h-2.2zM580.9,541.7h1.8v1.8h-1.8zM574.0,537.5h2.4v2.4h-2.4zM583.3,547.7h2.2v2.2h-2.2zM581.5,541.8h1.9v1.9h-1.9zM580.9,547.5h2.4v2.4h-2.4zM573.5,539.9h1.5v1.5h-1.5zM574.9,540.6h2.4v2.4h-2.4zM577.4,537.8h2.5v2.5h-2.5zM574.4,536.6h2.0v2.0h-2.0zM578.3,544.4h1.5v1.5h-1.5zM573.0,533.9h2.1v2.1h-2.1zM580.1,543.3h2.2v2.2h-2.2zM575.0,541.5h2.7v2.7h-2.7zM577.3,540.4h2.6v2.6h-2.6zM575.1,541.0h1.7v1.7h-1.7zM582.9,542.5h1.9v1.9h-1.9zM581.7,543.8h2.2v2.2h-2.2zM599.7,557.9h2.3v2.3h-2.3zM597.7,559.3h2.4v2.4h-2.4zM595.7,558.5h2.8v2.8h-2.8zM596.6,559.2h2.8v2.8h-2.8zM594.0,555.6h2.0v2.0h-2.0zM593.9,555.4h2.9v2.9h-2.9zM594.4,556.6h2.5v2.5h-2.5zM595.9,560.0h1.9v1.9h-1.9zM595.4,559.5h1.7v1.7h-1.7zM593.9,553.7h2.1v2.1h-2.1zM595.6,557.1h2.6v2.6h-2.6zM594.4,558.0h2.4v2.4h-2.4zM597.6,557.1h2.2v2.2h-2.2zM593.6,554.1h2.7v2.7h-2.7zM574.3,515.3h2.5v2.5h-2.5zM577.9,511.6h2.6v2.6h-2.6zM576.0,515.5h1.9v1.9h-1.9zM574.3,513.0h2.3v2.3h-2.3zM406.1,326.3h1.7v1.7h-1.7zM406.7,332.9h2.0v2.0h-2.0zM405.2,320.3h1.8v1.8h-1.8zM405.4,331.3h1.5v1.5h-1.5zM406.1,317.5h1.4v1.4h-1.4zM403.7,344.0h1.9v1.9h-1.9zM406.5,319.5h2.0v2.0h-2.0zM404.5,344.2h1.8v1.8h-1.8zM404.1,336.6h1.9v1.9h-1.9zM405.9,331.1h1.9v1.9h-1.9zM406.0,331.9h1.8v1.8h-1.8zM403.9,347.4h1.4v1.4h-1.4zM403.7,341.9h1.7v1.7h-1.7zM406.4,320.2h1.4v1.4h-1.4zM405.3,344.5h1.3v1.3h-1.3zM403.9,347.2h1.4v1.4h-1.4zM406.9,320.4h2.0v2.0h-2.0zM406.3,327.6h1.4v1.4h-1.4zM404.6,327.8h1.5v1.5h-1.5zM406.1,327.7h2.1v2.1h-2.1zM405.0,335.0h2.0v2.0h-2.0zM405.0,331.9h1.8v1.8h-1.8zM404.0,335.0h1.7v1.7h-1.7zM403.8,332.7h1.4v1.4h-1.4zM405.1,334.3h1.3v1.3h-1.3zM402.1,341.9h2.0v2.0h-2.0zM398.5,330.0h1.3v1.3h-1.3zM403.5,344.5h1.9v1.9h-1.9zM401.8,338.2h1.7v1.7h-1.7zM402.9,342.6h1.7v1.7h-1.7zM402.5,342.9h1.7v1.7h-1.7zM427.1,270.6h2.3v2.3h-2.3zM425.3,264.6h1.7v1.7h-1.7zM423.7,264.1h2.2v2.2h-2.2zM425.4,265.0h1.4v1.4h-1.4zM425.6,262.9h1.3v1.3h-1.3zM424.6,259.4h1.5v1.5h-1.5zM425.7,266.6h1.3v1.3h-1.3zM425.8,266.8h2.2v2.2h-2.2zM425.9,266.8h1.8v1.8h-1.8zM424.6,259.4h1.9v1.9h-1.9zM425.0,268.0h1.4v1.4h-1.4zM425.2,269.3h2.1v2.1h-2.1zM425.8,264.8h1.7v1.7h-1.7zM425.6,263.6h1.2v1.2h-1.2zM419.6,282.7h1.4v1.4h-1.4zM419.5,284.3h1.8v1.8h-1.8zM415.2,287.0h1.3v1.3h-1.3zM419.6,282.4h1.3v1.3h-1.3zM414.4,288.6h1.2v1.2h-1.2zM415.9,285.9h2.0v2.0h-2.0zM418.5,283.4h1.5v1.5h-1.5zM420.0,284.1h2.1v2.1h-2.1zM419.0,283.9h1.3v1.3h-1.3zM416.1,286.2h2.0v2.0h-2.0zM415.7,285.3h1.8v1.8h-1.8zM416.7,286.3h1.7v1.7h-1.7zM412.9,287.6h1.4v1.4h-1.4zM414.7,287.5h1.8v1.8h-1.8zM420.2,345.6h1.0v1.0h-1.0zM421.6,347.2h1.1v1.1h-1.1zM419.8,344.9h1.4v1.4h-1.4zM485.2,335.3h1.8v1.8h-1.8zM485.2,335.8h1.1v1.1h-1.1zM485.0,334.4h1.2v1.2h-1.2zM548.6,304.7h2.4v2.4h-2.4zM553.3,303.5h2.4v2.4h-2.4zM552.1,303.7h1.5v1.5h-1.5zM548.9,304.8h2.3v2.3h-2.3zM548.8,304.8h2.3v2.3h-2.3zM559.8,300.8h1.5v1.5h-1.5zM545.8,305.6h2.2v2.2h-2.2zM554.4,301.8h2.1v2.1h-2.1zM561.8,301.0h1.5v1.5h-1.5zM557.5,301.9h1.6v1.6h-1.6zM572.1,342.4h2.4v2.4h-2.4zM569.7,340.7h2.0v2.0h-2.0zM565.9,339.7h2.1v2.1h-2.1zM562.1,337.0h1.8v1.8h-1.8zM562.0,340.7h1.4v1.4h-1.4zM563.9,338.9h2.3v2.3h-2.3zM572.6,341.7h2.0v2.0h-2.0zM564.2,339.2h1.6v1.6h-1.6zM565.0,341.1h1.5v1.5h-1.5zM564.6,341.2h1.5v1.5h-1.5zM569.5,344.2h1.8v1.8h-1.8zM567.7,342.1h2.3v2.3h-2.3zM572.8,344.4h2.0v2.0h-2.0zM559.9,333.7h1.8v1.8h-1.8zM563.9,336.3h1.8v1.8h-1.8zM911.4,302.0h2.2v2.2h-2.2zM907.4,309.0h1.6v1.6h-1.6zM908.1,302.9h1.6v1.6h-1.6zM911.3,305.9h1.5v1.5h-1.5zM906.9,303.9h1.5v1.5h-1.5zM904.2,305.0h1.3v1.3h-1.3zM903.2,301.9h1.2v1.2h-1.2zM903.3,301.9h1.4v1.4h-1.4zM707.9,529.5h2.1v2.1h-2.1zM705.4,531.0h1.7v1.7h-1.7zM706.4,531.2h1.6v1.6h-1.6z"/>
<path fill="#e9131c" d="M696.3,154.3h1.4v1.4h-1.4zM687.2,138.7h1.9v1.9h-1.9zM703.4,130.6h1.5v1.5h-1.5zM672.6,144.2h2.2v2.2h-2.2zM702.9,146.9h2.0v2.0h-2.0zM704.7,140.9h1.8v1.8h-1.8zM710.2,136.5h1.4v1.4h-1.4zM695.3,154.0h2.2v2.2h-2.2zM692.5,154.5h2.0v2.0h-2.0zM701.6,135.2h1.5v1.5h-1.5zM670,157.0h2.6v2.6h-2.6zM703.1,150.6h1.9v1.9h-1.9zM690.2,149.0h2.3v2.3h-2.3zM702.0,140.8h1.6v1.6h-1.6zM688.5,147.6h1.9v1.9h-1.9zM691.7,137.1h1.5v1.5h-1.5zM703.7,123.6h1.4v1.4h-1.4zM710.8,147.6h1.8v1.8h-1.8zM695.8,148.8h1.7v1.7h-1.7zM714.7,169.2h2.0v2.0h-2.0zM694.3,161.3h1.4v1.4h-1.4zM689.2,135.8h2.4v2.4h-2.4zM700.7,152.2h2.4v2.4h-2.4zM705.5,158.6h1.6v1.6h-1.6zM713.6,145.5h1.5v1.5h-1.5zM699.8,129.4h1.9v1.9h-1.9zM695.5,144.4h2.2v2.2h-2.2zM691.3,131.6h1.6v1.6h-1.6zM696.0,152.6h1.9v1.9h-1.9zM702.9,150.3h2.2v2.2h-2.2zM704.4,146.2h2.3v2.3h-2.3zM688.3,168.5h1.2v1.2h-1.2zM711.3,145.7h1.6v1.6h-1.6zM704.2,158.6h1.6v1.6h-1.6zM695.0,152.3h1.5v1.5h-1.5zM682.5,161.0h1.5v1.5h-1.5zM695.6,151.6h1.6v1.6h-1.6zM701.1,174h2.1v2.1h-2.1zM670,138.8h1.6v1.6h-1.6zM695.1,147.2h1.8v1.8h-1.8zM705.9,152.1h1.8v1.8h-1.8zM689.8,156.9h1.2v1.2h-1.2zM703.5,159.7h2.2v2.2h-2.2zM693.3,122h2.5v2.5h-2.5zM716.2,151.4h1.7v1.7h-1.7zM678.3,140.6h1.7v1.7h-1.7zM703.3,161.8h1.8v1.8h-1.8zM702.4,148.9h2.5v2.5h-2.5zM699.5,152.0h2.0v2.0h-2.0zM693.6,174h2.1v2.1h-2.1zM697.6,130.1h2.5v2.5h-2.5zM689.2,141.5h1.6v1.6h-1.6zM700.0,138.4h1.6v1.6h-1.6zM709.2,150.5h1.3v1.3h-1.3zM703.4,137.1h1.7v1.7h-1.7zM694.5,144.1h1.4v1.4h-1.4zM716.1,133.0h2.1v2.1h-2.1zM710.6,158.7h2.0v2.0h-2.0zM702.7,137.0h1.3v1.3h-1.3zM704.4,149.6h2.5v2.5h-2.5zM690.1,130.8h1.5v1.5h-1.5zM690.6,142.3h1.7v1.7h-1.7zM700.5,156.8h1.9v1.9h-1.9zM692.2,153.6h1.8v1.8h-1.8zM686.6,125.5h1.4v1.4h-1.4zM709.6,157.5h2.1v2.1h-2.1zM697.8,162.5h2.4v2.4h-2.4zM694.4,174h2.0v2.0h-2.0zM693.6,161.5h1.6v1.6h-1.6zM695.8,128.7h1.5v1.5h-1.5zM713.4,153.1h1.6v1.6h-1.6zM712.8,157.4h2.4v2.4h-2.4zM689.9,153.3h1.2v1.2h-1.2zM701.0,141.3h1.6v1.6h-1.6zM696.7,164.8h1.4v1.4h-1.4zM686.9,124.0h2.6v2.6h-2.6zM679.3,155.2h2.0v2.0h-2.0zM708.6,170.3h2.0v2.0h-2.0zM709.1,182h1.5v1.5h-1.5zM704.7,168.0h2.3v2.3h-2.3zM707.0,163.4h1.6v1.6h-1.6zM710.6,173.6h2.0v2.0h-2.0zM706.0,164.5h1.5v1.5h-1.5zM709.3,182h2.4v2.4h-2.4zM712.4,167.3h1.7v1.7h-1.7zM712.4,158.2h1.7v1.7h-1.7zM710.3,174.4h2.1v2.1h-2.1zM714.1,162.1h2.0v2.0h-2.0zM712.1,166.4h1.5v1.5h-1.5zM670.7,143.2h2.1v2.1h-2.1zM671.0,142.5h2.1v2.1h-2.1zM671.2,152.0h1.2v1.2h-1.2zM684,145.7h2.5v2.5h-2.5zM667.3,152.6h2.3v2.3h-2.3zM671.4,151.9h1.6v1.6h-1.6zM669.3,143.8h2.3v2.3h-2.3zM667.1,152.6h1.6v1.6h-1.6zM665.1,150.5h2.1v2.1h-2.1zM674.4,149.3h1.5v1.5h-1.5zM666.4,140.5h2.3v2.3h-2.3zM674.7,153.9h1.9v1.9h-1.9zM670.7,146.2h1.4v1.4h-1.4zM674.5,151.0h2.2v2.2h-2.2zM666.7,141.3h1.7v1.7h-1.7zM680.1,148.0h1.5v1.5h-1.5zM671.1,147.3h2.1v2.1h-2.1zM680.4,149.4h2.1v2.1h-2.1zM660.8,145.0h1.6v1.6h-1.6zM665.9,150.4h2.4v2.4h-2.4zM668.1,151.7h1.7v1.7h-1.7zM675.5,145.3h1.5v1.5h-1.5zM673.3,144.5h1.6v1.6h-1.6zM673.6,142.9h1.6v1.6h-1.6zM662.0,147.0h2.3v2.3h-2.3zM666.5,148.6h1.3v1.3h-1.3zM672.5,150.0h1.9v1.9h-1.9zM671.7,146.3h2.1v2.1h-2.1zM681.9,146.0h2.1v2.1h-2.1zM668.1,144.9h1.7v1.7h-1.7zM680.9,145.6h2.0v2.0h-2.0zM673.6,144.9h1.2v1.2h-1.2zM678.4,145.6h1.2v1.2h-1.2zM673.2,150.4h2.2v2.2h-2.2zM777.8,175.5h1.7v1.7h-1.7zM771.4,174.4h1.4v1.4h-1.4zM781.0,176.2h2.0v2.0h-2.0zM773.9,177.8h1.3v1.3h-1.3zM778.6,174.2h1.9v1.9h-1.9zM775.1,179.2h1.8v1.8h-1.8zM772.7,177.3h1.6v1.6h-1.6zM770.6,177.4h1.8v1.8h-1.8zM771.5,174.0h2.0v2.0h-2.0zM783.9,172.5h1.6v1.6h-1.6zM771.0,175.0h1.1v1.1h-1.1zM782.1,175.3h2.1v2.1h-2.1zM772.0,180.3h1.6v1.6h-1.6zM781.5,175.4h2.1v2.1h-2.1zM783.8,176.7h1.4v1.4h-1.4zM776.1,177.2h1.2v1.2h-1.2zM770.3,175.1h2.0v2.0h-2.0zM772.1,176.0h1.5v1.5h-1.5zM777.8,191.2h1.2v1.2h-1.2zM784.6,185.8h1.9v1.9h-1.9zM781.8,191.6h1.3v1.3h-1.3zM780.2,180.8h2.0v2.0h-2.0zM781.1,188.9h1.4v1.4h-1.4zM779.7,192.0h2.1v2.1h-2.1zM778.8,188.7h1.0v1.0h-1.0zM781.5,185.1h1.9v1.9h-1.9zM782.4,185.8h1.8v1.8h-1.8zM778.6,188.9h1.4v1.4h-1.4zM786.4,195.8h1.5v1.5h-1.5zM782.6,183.6h1.6v1.6h-1.6zM784.4,191.9h2.0v2.0h-2.0zM780.0,192.4h1.9v1.9h-1.9zM776.4,189.1h1.1v1.1h-1.1zM778.1,191.6h1.8v1.8h-1.8zM782.7,195.3h1.8v1.8h-1.8zM778.9,189.5h1.8v1.8h-1.8zM782.1,188.4h1.4v1.4h-1.4zM773.2,187.7h1.2v1.2h-1.2zM775.7,187.1h1.9v1.9h-1.9zM781.2,192.5h1.4v1.4h-1.4zM777.8,185.3h1.1v1.1h-1.1zM775.9,185.0h2.1v2.1h-2.1zM780.1,181.5h1.4v1.4h-1.4zM783.3,188.7h2.1v2.1h-2.1zM777.9,192.5h2.0v2.0h-2.0zM779.2,192.4h2.1v2.1h-2.1zM779.9,190.7h1.5v1.5h-1.5zM782.9,183.8h1.5v1.5h-1.5zM780.1,190.7h1.9v1.9h-1.9zM779.4,190.2h2.1v2.1h-2.1zM774.2,184.4h1.1v1.1h-1.1zM776.7,187.6h1.7v1.7h-1.7zM773.8,190.8h1.4v1.4h-1.4zM774.0,188.8h2.0v2.0h-2.0zM779.2,194.8h1.3v1.3h-1.3zM780.2,198.4h1.8v1.8h-1.8zM784.4,195.1h1.5v1.5h-1.5zM783.1,195.9h1.1v1.1h-1.1zM780.0,190.4h1.8v1.8h-1.8zM773.7,183.7h1.7v1.7h-1.7zM785.2,196.7h1.8v1.8h-1.8zM779.7,187.3h1.7v1.7h-1.7zM782.2,186.1h1.8v1.8h-1.8zM779.6,189.8h1.4v1.4h-1.4zM776.2,194.2h1.4v1.4h-1.4zM778.1,189.3h1.2v1.2h-1.2zM778.5,186.0h1.6v1.6h-1.6zM777.7,193.7h1.6v1.6h-1.6zM785.7,185.1h1.1v1.1h-1.1zM786.8,197.0h1.8v1.8h-1.8zM781.2,210h1.6v1.6h-1.6zM786.3,202.3h2.0v2.0h-2.0zM784.3,201.0h1.9v1.9h-1.9zM785.3,197.5h2.1v2.1h-2.1zM788.1,206.3h2.2v2.2h-2.2zM787.7,199.3h1.2v1.2h-1.2zM781.3,197.9h2.2v2.2h-2.2zM785.8,206.0h1.0v1.0h-1.0zM787.4,194h1.5v1.5h-1.5zM783.2,205.4h1.3v1.3h-1.3zM790.1,202.2h1.8v1.8h-1.8zM789.9,197.1h1.6v1.6h-1.6zM786.5,199.4h2.2v2.2h-2.2zM787.8,209.7h2.1v2.1h-2.1zM785.7,201.5h2.0v2.0h-2.0zM784.5,199.0h1.3v1.3h-1.3zM783.6,203.1h1.2v1.2h-1.2zM811.6,183.8h1.4v1.4h-1.4zM811.2,186.9h1.9v1.9h-1.9zM823.8,218.4h1.7v1.7h-1.7zM821.4,219.6h2.0v2.0h-2.0zM822.6,218.9h1.8v1.8h-1.8zM821.4,216.7h2.1v2.1h-2.1zM823.6,220.9h1.3v1.3h-1.3zM822.5,217.7h1.6v1.6h-1.6zM823.3,218.4h1.7v1.7h-1.7zM824.6,221.7h2.0v2.0h-2.0zM824.9,218.3h1.5v1.5h-1.5zM822.2,221.8h1.7v1.7h-1.7zM825.6,219.4h1.7v1.7h-1.7zM640.9,223.4h1.4v1.4h-1.4zM640.7,219.0h2.1v2.1h-2.1zM642.1,219.3h1.5v1.5h-1.5zM644.1,225.8h1.4v1.4h-1.4zM648,222.4h1.6v1.6h-1.6zM644.1,223.2h1.3v1.3h-1.3zM646.2,222.6h1.2v1.2h-1.2zM642.3,225.9h1.8v1.8h-1.8zM640.0,219.4h1.2v1.2h-1.2zM643.3,222.5h1.5v1.5h-1.5zM637.2,219.4h1.2v1.2h-1.2zM744.6,370.2h2.1v2.1h-2.1zM739.8,376.8h1.8v1.8h-1.8zM757.6,409.7h1.9v1.9h-1.9zM768.5,381.4h1.6v1.6h-1.6zM758.4,413.6h2.6v2.6h-2.6zM764.1,386.9h2.6v2.6h-2.6zM758.1,393.7h2.6v2.6h-2.6zM752.1,377.0h3.0v3.0h-3.0zM746.3,366.4h2.3v2.3h-2.3zM721.3,364.0h2.8v2.8h-2.8zM749.9,394.2h2.6v2.6h-2.6zM757.3,377.1h3.1v3.1h-3.1zM729.8,359.8h1.6v1.6h-1.6zM762.1,392.5h3.1v3.1h-3.1zM730.6,375.7h2.8v2.8h-2.8zM752.3,388.8h2.0v2.0h-2.0zM750.2,370.6h2.2v2.2h-2.2zM743.7,385.4h3.1v3.1h-3.1zM764.1,390.3h3.2v3.2h-3.2zM734.4,395.6h2.0v2.0h-2.0zM735.6,378.6h2.6v2.6h-2.6zM748.8,368.8h2.6v2.6h-2.6zM733.0,357.7h1.8v1.8h-1.8zM733.7,363.7h2.9v2.9h-2.9zM741.7,369.7h3.1v3.1h-3.1zM756.3,373.7h2.2v2.2h-2.2zM756.7,379.8h2.3v2.3h-2.3zM732.3,380.1h3.1v3.1h-3.1zM719.4,360.5h2.6v2.6h-2.6zM750.7,373.7h1.8v1.8h-1.8zM750.7,397.6h1.9v1.9h-1.9zM742.2,390.8h2.3v2.3h-2.3zM736.0,375.1h2.2v2.2h-2.2zM729.1,359.6h3.2v3.2h-3.2zM731.9,351.8h1.7v1.7h-1.7zM757.1,377.9h2.9v2.9h-2.9zM748.8,372.7h2.5v2.5h-2.5zM545.8,497.2h1.6v1.6h-1.6zM550.6,495.4h2.2v2.2h-2.2zM546.4,496.2h2.1v2.1h-2.1zM549.0,494.2h1.8v1.8h-1.8zM549.0,496.2h2.8v2.8h-2.8zM543.4,498.2h2.7v2.7h-2.7zM551.4,495.1h2.1v2.1h-2.1zM546.1,493.4h2.2v2.2h-2.2zM550.5,495.7h2.6v2.6h-2.6zM544.5,495.9h2.5v2.5h-2.5zM549.9,494.5h2.1v2.1h-2.1zM544.2,495.9h1.8v1.8h-1.8zM552.1,491.8h2.7v2.7h-2.7zM544.7,495.9h1.7v1.7h-1.7zM547.9,495.5h2.3v2.3h-2.3zM551.3,493.2h2.7v2.7h-2.7zM542.7,496.5h2.6v2.6h-2.6zM543.0,497.0h2.6v2.6h-2.6zM545.9,494.8h2.0v2.0h-2.0zM546.1,496.6h2.5v2.5h-2.5zM549.5,495.4h1.7v1.7h-1.7zM546.4,495.9h2.3v2.3h-2.3zM547.3,496.1h1.7v1.7h-1.7zM549.6,495.7h2.8v2.8h-2.8zM550.8,495.0h2.8v2.8h-2.8zM547.7,495.9h1.9v1.9h-1.9zM548.1,495.6h2.2v2.2h-2.2zM548.8,495.1h1.9v1.9h-1.9zM547.3,496.9h3.0v3.0h-3.0zM544.7,494.9h2.2v2.2h-2.2zM544.4,495.5h2.1v2.1h-2.1zM551.0,494.5h2.2v2.2h-2.2zM570.9,529.2h1.8v1.8h-1.8zM569.3,524.3h2.2v2.2h-2.2zM567.2,524.2h1.9v1.9h-1.9zM570.1,524.3h2.4v2.4h-2.4zM571.9,526.4h2.1v2.1h-2.1zM569.5,525.3h3.0v3.0h-3.0zM570.1,529.4h3.0v3.0h-3.0zM569.2,526.3h2.3v2.3h-2.3zM570.4,530.3h2.1v2.1h-2.1zM580.6,543.5h1.8v1.8h-1.8zM579.9,542.6h2.1v2.1h-2.1zM582.9,543.1h2.7v2.7h-2.7zM585.2,545.8h2.1v2.1h-2.1zM574.6,541.2h2.3v2.3h-2.3zM579.8,543.5h3.0v3.0h-3.0zM580.4,543.6h1.7v1.7h-1.7zM578.7,543.5h3.0v3.0h-3.0zM574.9,541.0h2.6v2.6h-2.6zM580.9,543.5h1.8v1.8h-1.8zM577.1,542.5h2.9v2.9h-2.9zM576.3,542.5h2.7v2.7h-2.7zM583.2,544.5h2.3v2.3h-2.3zM578.9,541.9h2.4v2.4h-2.4zM577.0,541.6h2.9v2.9h-2.9zM578.4,542.0h2.5v2.5h-2.5zM577.7,542.4h2.5v2.5h-2.5zM576.4,541.3h1.7v1.7h-1.7zM579.0,541.3h2.7v2.7h-2.7zM581.2,545.0h2.7v2.7h-2.7zM580.0,542.2h2.3v2.3h-2.3zM577.1,540.2h2.8v2.8h-2.8zM580.7,543.7h2.6v2.6h-2.6zM579.5,542.5h2.9v2.9h-2.9zM404.7,333.8h1.5v1.5h-1.5zM404.3,338.2h1.6v1.6h-1.6zM403.7,328.2h1.8v1.8h-1.8zM404.5,335.7h1.6v1.6h-1.6zM404.9,333.0h1.5v1.5h-1.5zM405.7,326.9h1.3v1.3h-1.3zM404.4,336.8h1.5v1.5h-1.5zM403.6,339.8h1.7v1.7h-1.7zM404.4,336.0h2.0v2.0h-2.0zM405.4,334.2h1.6v1.6h-1.6zM403.7,334.3h1.2v1.2h-1.2zM403.5,334.7h1.7v1.7h-1.7zM404.7,340.1h2.1v2.1h-2.1zM403.6,337.8h1.8v1.8h-1.8zM404.6,337.0h1.4v1.4h-1.4zM404.2,339.2h1.8v1.8h-1.8zM405.3,328.5h2.0v2.0h-2.0zM405.8,337.0h1.5v1.5h-1.5zM404.0,337.7h1.3v1.3h-1.3zM401.6,342.6h1.5v1.5h-1.5zM399.2,330.4h1.5v1.5h-1.5zM403.2,346.0h1.2v1.2h-1.2zM399.4,332.0h1.4v1.4h-1.4zM398.2,331.7h1.8v1.8h-1.8zM399.6,335.9h1.7v1.7h-1.7zM400.1,335.0h1.5v1.5h-1.5zM425.7,259.9h1.8v1.8h-1.8zM425.5,265.2h1.6v1.6h-1.6zM426.3,270.4h1.9v1.9h-1.9zM426.3,271.0h1.6v1.6h-1.6zM424.3,260.8h2.3v2.3h-2.3zM423.8,261.0h2.3v2.3h-2.3zM425.0,268.1h1.5v1.5h-1.5zM423.7,259.1h2.3v2.3h-2.3zM424.8,267.4h1.4v1.4h-1.4zM424.2,268.8h1.9v1.9h-1.9zM423.4,266.6h1.7v1.7h-1.7zM465.6,437.4h1.4v1.4h-1.4zM465.6,438.9h1.3v1.3h-1.3zM465.3,439.5h2.0v2.0h-2.0zM464.2,438.6h1.3v1.3h-1.3zM464.6,436.9h2.0v2.0h-2.0zM464.3,437.5h1.8v1.8h-1.8zM464.0,436.6h1.4v1.4h-1.4zM483.8,335.9h1.9v1.9h-1.9zM483.6,334.3h1.7v1.7h-1.7zM484.6,336.8h1.7v1.7h-1.7zM555.1,303.7h1.4v1.4h-1.4zM550.4,302.9h1.6v1.6h-1.6zM554.7,303.0h1.9v1.9h-1.9zM552.6,302.8h1.8v1.8h-1.8zM554.0,304.1h2.3v2.3h-2.3zM556.8,302.4h2.4v2.4h-2.4zM547.6,304.8h2.0v2.0h-2.0zM557.7,302.7h1.5v1.5h-1.5zM553.8,304.1h1.6v1.6h-1.6zM555.2,303.5h1.6v1.6h-1.6zM559.3,302.0h1.9v1.9h-1.9zM563.4,300.4h1.8v1.8h-1.8zM565.6,300.8h1.3v1.3h-1.3zM547.3,305.2h1.7v1.7h-1.7zM551.9,303.9h2.1v2.1h-2.1zM556.8,301.9h2.0v2.0h-2.0zM551.3,303.6h1.6v1.6h-1.6zM563.7,302.2h1.4v1.4h-1.4zM554.0,302.2h1.9v1.9h-1.9zM557.4,302.3h2.2v2.2h-2.2zM565.4,300.0h1.7v1.7h-1.7zM564.1,300.1h1.8v1.8h-1.8zM557.2,302.5h1.5v1.5h-1.5zM547.4,304.1h1.7v1.7h-1.7zM548.0,304.6h1.4v1.4h-1.4zM545.4,306.3h1.6v1.6h-1.6zM554.2,303.2h2.0v2.0h-2.0zM547.3,304.2h2.3v2.3h-2.3zM555.6,304.3h2.1v2.1h-2.1zM557.0,302.7h1.4v1.4h-1.4zM558.1,302.7h2.1v2.1h-2.1zM554.3,303.6h2.0v2.0h-2.0zM564.3,301.4h2.0v2.0h-2.0zM547.1,304.5h1.8v1.8h-1.8zM554.6,301.8h2.3v2.3h-2.3zM559.2,302.1h1.7v1.7h-1.7zM565.4,300.0h1.6v1.6h-1.6zM545.7,304.5h2.2v2.2h-2.2zM567.3,301.2h1.7v1.7h-1.7zM553.3,302.4h1.9v1.9h-1.9zM551.6,303.8h1.7v1.7h-1.7zM547.7,303.9h1.8v1.8h-1.8zM560.9,301.1h2.2v2.2h-2.2zM559.2,337.5h2.2v2.2h-2.2zM560.1,335.1h1.8v1.8h-1.8zM558.8,336.1h1.7v1.7h-1.7zM572.2,343.0h1.4v1.4h-1.4zM556.9,333.7h1.5v1.5h-1.5zM558.8,335.2h1.5v1.5h-1.5zM562.9,338.0h1.5v1.5h-1.5zM558.7,338.7h1.8v1.8h-1.8zM563.3,337.3h1.4v1.4h-1.4zM568.9,339.4h1.6v1.6h-1.6zM562.9,340.0h1.6v1.6h-1.6zM566.2,339.3h1.6v1.6h-1.6zM571.2,344.9h1.5v1.5h-1.5zM559.8,336.5h2.0v2.0h-2.0zM562.9,333.7h2.4v2.4h-2.4zM563.4,336.8h1.5v1.5h-1.5zM564.9,336.4h1.9v1.9h-1.9zM561.6,337.3h2.0v2.0h-2.0zM572.8,343.3h1.6v1.6h-1.6zM563.1,338.0h1.6v1.6h-1.6zM568.7,339.1h2.4v2.4h-2.4zM569.7,342.0h2.1v2.1h-2.1zM570.7,342.6h1.4v1.4h-1.4zM561.6,335.2h1.5v1.5h-1.5zM565.4,336.6h2.0v2.0h-2.0zM565.9,341.5h1.7v1.7h-1.7zM906.8,304.9h1.8v1.8h-1.8zM910.5,301.7h1.2v1.2h-1.2zM909.5,302.4h1.7v1.7h-1.7zM904.6,299.3h2.0v2.0h-2.0zM905.0,301.6h2.1v2.1h-2.1zM907.8,307.1h2.2v2.2h-2.2zM907.1,303.3h1.6v1.6h-1.6zM906.5,304.1h1.7v1.7h-1.7zM892.5,284.9h1.9v1.9h-1.9zM887.3,284.7h1.4v1.4h-1.4zM896.3,282.5h2.2v2.2h-2.2zM895.7,283.8h1.3v1.3h-1.3zM889.4,281.6h2.0v2.0h-2.0zM891.1,282.3h1.2v1.2h-1.2zM801.1,262.3h1.5v1.5h-1.5zM799.0,263.7h2.0v2.0h-2.0zM801.8,261.6h1.2v1.2h-1.2zM798.4,262.7h1.9v1.9h-1.9zM466.9,435.1h2.1v2.1h-2.1zM466.5,438.2h1.7v1.7h-1.7zM465.8,437.3h1.2v1.2h-1.2zM465.3,439h1.3v1.3h-1.3zM465.9,437.6h1.6v1.6h-1.6zM466.2,436.2h1.5v1.5h-1.5zM824.2,310.7h1.2v1.2h-1.2zM794.1,400.6h1.2v1.2h-1.2zM921.6,347.3h1.2v1.2h-1.2zM819.5,465.6h1.2v1.2h-1.2zM806.1,295.9h1.2v1.2h-1.2zM718.5,308.7h1.2v1.2h-1.2zM884.1,398.9h1.2v1.2h-1.2zM751.3,463.5h1.2v1.2h-1.2zM632.6,456.0h1.2v1.2h-1.2zM684.7,537.5h1.2v1.2h-1.2zM703.7,423.7h1.2v1.2h-1.2zM744.1,400.9h1.2v1.2h-1.2zM752.2,266.5h1.2v1.2h-1.2zM681.5,444.7h1.2v1.2h-1.2zM636.8,317.0h1.2v1.2h-1.2zM765.7,334.5h1.2v1.2h-1.2zM916.3,356.3h1.2v1.2h-1.2zM821.5,241.2h1.2v1.2h-1.2zM931.9,304.9h1.2v1.2h-1.2zM598.1,160.0h1.1v1.1h-1.1zM657.6,150.8h1.1v1.1h-1.1zM640.7,218.7h1.1v1.1h-1.1zM599.0,203.6h1.1v1.1h-1.1zM605.2,199.3h1.1v1.1h-1.1zM696.6,200.1h1.1v1.1h-1.1zM696.0,257.9h1.1v1.1h-1.1zM605.2,196.9h1.1v1.1h-1.1zM663.8,168.7h1.1v1.1h-1.1zM708.4,186.1h1.1v1.1h-1.1zM704.2,183.1h1.1v1.1h-1.1z"/>
</g>
</svg>
<div id="topbar"></div>
<svg id="logo" width="180" height="110" viewBox="0 20 180 110" style="position:absolute;left:0;top:20px">
<defs><clipPath id="lgclip"><path d="M23.8,73.5 L27.9,65.4 L31.3,57.2 L40.9,50.4 L44.3,52.4 L55.8,50.4 L64.0,45.6 L73.5,44.3 L76.2,42.9 L81.7,45.0 L85.7,51.8 L91.2,55.2 L98.0,57.2 L100.7,65.4 L99.4,73.5 L103.4,76.3 L113.0,82.4 L110.2,87.1 L102.1,91.2 L99.4,99.4 L91.2,106.2 L84.4,111.6 L76.2,109.6 L73.5,106.2 L69.4,103.5 L61.3,110.3 L58.5,117.1 L55.8,119.8 L49.0,113.0 L44.3,106.2 L38.1,102.1 L32.7,96.7 L30.0,87.1 L26.6,80.3Z"/></clipPath></defs>
<path d="M23.8,73.5 L27.9,65.4 L31.3,57.2 L40.9,50.4 L44.3,52.4 L55.8,50.4 L64.0,45.6 L73.5,44.3 L76.2,42.9 L81.7,45.0 L85.7,51.8 L91.2,55.2 L98.0,57.2 L100.7,65.4 L99.4,73.5 L103.4,76.3 L113.0,82.4 L110.2,87.1 L102.1,91.2 L99.4,99.4 L91.2,106.2 L84.4,111.6 L76.2,109.6 L73.5,106.2 L69.4,103.5 L61.3,110.3 L58.5,117.1 L55.8,119.8 L49.0,113.0 L44.3,106.2 L38.1,102.1 L32.7,96.7 L30.0,87.1 L26.6,80.3Z" fill="#26b574"/>
<g clip-path="url(#lgclip)">
<g fill="#076b3b"><path d="M30.2,59.3L39.5,53.1Q44.3,64.0 44.3,72.2Q39.5,80.3 32.0,85.8Q27.9,73.5 30.2,59.3Z"/><path d="M51.1,73.5Q49.7,58.6 67.4,56.5Q68.7,70.8 76.9,77.6Q77.6,80.3 76.2,82.4Q59.9,83.1 51.1,73.5Z"/><path d="M63.3,46.1L73.5,43.6L76.2,42.2L82.3,44.3L86.4,51.8L91.9,55.2Q84.4,58.6 80.3,62.0Q69.4,55.9 63.3,46.1Z"/><path d="M91.9,55.2L98.7,56.9L101.4,65.4L100.7,68.8Q89.8,69.5 83.7,76.9L77.9,76.9Q74.9,65.4 91.9,55.2Z"/><path d="M98.3,75.6L103.4,76.0L113.6,82.4L113.0,84.4Q96.6,83.7 84.4,87.8Q83.0,84.4 84.4,81.7Q92.6,80.3 98.3,75.6Z"/><path d="M83.7,96.7Q91.2,92.9 101.4,93.9L99.6,99.7Q91.2,101.4 83.7,96.7Z"/><path d="M31.1,91.9Q42.2,85.1 55.8,86.5L59.9,89.9Q53.1,103.5 56.1,119.8L49.0,113.3L44.3,106.2L38.1,102.1L32.4,96.9Z"/></g>
<g fill="none" stroke="#fff" stroke-width="1.25"><path d="M29.7,59.3Q27.5,73.5 32.0,86.1"/><path d="M39.5,51.8Q44.3,64.0 44.3,72.2Q39.5,80.3 30.2,87.8"/><path d="M47.9,51.8Q48.3,65.4 44.3,72.2Q55.8,81.7 76.2,82.4"/><path d="M51.1,74.2Q49.3,58.6 68.1,56.5"/><path d="M62.9,46.1Q69.4,56.5 80.6,62.0"/><path d="M67.8,56.5Q68.7,70.8 76.9,77.6Q80.3,81.0 84.4,81.7"/><path d="M92.3,54.9Q73.5,65.4 77.9,84.4L78.9,93.7"/><path d="M83.4,77.3Q89.8,69.5 101.0,68.8"/><path d="M83.4,77.9Q95.3,82.4 101.0,69.7"/><path d="M29.7,89.9Q42.2,84.4 55.8,86.5L65.1,83.7"/><path d="M65.1,83.7Q52.4,100.7 56.1,119.8"/><path d="M59.9,89.9Q66.7,93.9 71.1,102.8"/><path d="M71.1,102.8Q78.9,87.1 98.0,84.4L113.2,84.4"/><path d="M78.9,93.4Q88.5,100.7 99.6,99.7"/><path d="M83.0,96.9Q91.2,92.6 101.8,93.9"/><path d="M96.6,84.4L102.3,91.5"/><path d="M84.4,81.7Q83.0,84.4 84.7,88.2"/></g>
</g>
<g fill="#fff" font-family="'Liberation Sans',sans-serif" font-weight="bold" font-size="16.4" text-anchor="end">
<text x="165.2" y="48.7" textLength="74" lengthAdjust="spacingAndGlyphs">AMAZON</text>
<text x="165.2" y="62.3" textLength="59.6" lengthAdjust="spacingAndGlyphs">MINING</text>
<text x="165.5" y="76" textLength="54" lengthAdjust="spacingAndGlyphs">WATCH</text>
</g>
</svg>
<div id="dd1"><span>Países</span><svg width="10" height="8" viewBox="0 0 10 8"><path d="M0.8,0.8 L4.9,6.6 L9,0.8" fill="none" stroke="#fff" stroke-width="1"/></svg></div>
<div id="dd2"><span>Selecione uma área...</span><svg width="12" height="8" viewBox="0 0 12 8"><path d="M1.5,1.5 L6,6 L10.5,1.5" fill="none" stroke="#0b5e3c" stroke-width="2" stroke-linecap="round" stroke-linejoin="round"/></svg></div>
<svg id="partners" width="430" height="50" viewBox="0 525 430 50" style="position:absolute;left:0;top:525px">
<!-- Pulitzer -->
<circle cx="27.6" cy="548.7" r="9.45" fill="#45a67c"/>
<g fill="none" stroke="#dedede" stroke-width="1.25"><path d="M17.5,543.5 H25 a2.85,2.85 0 0 1 0,5.7 H17.5"/><path d="M38,547.9 H30.3 a3.15,3.15 0 0 0 0,6.3 H38"/></g>
<text x="42.6" y="555.4" font-family="'Liberation Sans',sans-serif" font-weight="bold" font-size="18.2" fill="#45a67c" textLength="119" lengthAdjust="spacingAndGlyphs">Pulitzer Center</text>
<!-- RIN -->
<circle cx="195.6" cy="549.3" r="16.85" fill="#45a67c"/>
<path d="M181.2,539.7 L183,537.9 L189,537 L198,536.4 L204,535.8 L207.7,537 L208.9,538.5 L207.7,538.8 L205.2,539.4 L202.8,540 L202.2,538.8 L200.4,538.2 L199.2,539.4 L198,538.5 L196.2,538.8 L195,540 L194.4,541.8 L193.2,540.9 L192.6,539.4 L190.8,539.4 L189,541.8 L187.2,543.9 L186,543 L184.2,542.4 L183.6,540.9 L181.8,540.9Z" fill="#f2f7f4"/>
<path d="M186,534.4 Q195.6,531.6 205.2,534.4" fill="none" stroke="#cfe6da" stroke-width="1" opacity="0.8"/>
<text x="195.7" y="557.3" text-anchor="middle" font-family="'Liberation Sans',sans-serif" font-size="13.4" fill="#f4f9f6" textLength="21.8" lengthAdjust="spacingAndGlyphs">RIN</text>
<!-- Amazon Conservation -->
<rect x="229.2" y="532.2" width="84.5" height="33.4" fill="#93c9ae"/>
<path d="M229.2,532.2 H313.7 V547 L300,549 L285,552 L270,549.5 L255,551 L240,549 L229.2,551Z" fill="#6fb294"/>
<text x="234.4" y="553.7" font-family="'Liberation Sans',sans-serif" font-weight="bold" font-size="21.6" fill="#fff" textLength="75.8" lengthAdjust="spacingAndGlyphs">AMAZON</text>
<text x="232.9" y="560.9" font-family="'Liberation Sans',sans-serif" font-weight="bold" font-size="5.6" fill="#fff" textLength="77" lengthAdjust="spacing">CONSERVATION</text>
<!-- Earth Genome -->
<g transform="translate(0,0.6)"><path d="M330.4,548.2 A15,15 0 0 1 360.4,548.2 V550.6 H330.4Z M336.8,546.5 H354 A9,9 0 0 0 336.8,546.5Z" fill="#45a67c" fill-rule="evenodd"/>
<path d="M331.4,554.6 H338.3 A9,9 0 0 0 352.5,554.6 H359.4 A15,15 0 0 1 331.4,554.6Z" fill="#45a67c"/></g>
<g font-family="'Liberation Sans',sans-serif" font-weight="bold" font-size="10.6" fill="#45a67c">
<text x="367.3" y="550" textLength="31" lengthAdjust="spacingAndGlyphs">Earth</text>
<text x="367.3" y="562.7" textLength="47" lengthAdjust="spacingAndGlyphs">Genome</text>
</g>
</svg>
<div id="mini"><svg width="149" height="94" viewBox="6 590.5 149 94">
<g fill="none" stroke="#555" stroke-width="0.5">
<path d="M23.4,595.5 L27,598 L30.6,601 L32,603 L34.6,604.3 L36,601 L38.7,599.5 L41,601 L43.5,602 L46,599 L48.3,596.3"/>
<path d="M42.7,603.5 L43.5,608 L43.5,614 L40,619 L36.3,623.7 L35,630 L34.6,636.6 L37,643 L40.3,649.5 L44,657 L48.3,664 L54,669 L59.6,673.6 L63.6,679.3"/>
<path d="M54.8,596.3 L54,600 L54.8,602.7 L57,605 L59.6,606 L63,607 L66.9,607.6"/>
<path d="M58,596 L57,599 L58.5,600 L59.5,598 L58,596"/>
<path d="M66,595.5 L70,596.5 L74,596.3 L77,595.8 L80.6,596.3 L83,597"/>
<path d="M124,631 L128,632 L133.7,632.5 L139,635 L143.4,639 L145.5,643 L145.8,646.2 L142,653 L137,660.7 L136.5,670 L136.2,679.3"/>
<path d="M63.6,667 L65,672 L64,676 L66,679.5"/>
<path d="M60,660 L63.6,667 L68,672"/>
<path d="M86,679 L92,678 L93,674 L90,671"/>
<path d="M11.3,626 L12.5,627.5 M13.5,626.5 L14.5,627.7"/>
</g>
<use href="#amz" fill="#24b574" transform="translate(38.3,597) scale(0.1578,0.1509) translate(-401,-86)"/>
</svg></div>
<div id="legend">
<div class="t" style="left:12.5px">Mineração mais antiga</div>
<div class="t" style="right:12px">Mineração mais recente</div>
<div class="bar" style="left:12.0px;background:#f8dfa9"></div><div class="bar" style="left:61.0px;background:#f6cd80"></div><div class="bar" style="left:110.0px;background:#f2b347"></div><div class="bar" style="left:159.0px;background:#f19d12"></div><div class="bar" style="left:208.0px;background:#ef7f12"></div><div class="bar" style="left:257.0px;background:#ea0f1c"></div>
<div class="btn" style="left:5.2px;width:26.7px;background:#fff"><svg width="27" height="27" viewBox="0 0 27 27"><path d="M16,8.8 L10.6,13.6 L16,18.4" fill="none" stroke="#4f7f78" stroke-width="1.3"/></svg></div>
<div style="position:absolute;left:39px;top:63px;width:160px;height:27px;background:#fff"></div>
<div class="yr" style="left:55.2px;width:30px"><span>2024</span></div>
<div class="yr" style="left:112.8px;width:70px"><span style="transform:none">2025 Q1-Q2</span></div>
<div class="yr" style="left:197.5px;width:77.5px;background:#05693a;color:#fff;border-radius:0 6px 6px 0"><span>2025 Q3</span></div>
<div class="btn" style="left:282px;width:27px;background:#f9f9f9"><svg width="27" height="27" viewBox="0 0 27 27"><path d="M11.2,9.2 L16,13.6 L11.2,18" fill="none" stroke="#b5bcbc" stroke-width="1.2"/></svg></div>
</div>

</body></html>
